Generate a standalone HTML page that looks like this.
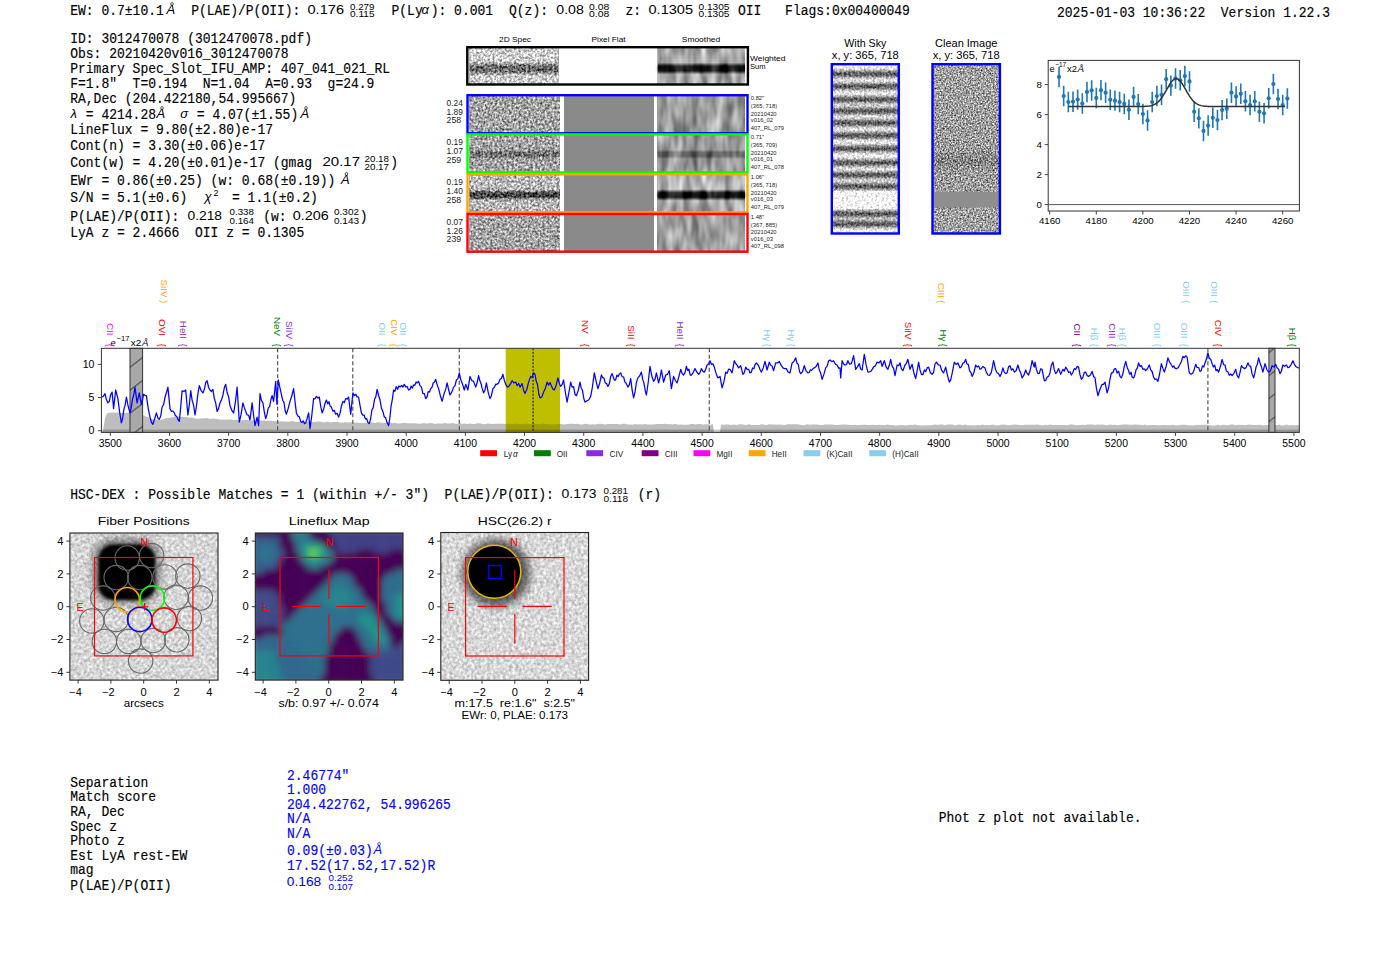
<!DOCTYPE html>
<html><head><meta charset="utf-8"><style>html,body{margin:0;padding:0;background:#fff;width:1400px;height:953px;overflow:hidden}svg{display:block} text{white-space:pre}</style></head>
<body><svg width="1400" height="953" viewBox="0 0 1400 953">
<defs><filter id="gr0" x="0" y="0" width="1" height="1" color-interpolation-filters="sRGB"><feTurbulence type="fractalNoise" baseFrequency="0.42" numOctaves="2" seed="11" result="t"/><feColorMatrix in="t" type="matrix" values="1 0 0 0 0  1 0 0 0 0  1 0 0 0 0  0 0 0 0 1" result="g"/><feComposite in="SourceGraphic" in2="g" operator="arithmetic" k1="0" k2="1" k3="1.15" k4="-0.575" result="m"/><feComposite in="m" in2="SourceGraphic" operator="in"/></filter><filter id="gr1" x="0" y="0" width="1" height="1" color-interpolation-filters="sRGB"><feTurbulence type="fractalNoise" baseFrequency="0.42" numOctaves="2" seed="12" result="t"/><feColorMatrix in="t" type="matrix" values="1 0 0 0 0  1 0 0 0 0  1 0 0 0 0  0 0 0 0 1" result="g"/><feComposite in="SourceGraphic" in2="g" operator="arithmetic" k1="0" k2="1" k3="1.15" k4="-0.575" result="m"/><feComposite in="m" in2="SourceGraphic" operator="in"/></filter><filter id="gr2" x="0" y="0" width="1" height="1" color-interpolation-filters="sRGB"><feTurbulence type="fractalNoise" baseFrequency="0.42" numOctaves="2" seed="13" result="t"/><feColorMatrix in="t" type="matrix" values="1 0 0 0 0  1 0 0 0 0  1 0 0 0 0  0 0 0 0 1" result="g"/><feComposite in="SourceGraphic" in2="g" operator="arithmetic" k1="0" k2="1" k3="1.15" k4="-0.575" result="m"/><feComposite in="m" in2="SourceGraphic" operator="in"/></filter><filter id="gr3" x="0" y="0" width="1" height="1" color-interpolation-filters="sRGB"><feTurbulence type="fractalNoise" baseFrequency="0.42" numOctaves="2" seed="14" result="t"/><feColorMatrix in="t" type="matrix" values="1 0 0 0 0  1 0 0 0 0  1 0 0 0 0  0 0 0 0 1" result="g"/><feComposite in="SourceGraphic" in2="g" operator="arithmetic" k1="0" k2="1" k3="1.15" k4="-0.575" result="m"/><feComposite in="m" in2="SourceGraphic" operator="in"/></filter><filter id="gr4" x="0" y="0" width="1" height="1" color-interpolation-filters="sRGB"><feTurbulence type="fractalNoise" baseFrequency="0.42" numOctaves="2" seed="15" result="t"/><feColorMatrix in="t" type="matrix" values="1 0 0 0 0  1 0 0 0 0  1 0 0 0 0  0 0 0 0 1" result="g"/><feComposite in="SourceGraphic" in2="g" operator="arithmetic" k1="0" k2="1" k3="1.15" k4="-0.575" result="m"/><feComposite in="m" in2="SourceGraphic" operator="in"/></filter><filter id="gr5" x="0" y="0" width="1" height="1" color-interpolation-filters="sRGB"><feTurbulence type="fractalNoise" baseFrequency="0.42" numOctaves="2" seed="16" result="t"/><feColorMatrix in="t" type="matrix" values="1 0 0 0 0  1 0 0 0 0  1 0 0 0 0  0 0 0 0 1" result="g"/><feComposite in="SourceGraphic" in2="g" operator="arithmetic" k1="0" k2="1" k3="1.15" k4="-0.575" result="m"/><feComposite in="m" in2="SourceGraphic" operator="in"/></filter><filter id="gr6" x="0" y="0" width="1" height="1" color-interpolation-filters="sRGB"><feTurbulence type="fractalNoise" baseFrequency="0.42" numOctaves="2" seed="17" result="t"/><feColorMatrix in="t" type="matrix" values="1 0 0 0 0  1 0 0 0 0  1 0 0 0 0  0 0 0 0 1" result="g"/><feComposite in="SourceGraphic" in2="g" operator="arithmetic" k1="0" k2="1" k3="1.15" k4="-0.575" result="m"/><feComposite in="m" in2="SourceGraphic" operator="in"/></filter><filter id="gr7" x="0" y="0" width="1" height="1" color-interpolation-filters="sRGB"><feTurbulence type="fractalNoise" baseFrequency="0.42" numOctaves="2" seed="18" result="t"/><feColorMatrix in="t" type="matrix" values="1 0 0 0 0  1 0 0 0 0  1 0 0 0 0  0 0 0 0 1" result="g"/><feComposite in="SourceGraphic" in2="g" operator="arithmetic" k1="0" k2="1" k3="1.15" k4="-0.575" result="m"/><feComposite in="m" in2="SourceGraphic" operator="in"/></filter><filter id="sm0" x="0" y="0" width="1" height="1" color-interpolation-filters="sRGB"><feTurbulence type="fractalNoise" baseFrequency="0.12 0.035" numOctaves="2" seed="31" result="t"/><feColorMatrix in="t" type="matrix" values="1 0 0 0 0  1 0 0 0 0  1 0 0 0 0  0 0 0 0 1" result="g"/><feComposite in="SourceGraphic" in2="g" operator="arithmetic" k1="0" k2="1" k3="0.75" k4="-0.375" result="m"/><feComposite in="m" in2="SourceGraphic" operator="in"/></filter><filter id="sm1" x="0" y="0" width="1" height="1" color-interpolation-filters="sRGB"><feTurbulence type="fractalNoise" baseFrequency="0.12 0.035" numOctaves="2" seed="32" result="t"/><feColorMatrix in="t" type="matrix" values="1 0 0 0 0  1 0 0 0 0  1 0 0 0 0  0 0 0 0 1" result="g"/><feComposite in="SourceGraphic" in2="g" operator="arithmetic" k1="0" k2="1" k3="0.75" k4="-0.375" result="m"/><feComposite in="m" in2="SourceGraphic" operator="in"/></filter><filter id="sm2" x="0" y="0" width="1" height="1" color-interpolation-filters="sRGB"><feTurbulence type="fractalNoise" baseFrequency="0.12 0.035" numOctaves="2" seed="33" result="t"/><feColorMatrix in="t" type="matrix" values="1 0 0 0 0  1 0 0 0 0  1 0 0 0 0  0 0 0 0 1" result="g"/><feComposite in="SourceGraphic" in2="g" operator="arithmetic" k1="0" k2="1" k3="0.75" k4="-0.375" result="m"/><feComposite in="m" in2="SourceGraphic" operator="in"/></filter><filter id="sm3" x="0" y="0" width="1" height="1" color-interpolation-filters="sRGB"><feTurbulence type="fractalNoise" baseFrequency="0.12 0.035" numOctaves="2" seed="34" result="t"/><feColorMatrix in="t" type="matrix" values="1 0 0 0 0  1 0 0 0 0  1 0 0 0 0  0 0 0 0 1" result="g"/><feComposite in="SourceGraphic" in2="g" operator="arithmetic" k1="0" k2="1" k3="0.75" k4="-0.375" result="m"/><feComposite in="m" in2="SourceGraphic" operator="in"/></filter><filter id="sm4" x="0" y="0" width="1" height="1" color-interpolation-filters="sRGB"><feTurbulence type="fractalNoise" baseFrequency="0.12 0.035" numOctaves="2" seed="35" result="t"/><feColorMatrix in="t" type="matrix" values="1 0 0 0 0  1 0 0 0 0  1 0 0 0 0  0 0 0 0 1" result="g"/><feComposite in="SourceGraphic" in2="g" operator="arithmetic" k1="0" k2="1" k3="0.75" k4="-0.375" result="m"/><feComposite in="m" in2="SourceGraphic" operator="in"/></filter><filter id="sm5" x="0" y="0" width="1" height="1" color-interpolation-filters="sRGB"><feTurbulence type="fractalNoise" baseFrequency="0.12 0.035" numOctaves="2" seed="36" result="t"/><feColorMatrix in="t" type="matrix" values="1 0 0 0 0  1 0 0 0 0  1 0 0 0 0  0 0 0 0 1" result="g"/><feComposite in="SourceGraphic" in2="g" operator="arithmetic" k1="0" k2="1" k3="0.75" k4="-0.375" result="m"/><feComposite in="m" in2="SourceGraphic" operator="in"/></filter><linearGradient id="g_ws2d" x1="0" y1="0" x2="0" y2="1"><stop offset="0.0000" stop-color="#d0d0d0"/><stop offset="0.3856" stop-color="#d0d0d0"/><stop offset="0.5022" stop-color="#686868"/><stop offset="0.6422" stop-color="#686868"/><stop offset="0.7589" stop-color="#d0d0d0"/><stop offset="1.0000" stop-color="#d0d0d0"/></linearGradient><linearGradient id="g_wssm" x1="0" y1="0" x2="0" y2="1"><stop offset="0.0000" stop-color="#a8a8a8"/><stop offset="0.4067" stop-color="#a8a8a8"/><stop offset="0.5067" stop-color="#1a1a1a"/><stop offset="0.6267" stop-color="#1a1a1a"/><stop offset="0.7267" stop-color="#a8a8a8"/><stop offset="1.0000" stop-color="#a8a8a8"/></linearGradient><linearGradient id="g_r02d" x1="0" y1="0" x2="0" y2="1"><stop offset="0.0000" stop-color="#a4a4a4"/><stop offset="1.0000" stop-color="#a4a4a4"/></linearGradient><linearGradient id="g_r0sm" x1="0" y1="0" x2="0" y2="1"><stop offset="0.0000" stop-color="#9c9c9c"/><stop offset="1.0000" stop-color="#9c9c9c"/></linearGradient><linearGradient id="g_r12d" x1="0" y1="0" x2="0" y2="1"><stop offset="0.0000" stop-color="#a4a4a4"/><stop offset="0.4113" stop-color="#a4a4a4"/><stop offset="0.4884" stop-color="#707070"/><stop offset="0.5810" stop-color="#707070"/><stop offset="0.6581" stop-color="#a4a4a4"/><stop offset="1.0000" stop-color="#a4a4a4"/></linearGradient><linearGradient id="g_r1sm" x1="0" y1="0" x2="0" y2="1"><stop offset="0.0000" stop-color="#9c9c9c"/><stop offset="0.4113" stop-color="#9c9c9c"/><stop offset="0.4884" stop-color="#6a6a6a"/><stop offset="0.5810" stop-color="#6a6a6a"/><stop offset="0.6581" stop-color="#9c9c9c"/><stop offset="1.0000" stop-color="#9c9c9c"/></linearGradient><linearGradient id="g_r22d" x1="0" y1="0" x2="0" y2="1"><stop offset="0.0000" stop-color="#b8b8b8"/><stop offset="0.4237" stop-color="#b8b8b8"/><stop offset="0.5059" stop-color="#404040"/><stop offset="0.6046" stop-color="#404040"/><stop offset="0.6869" stop-color="#b8b8b8"/><stop offset="1.0000" stop-color="#b8b8b8"/></linearGradient><linearGradient id="g_r2sm" x1="0" y1="0" x2="0" y2="1"><stop offset="0.0000" stop-color="#b0b0b0"/><stop offset="0.4072" stop-color="#b0b0b0"/><stop offset="0.4997" stop-color="#151515"/><stop offset="0.6108" stop-color="#151515"/><stop offset="0.7033" stop-color="#b0b0b0"/><stop offset="1.0000" stop-color="#b0b0b0"/></linearGradient><linearGradient id="g_r32d" x1="0" y1="0" x2="0" y2="1"><stop offset="0.0000" stop-color="#a4a4a4"/><stop offset="1.0000" stop-color="#a4a4a4"/></linearGradient><linearGradient id="g_r3sm" x1="0" y1="0" x2="0" y2="1"><stop offset="0.0000" stop-color="#9c9c9c"/><stop offset="1.0000" stop-color="#9c9c9c"/></linearGradient><filter id="sblur" x="-50%" y="-50%" width="200%" height="200%"><feGaussianBlur stdDeviation="1.6"/></filter><linearGradient id="g_sky" x1="0" y1="0" x2="0" y2="1"><stop offset="0.0000" stop-color="rgb(249,249,249)"/><stop offset="0.0030" stop-color="rgb(249,249,249)"/><stop offset="0.0059" stop-color="rgb(249,249,249)"/><stop offset="0.0089" stop-color="rgb(249,249,249)"/><stop offset="0.0118" stop-color="rgb(249,249,249)"/><stop offset="0.0148" stop-color="rgb(247,247,247)"/><stop offset="0.0178" stop-color="rgb(242,242,242)"/><stop offset="0.0207" stop-color="rgb(237,237,237)"/><stop offset="0.0237" stop-color="rgb(229,229,229)"/><stop offset="0.0266" stop-color="rgb(219,219,219)"/><stop offset="0.0296" stop-color="rgb(207,207,207)"/><stop offset="0.0325" stop-color="rgb(193,193,193)"/><stop offset="0.0355" stop-color="rgb(176,176,176)"/><stop offset="0.0385" stop-color="rgb(159,159,159)"/><stop offset="0.0414" stop-color="rgb(141,141,141)"/><stop offset="0.0444" stop-color="rgb(123,123,123)"/><stop offset="0.0473" stop-color="rgb(108,108,108)"/><stop offset="0.0503" stop-color="rgb(96,96,96)"/><stop offset="0.0533" stop-color="rgb(89,89,89)"/><stop offset="0.0562" stop-color="rgb(86,86,86)"/><stop offset="0.0592" stop-color="rgb(89,89,89)"/><stop offset="0.0621" stop-color="rgb(96,96,96)"/><stop offset="0.0651" stop-color="rgb(108,108,108)"/><stop offset="0.0680" stop-color="rgb(123,123,123)"/><stop offset="0.0710" stop-color="rgb(140,140,140)"/><stop offset="0.0740" stop-color="rgb(158,158,158)"/><stop offset="0.0769" stop-color="rgb(175,175,175)"/><stop offset="0.0799" stop-color="rgb(191,191,191)"/><stop offset="0.0828" stop-color="rgb(204,204,204)"/><stop offset="0.0858" stop-color="rgb(214,214,214)"/><stop offset="0.0888" stop-color="rgb(221,221,221)"/><stop offset="0.0917" stop-color="rgb(224,224,224)"/><stop offset="0.0947" stop-color="rgb(223,223,223)"/><stop offset="0.0976" stop-color="rgb(219,219,219)"/><stop offset="0.1006" stop-color="rgb(212,212,212)"/><stop offset="0.1036" stop-color="rgb(201,201,201)"/><stop offset="0.1065" stop-color="rgb(188,188,188)"/><stop offset="0.1095" stop-color="rgb(172,172,172)"/><stop offset="0.1124" stop-color="rgb(154,154,154)"/><stop offset="0.1154" stop-color="rgb(137,137,137)"/><stop offset="0.1183" stop-color="rgb(120,120,120)"/><stop offset="0.1213" stop-color="rgb(106,106,106)"/><stop offset="0.1243" stop-color="rgb(94,94,94)"/><stop offset="0.1272" stop-color="rgb(88,88,88)"/><stop offset="0.1302" stop-color="rgb(86,86,86)"/><stop offset="0.1331" stop-color="rgb(90,90,90)"/><stop offset="0.1361" stop-color="rgb(98,98,98)"/><stop offset="0.1391" stop-color="rgb(111,111,111)"/><stop offset="0.1420" stop-color="rgb(127,127,127)"/><stop offset="0.1450" stop-color="rgb(144,144,144)"/><stop offset="0.1479" stop-color="rgb(162,162,162)"/><stop offset="0.1509" stop-color="rgb(179,179,179)"/><stop offset="0.1538" stop-color="rgb(195,195,195)"/><stop offset="0.1568" stop-color="rgb(208,208,208)"/><stop offset="0.1598" stop-color="rgb(219,219,219)"/><stop offset="0.1627" stop-color="rgb(226,226,226)"/><stop offset="0.1657" stop-color="rgb(231,231,231)"/><stop offset="0.1686" stop-color="rgb(232,232,232)"/><stop offset="0.1716" stop-color="rgb(231,231,231)"/><stop offset="0.1746" stop-color="rgb(226,226,226)"/><stop offset="0.1775" stop-color="rgb(219,219,219)"/><stop offset="0.1805" stop-color="rgb(208,208,208)"/><stop offset="0.1834" stop-color="rgb(195,195,195)"/><stop offset="0.1864" stop-color="rgb(179,179,179)"/><stop offset="0.1893" stop-color="rgb(162,162,162)"/><stop offset="0.1923" stop-color="rgb(144,144,144)"/><stop offset="0.1953" stop-color="rgb(127,127,127)"/><stop offset="0.1982" stop-color="rgb(111,111,111)"/><stop offset="0.2012" stop-color="rgb(98,98,98)"/><stop offset="0.2041" stop-color="rgb(90,90,90)"/><stop offset="0.2071" stop-color="rgb(86,86,86)"/><stop offset="0.2101" stop-color="rgb(88,88,88)"/><stop offset="0.2130" stop-color="rgb(94,94,94)"/><stop offset="0.2160" stop-color="rgb(105,105,105)"/><stop offset="0.2189" stop-color="rgb(120,120,120)"/><stop offset="0.2219" stop-color="rgb(136,136,136)"/><stop offset="0.2249" stop-color="rgb(153,153,153)"/><stop offset="0.2278" stop-color="rgb(170,170,170)"/><stop offset="0.2308" stop-color="rgb(184,184,184)"/><stop offset="0.2337" stop-color="rgb(196,196,196)"/><stop offset="0.2367" stop-color="rgb(205,205,205)"/><stop offset="0.2396" stop-color="rgb(210,210,210)"/><stop offset="0.2426" stop-color="rgb(210,210,210)"/><stop offset="0.2456" stop-color="rgb(206,206,206)"/><stop offset="0.2485" stop-color="rgb(198,198,198)"/><stop offset="0.2515" stop-color="rgb(187,187,187)"/><stop offset="0.2544" stop-color="rgb(173,173,173)"/><stop offset="0.2574" stop-color="rgb(157,157,157)"/><stop offset="0.2604" stop-color="rgb(139,139,139)"/><stop offset="0.2633" stop-color="rgb(123,123,123)"/><stop offset="0.2663" stop-color="rgb(108,108,108)"/><stop offset="0.2692" stop-color="rgb(96,96,96)"/><stop offset="0.2722" stop-color="rgb(89,89,89)"/><stop offset="0.2751" stop-color="rgb(86,86,86)"/><stop offset="0.2781" stop-color="rgb(89,89,89)"/><stop offset="0.2811" stop-color="rgb(96,96,96)"/><stop offset="0.2840" stop-color="rgb(108,108,108)"/><stop offset="0.2870" stop-color="rgb(123,123,123)"/><stop offset="0.2899" stop-color="rgb(140,140,140)"/><stop offset="0.2929" stop-color="rgb(158,158,158)"/><stop offset="0.2959" stop-color="rgb(174,174,174)"/><stop offset="0.2988" stop-color="rgb(190,190,190)"/><stop offset="0.3018" stop-color="rgb(202,202,202)"/><stop offset="0.3047" stop-color="rgb(211,211,211)"/><stop offset="0.3077" stop-color="rgb(217,217,217)"/><stop offset="0.3107" stop-color="rgb(219,219,219)"/><stop offset="0.3136" stop-color="rgb(217,217,217)"/><stop offset="0.3166" stop-color="rgb(211,211,211)"/><stop offset="0.3195" stop-color="rgb(202,202,202)"/><stop offset="0.3225" stop-color="rgb(190,190,190)"/><stop offset="0.3254" stop-color="rgb(174,174,174)"/><stop offset="0.3284" stop-color="rgb(158,158,158)"/><stop offset="0.3314" stop-color="rgb(140,140,140)"/><stop offset="0.3343" stop-color="rgb(123,123,123)"/><stop offset="0.3373" stop-color="rgb(108,108,108)"/><stop offset="0.3402" stop-color="rgb(96,96,96)"/><stop offset="0.3432" stop-color="rgb(89,89,89)"/><stop offset="0.3462" stop-color="rgb(86,86,86)"/><stop offset="0.3491" stop-color="rgb(89,89,89)"/><stop offset="0.3521" stop-color="rgb(96,96,96)"/><stop offset="0.3550" stop-color="rgb(108,108,108)"/><stop offset="0.3580" stop-color="rgb(123,123,123)"/><stop offset="0.3609" stop-color="rgb(140,140,140)"/><stop offset="0.3639" stop-color="rgb(158,158,158)"/><stop offset="0.3669" stop-color="rgb(175,175,175)"/><stop offset="0.3698" stop-color="rgb(191,191,191)"/><stop offset="0.3728" stop-color="rgb(204,204,204)"/><stop offset="0.3757" stop-color="rgb(214,214,214)"/><stop offset="0.3787" stop-color="rgb(221,221,221)"/><stop offset="0.3817" stop-color="rgb(225,225,225)"/><stop offset="0.3846" stop-color="rgb(225,225,225)"/><stop offset="0.3876" stop-color="rgb(221,221,221)"/><stop offset="0.3905" stop-color="rgb(214,214,214)"/><stop offset="0.3935" stop-color="rgb(204,204,204)"/><stop offset="0.3964" stop-color="rgb(191,191,191)"/><stop offset="0.3994" stop-color="rgb(175,175,175)"/><stop offset="0.4024" stop-color="rgb(158,158,158)"/><stop offset="0.4053" stop-color="rgb(140,140,140)"/><stop offset="0.4083" stop-color="rgb(123,123,123)"/><stop offset="0.4112" stop-color="rgb(108,108,108)"/><stop offset="0.4142" stop-color="rgb(96,96,96)"/><stop offset="0.4172" stop-color="rgb(89,89,89)"/><stop offset="0.4201" stop-color="rgb(86,86,86)"/><stop offset="0.4231" stop-color="rgb(89,89,89)"/><stop offset="0.4260" stop-color="rgb(96,96,96)"/><stop offset="0.4290" stop-color="rgb(108,108,108)"/><stop offset="0.4320" stop-color="rgb(123,123,123)"/><stop offset="0.4349" stop-color="rgb(140,140,140)"/><stop offset="0.4379" stop-color="rgb(158,158,158)"/><stop offset="0.4408" stop-color="rgb(176,176,176)"/><stop offset="0.4438" stop-color="rgb(192,192,192)"/><stop offset="0.4467" stop-color="rgb(206,206,206)"/><stop offset="0.4497" stop-color="rgb(217,217,217)"/><stop offset="0.4527" stop-color="rgb(225,225,225)"/><stop offset="0.4556" stop-color="rgb(230,230,230)"/><stop offset="0.4586" stop-color="rgb(232,232,232)"/><stop offset="0.4615" stop-color="rgb(231,231,231)"/><stop offset="0.4645" stop-color="rgb(227,227,227)"/><stop offset="0.4675" stop-color="rgb(220,220,220)"/><stop offset="0.4704" stop-color="rgb(210,210,210)"/><stop offset="0.4734" stop-color="rgb(198,198,198)"/><stop offset="0.4763" stop-color="rgb(182,182,182)"/><stop offset="0.4793" stop-color="rgb(165,165,165)"/><stop offset="0.4822" stop-color="rgb(148,148,148)"/><stop offset="0.4852" stop-color="rgb(130,130,130)"/><stop offset="0.4882" stop-color="rgb(114,114,114)"/><stop offset="0.4911" stop-color="rgb(101,101,101)"/><stop offset="0.4941" stop-color="rgb(91,91,91)"/><stop offset="0.4970" stop-color="rgb(87,87,87)"/><stop offset="0.5000" stop-color="rgb(87,87,87)"/><stop offset="0.5030" stop-color="rgb(93,93,93)"/><stop offset="0.5059" stop-color="rgb(103,103,103)"/><stop offset="0.5089" stop-color="rgb(117,117,117)"/><stop offset="0.5118" stop-color="rgb(134,134,134)"/><stop offset="0.5148" stop-color="rgb(151,151,151)"/><stop offset="0.5178" stop-color="rgb(169,169,169)"/><stop offset="0.5207" stop-color="rgb(186,186,186)"/><stop offset="0.5237" stop-color="rgb(201,201,201)"/><stop offset="0.5266" stop-color="rgb(214,214,214)"/><stop offset="0.5296" stop-color="rgb(224,224,224)"/><stop offset="0.5325" stop-color="rgb(232,232,232)"/><stop offset="0.5355" stop-color="rgb(237,237,237)"/><stop offset="0.5385" stop-color="rgb(239,239,239)"/><stop offset="0.5414" stop-color="rgb(239,239,239)"/><stop offset="0.5444" stop-color="rgb(237,237,237)"/><stop offset="0.5473" stop-color="rgb(232,232,232)"/><stop offset="0.5503" stop-color="rgb(224,224,224)"/><stop offset="0.5533" stop-color="rgb(214,214,214)"/><stop offset="0.5562" stop-color="rgb(201,201,201)"/><stop offset="0.5592" stop-color="rgb(186,186,186)"/><stop offset="0.5621" stop-color="rgb(169,169,169)"/><stop offset="0.5651" stop-color="rgb(151,151,151)"/><stop offset="0.5680" stop-color="rgb(134,134,134)"/><stop offset="0.5710" stop-color="rgb(117,117,117)"/><stop offset="0.5740" stop-color="rgb(103,103,103)"/><stop offset="0.5769" stop-color="rgb(93,93,93)"/><stop offset="0.5799" stop-color="rgb(87,87,87)"/><stop offset="0.5828" stop-color="rgb(87,87,87)"/><stop offset="0.5858" stop-color="rgb(91,91,91)"/><stop offset="0.5888" stop-color="rgb(101,101,101)"/><stop offset="0.5917" stop-color="rgb(114,114,114)"/><stop offset="0.5947" stop-color="rgb(130,130,130)"/><stop offset="0.5976" stop-color="rgb(147,147,147)"/><stop offset="0.6006" stop-color="rgb(165,165,165)"/><stop offset="0.6036" stop-color="rgb(181,181,181)"/><stop offset="0.6065" stop-color="rgb(196,196,196)"/><stop offset="0.6095" stop-color="rgb(207,207,207)"/><stop offset="0.6124" stop-color="rgb(216,216,216)"/><stop offset="0.6154" stop-color="rgb(220,220,220)"/><stop offset="0.6183" stop-color="rgb(222,222,222)"/><stop offset="0.6213" stop-color="rgb(219,219,219)"/><stop offset="0.6243" stop-color="rgb(213,213,213)"/><stop offset="0.6272" stop-color="rgb(203,203,203)"/><stop offset="0.6302" stop-color="rgb(190,190,190)"/><stop offset="0.6331" stop-color="rgb(175,175,175)"/><stop offset="0.6361" stop-color="rgb(158,158,158)"/><stop offset="0.6391" stop-color="rgb(140,140,140)"/><stop offset="0.6420" stop-color="rgb(123,123,123)"/><stop offset="0.6450" stop-color="rgb(108,108,108)"/><stop offset="0.6479" stop-color="rgb(96,96,96)"/><stop offset="0.6509" stop-color="rgb(89,89,89)"/><stop offset="0.6538" stop-color="rgb(86,86,86)"/><stop offset="0.6568" stop-color="rgb(89,89,89)"/><stop offset="0.6598" stop-color="rgb(96,96,96)"/><stop offset="0.6627" stop-color="rgb(108,108,108)"/><stop offset="0.6657" stop-color="rgb(123,123,123)"/><stop offset="0.6686" stop-color="rgb(139,139,139)"/><stop offset="0.6716" stop-color="rgb(157,157,157)"/><stop offset="0.6746" stop-color="rgb(173,173,173)"/><stop offset="0.6775" stop-color="rgb(187,187,187)"/><stop offset="0.6805" stop-color="rgb(198,198,198)"/><stop offset="0.6834" stop-color="rgb(206,206,206)"/><stop offset="0.6864" stop-color="rgb(210,210,210)"/><stop offset="0.6893" stop-color="rgb(210,210,210)"/><stop offset="0.6923" stop-color="rgb(205,205,205)"/><stop offset="0.6953" stop-color="rgb(196,196,196)"/><stop offset="0.6982" stop-color="rgb(184,184,184)"/><stop offset="0.7012" stop-color="rgb(170,170,170)"/><stop offset="0.7041" stop-color="rgb(153,153,153)"/><stop offset="0.7071" stop-color="rgb(136,136,136)"/><stop offset="0.7101" stop-color="rgb(120,120,120)"/><stop offset="0.7130" stop-color="rgb(105,105,105)"/><stop offset="0.7160" stop-color="rgb(94,94,94)"/><stop offset="0.7189" stop-color="rgb(88,88,88)"/><stop offset="0.7219" stop-color="rgb(86,86,86)"/><stop offset="0.7249" stop-color="rgb(90,90,90)"/><stop offset="0.7278" stop-color="rgb(98,98,98)"/><stop offset="0.7308" stop-color="rgb(111,111,111)"/><stop offset="0.7337" stop-color="rgb(127,127,127)"/><stop offset="0.7367" stop-color="rgb(144,144,144)"/><stop offset="0.7396" stop-color="rgb(162,162,162)"/><stop offset="0.7426" stop-color="rgb(180,180,180)"/><stop offset="0.7456" stop-color="rgb(196,196,196)"/><stop offset="0.7485" stop-color="rgb(210,210,210)"/><stop offset="0.7515" stop-color="rgb(249,249,249)"/><stop offset="0.7544" stop-color="rgb(249,249,249)"/><stop offset="0.7574" stop-color="rgb(249,249,249)"/><stop offset="0.7604" stop-color="rgb(249,249,249)"/><stop offset="0.7633" stop-color="rgb(249,249,249)"/><stop offset="0.7663" stop-color="rgb(249,249,249)"/><stop offset="0.7692" stop-color="rgb(249,249,249)"/><stop offset="0.7722" stop-color="rgb(249,249,249)"/><stop offset="0.7751" stop-color="rgb(249,249,249)"/><stop offset="0.7781" stop-color="rgb(249,249,249)"/><stop offset="0.7811" stop-color="rgb(249,249,249)"/><stop offset="0.7840" stop-color="rgb(249,249,249)"/><stop offset="0.7870" stop-color="rgb(249,249,249)"/><stop offset="0.7899" stop-color="rgb(249,249,249)"/><stop offset="0.7929" stop-color="rgb(249,249,249)"/><stop offset="0.7959" stop-color="rgb(249,249,249)"/><stop offset="0.7988" stop-color="rgb(249,249,249)"/><stop offset="0.8018" stop-color="rgb(249,249,249)"/><stop offset="0.8047" stop-color="rgb(249,249,249)"/><stop offset="0.8077" stop-color="rgb(249,249,249)"/><stop offset="0.8107" stop-color="rgb(249,249,249)"/><stop offset="0.8136" stop-color="rgb(249,249,249)"/><stop offset="0.8166" stop-color="rgb(249,249,249)"/><stop offset="0.8195" stop-color="rgb(249,249,249)"/><stop offset="0.8225" stop-color="rgb(249,249,249)"/><stop offset="0.8254" stop-color="rgb(249,249,249)"/><stop offset="0.8284" stop-color="rgb(249,249,249)"/><stop offset="0.8314" stop-color="rgb(249,249,249)"/><stop offset="0.8343" stop-color="rgb(249,249,249)"/><stop offset="0.8373" stop-color="rgb(249,249,249)"/><stop offset="0.8402" stop-color="rgb(249,249,249)"/><stop offset="0.8432" stop-color="rgb(249,249,249)"/><stop offset="0.8462" stop-color="rgb(249,249,249)"/><stop offset="0.8491" stop-color="rgb(249,249,249)"/><stop offset="0.8521" stop-color="rgb(249,249,249)"/><stop offset="0.8550" stop-color="rgb(215,215,215)"/><stop offset="0.8580" stop-color="rgb(202,202,202)"/><stop offset="0.8609" stop-color="rgb(186,186,186)"/><stop offset="0.8639" stop-color="rgb(169,169,169)"/><stop offset="0.8669" stop-color="rgb(151,151,151)"/><stop offset="0.8698" stop-color="rgb(134,134,134)"/><stop offset="0.8728" stop-color="rgb(117,117,117)"/><stop offset="0.8757" stop-color="rgb(103,103,103)"/><stop offset="0.8787" stop-color="rgb(93,93,93)"/><stop offset="0.8817" stop-color="rgb(87,87,87)"/><stop offset="0.8846" stop-color="rgb(86,86,86)"/><stop offset="0.8876" stop-color="rgb(91,91,91)"/><stop offset="0.8905" stop-color="rgb(100,100,100)"/><stop offset="0.8935" stop-color="rgb(112,112,112)"/><stop offset="0.8964" stop-color="rgb(127,127,127)"/><stop offset="0.8994" stop-color="rgb(143,143,143)"/><stop offset="0.9024" stop-color="rgb(158,158,158)"/><stop offset="0.9053" stop-color="rgb(171,171,171)"/><stop offset="0.9083" stop-color="rgb(181,181,181)"/><stop offset="0.9112" stop-color="rgb(187,187,187)"/><stop offset="0.9142" stop-color="rgb(188,188,188)"/><stop offset="0.9172" stop-color="rgb(185,185,185)"/><stop offset="0.9201" stop-color="rgb(177,177,177)"/><stop offset="0.9231" stop-color="rgb(166,166,166)"/><stop offset="0.9260" stop-color="rgb(152,152,152)"/><stop offset="0.9290" stop-color="rgb(136,136,136)"/><stop offset="0.9320" stop-color="rgb(121,121,121)"/><stop offset="0.9349" stop-color="rgb(107,107,107)"/><stop offset="0.9379" stop-color="rgb(96,96,96)"/><stop offset="0.9408" stop-color="rgb(88,88,88)"/><stop offset="0.9438" stop-color="rgb(86,86,86)"/><stop offset="0.9467" stop-color="rgb(89,89,89)"/><stop offset="0.9497" stop-color="rgb(96,96,96)"/><stop offset="0.9527" stop-color="rgb(108,108,108)"/><stop offset="0.9556" stop-color="rgb(123,123,123)"/><stop offset="0.9586" stop-color="rgb(141,141,141)"/><stop offset="0.9615" stop-color="rgb(159,159,159)"/><stop offset="0.9645" stop-color="rgb(176,176,176)"/><stop offset="0.9675" stop-color="rgb(193,193,193)"/><stop offset="0.9704" stop-color="rgb(207,207,207)"/><stop offset="0.9734" stop-color="rgb(219,219,219)"/><stop offset="0.9763" stop-color="rgb(229,229,229)"/><stop offset="0.9793" stop-color="rgb(237,237,237)"/><stop offset="0.9822" stop-color="rgb(242,242,242)"/><stop offset="0.9852" stop-color="rgb(247,247,247)"/><stop offset="0.9882" stop-color="rgb(249,249,249)"/><stop offset="0.9911" stop-color="rgb(249,249,249)"/><stop offset="0.9941" stop-color="rgb(249,249,249)"/><stop offset="0.9970" stop-color="rgb(249,249,249)"/><stop offset="1.0000" stop-color="rgb(249,249,249)"/></linearGradient><filter id="grsky" x="0" y="0" width="1" height="1" color-interpolation-filters="sRGB"><feTurbulence type="fractalNoise" baseFrequency="0.45" numOctaves="2" seed="77" result="t"/><feColorMatrix in="t" type="matrix" values="1 0 0 0 0  1 0 0 0 0  1 0 0 0 0  0 0 0 0 1" result="g"/><feComposite in="SourceGraphic" in2="g" operator="arithmetic" k1="0" k2="1" k3="0.8" k4="-0.400" result="m"/><feComposite in="m" in2="SourceGraphic" operator="in"/></filter><filter id="grcl" x="0" y="0" width="1" height="1" color-interpolation-filters="sRGB"><feTurbulence type="fractalNoise" baseFrequency="0.6" numOctaves="2" seed="78" result="t"/><feColorMatrix in="t" type="matrix" values="1 0 0 0 0  1 0 0 0 0  1 0 0 0 0  0 0 0 0 1" result="g"/><feComposite in="SourceGraphic" in2="g" operator="arithmetic" k1="0" k2="1" k3="1.3" k4="-0.650" result="m"/><feComposite in="m" in2="SourceGraphic" operator="in"/></filter><linearGradient id="g_cl" x1="0" y1="0" x2="0" y2="1"><stop offset="0" stop-color="#a2a2a2"/><stop offset="0.5" stop-color="#9c9c9c"/><stop offset="0.57" stop-color="#828282"/><stop offset="0.64" stop-color="#9c9c9c"/><stop offset="1" stop-color="#a2a2a2"/></linearGradient><pattern id="hatch" patternUnits="userSpaceOnUse" width="40" height="23" patternTransform="translate(0,8.5)"><path d="M-2,23 L40,-9.5 M-2,46 L40,13.5 M-2,0 L40,-32.5" stroke="#222" stroke-width="1" fill="none"/></pattern><filter id="grimg" x="0" y="0" width="1" height="1" color-interpolation-filters="sRGB"><feTurbulence type="fractalNoise" baseFrequency="0.32" numOctaves="2" seed="91" result="t"/><feColorMatrix in="t" type="matrix" values="1 0 0 0 0  1 0 0 0 0  1 0 0 0 0  0 0 0 0 1" result="g"/><feComposite in="SourceGraphic" in2="g" operator="arithmetic" k1="0" k2="1" k3="0.5" k4="-0.250" result="m"/><feComposite in="m" in2="SourceGraphic" operator="in"/></filter><filter id="grimg2" x="0" y="0" width="1" height="1" color-interpolation-filters="sRGB"><feTurbulence type="fractalNoise" baseFrequency="0.32" numOctaves="2" seed="92" result="t"/><feColorMatrix in="t" type="matrix" values="1 0 0 0 0  1 0 0 0 0  1 0 0 0 0  0 0 0 0 1" result="g"/><feComposite in="SourceGraphic" in2="g" operator="arithmetic" k1="0" k2="1" k3="0.5" k4="-0.250" result="m"/><feComposite in="m" in2="SourceGraphic" operator="in"/></filter><filter id="blob" x="-50%" y="-50%" width="200%" height="200%"><feGaussianBlur stdDeviation="4.5"/></filter><filter id="blob2" x="-50%" y="-50%" width="200%" height="200%"><feGaussianBlur stdDeviation="3.5"/></filter><filter id="blob3" x="-50%" y="-50%" width="200%" height="200%"><feGaussianBlur stdDeviation="1.8"/></filter><filter id="blob4" x="-10%" y="-10%" width="120%" height="120%"><feGaussianBlur stdDeviation="3"/></filter></defs>
<rect width="1400" height="953" fill="#fff"/>
<text x="70.20" y="15.20" font-family="'Liberation Mono', monospace" font-size="13.8" fill="#000" stroke="#000" stroke-width="0.15" textLength="93.60" lengthAdjust="spacingAndGlyphs" >EW: 0.7±10.1</text>
<text x="166.50" y="14.30" font-family="'Liberation Sans', sans-serif" font-size="13" fill="#000" text-anchor="start" font-style="italic">Å</text>
<text x="191.20" y="15.20" font-family="'Liberation Mono', monospace" font-size="13.8" fill="#000" stroke="#000" stroke-width="0.15" textLength="109.20" lengthAdjust="spacingAndGlyphs" >P(LAE)/P(OII):</text>
<text x="307.50" y="14.30" font-family="'Liberation Sans', sans-serif" font-size="12.3" fill="#000" text-anchor="start" textLength="36.50" lengthAdjust="spacingAndGlyphs" >0.176</text>
<text x="350.00" y="9.60" font-family="'Liberation Sans', sans-serif" font-size="8.6" fill="#000" text-anchor="start" textLength="24.50" lengthAdjust="spacingAndGlyphs" >0.279</text>
<text x="350.00" y="17.10" font-family="'Liberation Sans', sans-serif" font-size="8.6" fill="#000" text-anchor="start" textLength="24.50" lengthAdjust="spacingAndGlyphs" >0.115</text>
<text x="391.50" y="15.20" font-family="'Liberation Mono', monospace" font-size="13.8" fill="#000" stroke="#000" stroke-width="0.15" textLength="31.20" lengthAdjust="spacingAndGlyphs" >P(Ly</text>
<text x="421.50" y="14.30" font-family="'Liberation Sans', sans-serif" font-size="13" fill="#000" text-anchor="start" font-style="italic">α</text>
<text x="430.70" y="15.20" font-family="'Liberation Mono', monospace" font-size="13.8" fill="#000" stroke="#000" stroke-width="0.15" textLength="62.40" lengthAdjust="spacingAndGlyphs" >): 0.001</text>
<text x="509.00" y="15.20" font-family="'Liberation Mono', monospace" font-size="13.8" fill="#000" stroke="#000" stroke-width="0.15" textLength="39.00" lengthAdjust="spacingAndGlyphs" >Q(z):</text>
<text x="556.30" y="14.30" font-family="'Liberation Sans', sans-serif" font-size="12.3" fill="#000" text-anchor="start" textLength="27.50" lengthAdjust="spacingAndGlyphs" >0.08</text>
<text x="589.00" y="9.60" font-family="'Liberation Sans', sans-serif" font-size="8.6" fill="#000" text-anchor="start" textLength="20.30" lengthAdjust="spacingAndGlyphs" >0.08</text>
<text x="589.00" y="17.10" font-family="'Liberation Sans', sans-serif" font-size="8.6" fill="#000" text-anchor="start" textLength="20.30" lengthAdjust="spacingAndGlyphs" >0.08</text>
<text x="625.40" y="15.20" font-family="'Liberation Mono', monospace" font-size="13.8" fill="#000" stroke="#000" stroke-width="0.15" textLength="15.60" lengthAdjust="spacingAndGlyphs" >z:</text>
<text x="648.50" y="14.30" font-family="'Liberation Sans', sans-serif" font-size="12.3" fill="#000" text-anchor="start" textLength="44.50" lengthAdjust="spacingAndGlyphs" >0.1305</text>
<text x="698.50" y="9.60" font-family="'Liberation Sans', sans-serif" font-size="8.6" fill="#000" text-anchor="start" textLength="31.00" lengthAdjust="spacingAndGlyphs" >0.1305</text>
<text x="698.50" y="17.10" font-family="'Liberation Sans', sans-serif" font-size="8.6" fill="#000" text-anchor="start" textLength="31.00" lengthAdjust="spacingAndGlyphs" >0.1305</text>
<text x="738.00" y="15.20" font-family="'Liberation Mono', monospace" font-size="13.8" fill="#000" stroke="#000" stroke-width="0.15" textLength="23.40" lengthAdjust="spacingAndGlyphs" >OII</text>
<text x="785.10" y="15.20" font-family="'Liberation Mono', monospace" font-size="13.8" fill="#000" stroke="#000" stroke-width="0.15" textLength="124.80" lengthAdjust="spacingAndGlyphs" >Flags:0x00400049</text>
<text x="1057.00" y="16.70" font-family="'Liberation Mono', monospace" font-size="13.8" fill="#000" stroke="#000" stroke-width="0.15" textLength="273.00" lengthAdjust="spacingAndGlyphs" >2025-01-03 10:36:22  Version 1.22.3</text>
<text x="70.20" y="43.30" font-family="'Liberation Mono', monospace" font-size="13.8" fill="#000" stroke="#000" stroke-width="0.15" textLength="241.80" lengthAdjust="spacingAndGlyphs" >ID: 3012470078 (3012470078.pdf)</text>
<text x="70.20" y="58.00" font-family="'Liberation Mono', monospace" font-size="13.8" fill="#000" stroke="#000" stroke-width="0.15" textLength="218.40" lengthAdjust="spacingAndGlyphs" >Obs: 20210420v016_3012470078</text>
<text x="70.20" y="73.00" font-family="'Liberation Mono', monospace" font-size="13.8" fill="#000" stroke="#000" stroke-width="0.15" textLength="319.80" lengthAdjust="spacingAndGlyphs" >Primary Spec_Slot_IFU_AMP: 407_041_021_RL</text>
<text x="70.20" y="87.60" font-family="'Liberation Mono', monospace" font-size="13.8" fill="#000" stroke="#000" stroke-width="0.15" textLength="304.20" lengthAdjust="spacingAndGlyphs" >F=1.8"  T=0.194  N=1.04  A=0.93  g=24.9</text>
<text x="70.20" y="102.60" font-family="'Liberation Mono', monospace" font-size="13.8" fill="#000" stroke="#000" stroke-width="0.15" textLength="226.20" lengthAdjust="spacingAndGlyphs" >RA,Dec (204.422180,54.995667)</text>
<text x="70.50" y="117.90" font-family="'Liberation Sans', sans-serif" font-size="13" fill="#000" text-anchor="start" font-style="italic">λ</text>
<text x="78.00" y="118.80" font-family="'Liberation Mono', monospace" font-size="13.8" fill="#000" stroke="#000" stroke-width="0.15" textLength="78.00" lengthAdjust="spacingAndGlyphs" > = 4214.28</text>
<text x="156.50" y="117.90" font-family="'Liberation Sans', sans-serif" font-size="13" fill="#000" text-anchor="start" font-style="italic">Å</text>
<text x="180.30" y="117.90" font-family="'Liberation Sans', sans-serif" font-size="13" fill="#000" text-anchor="start" font-style="italic">σ</text>
<text x="189.00" y="118.80" font-family="'Liberation Mono', monospace" font-size="13.8" fill="#000" stroke="#000" stroke-width="0.15" textLength="109.20" lengthAdjust="spacingAndGlyphs" > = 4.07(±1.55)</text>
<text x="300.50" y="117.90" font-family="'Liberation Sans', sans-serif" font-size="13" fill="#000" text-anchor="start" font-style="italic">Å</text>
<text x="70.20" y="134.20" font-family="'Liberation Mono', monospace" font-size="13.8" fill="#000" stroke="#000" stroke-width="0.15" textLength="202.80" lengthAdjust="spacingAndGlyphs" >LineFlux = 9.80(±2.80)e-17</text>
<text x="70.20" y="149.50" font-family="'Liberation Mono', monospace" font-size="13.8" fill="#000" stroke="#000" stroke-width="0.15" textLength="195.00" lengthAdjust="spacingAndGlyphs" >Cont(n) = 3.30(±0.06)e-17</text>
<text x="70.20" y="167.30" font-family="'Liberation Mono', monospace" font-size="13.8" fill="#000" stroke="#000" stroke-width="0.15" textLength="241.80" lengthAdjust="spacingAndGlyphs" >Cont(w) = 4.20(±0.01)e-17 (gmag</text>
<text x="322.50" y="166.40" font-family="'Liberation Sans', sans-serif" font-size="12.3" fill="#000" text-anchor="start" textLength="37.50" lengthAdjust="spacingAndGlyphs" >20.17</text>
<text x="364.50" y="161.50" font-family="'Liberation Sans', sans-serif" font-size="8.6" fill="#000" text-anchor="start" textLength="24.50" lengthAdjust="spacingAndGlyphs" >20.18</text>
<text x="364.50" y="169.50" font-family="'Liberation Sans', sans-serif" font-size="8.6" fill="#000" text-anchor="start" textLength="24.50" lengthAdjust="spacingAndGlyphs" >20.17</text>
<text x="390.20" y="167.30" font-family="'Liberation Mono', monospace" font-size="13.8" fill="#000" stroke="#000" stroke-width="0.15" textLength="7.80" lengthAdjust="spacingAndGlyphs" >)</text>
<text x="70.20" y="185.20" font-family="'Liberation Mono', monospace" font-size="13.8" fill="#000" stroke="#000" stroke-width="0.15" textLength="265.20" lengthAdjust="spacingAndGlyphs" >EWr = 0.86(±0.25) (w: 0.68(±0.19))</text>
<text x="341.00" y="184.30" font-family="'Liberation Sans', sans-serif" font-size="13" fill="#000" text-anchor="start" font-style="italic">Å</text>
<text x="70.20" y="202.30" font-family="'Liberation Mono', monospace" font-size="13.8" fill="#000" stroke="#000" stroke-width="0.15" textLength="117.00" lengthAdjust="spacingAndGlyphs" >S/N = 5.1(±0.6)</text>
<text x="204.50" y="201.40" font-family="'Liberation Sans', sans-serif" font-size="13" fill="#000" text-anchor="start" font-style="italic">χ</text>
<text x="213.50" y="196.00" font-family="'Liberation Sans', sans-serif" font-size="9" fill="#000" text-anchor="start" >2</text>
<text x="224.20" y="202.30" font-family="'Liberation Mono', monospace" font-size="13.8" fill="#000" stroke="#000" stroke-width="0.15" textLength="93.60" lengthAdjust="spacingAndGlyphs" > = 1.1(±0.2)</text>
<text x="70.20" y="220.90" font-family="'Liberation Mono', monospace" font-size="13.8" fill="#000" stroke="#000" stroke-width="0.15" textLength="109.20" lengthAdjust="spacingAndGlyphs" >P(LAE)/P(OII):</text>
<text x="187.50" y="220.00" font-family="'Liberation Sans', sans-serif" font-size="12.3" fill="#000" text-anchor="start" textLength="34.50" lengthAdjust="spacingAndGlyphs" >0.218</text>
<text x="229.50" y="215.00" font-family="'Liberation Sans', sans-serif" font-size="8.6" fill="#000" text-anchor="start" textLength="24.50" lengthAdjust="spacingAndGlyphs" >0.338</text>
<text x="229.50" y="223.50" font-family="'Liberation Sans', sans-serif" font-size="8.6" fill="#000" text-anchor="start" textLength="24.50" lengthAdjust="spacingAndGlyphs" >0.164</text>
<text x="263.20" y="220.90" font-family="'Liberation Mono', monospace" font-size="13.8" fill="#000" stroke="#000" stroke-width="0.15" textLength="23.40" lengthAdjust="spacingAndGlyphs" >(w:</text>
<text x="292.80" y="220.00" font-family="'Liberation Sans', sans-serif" font-size="12.3" fill="#000" text-anchor="start" textLength="36.00" lengthAdjust="spacingAndGlyphs" >0.206</text>
<text x="334.00" y="215.00" font-family="'Liberation Sans', sans-serif" font-size="8.6" fill="#000" text-anchor="start" textLength="25.00" lengthAdjust="spacingAndGlyphs" >0.302</text>
<text x="334.00" y="223.50" font-family="'Liberation Sans', sans-serif" font-size="8.6" fill="#000" text-anchor="start" textLength="25.00" lengthAdjust="spacingAndGlyphs" >0.143</text>
<text x="359.80" y="220.90" font-family="'Liberation Mono', monospace" font-size="13.8" fill="#000" stroke="#000" stroke-width="0.15" textLength="7.80" lengthAdjust="spacingAndGlyphs" >)</text>
<text x="70.20" y="237.30" font-family="'Liberation Mono', monospace" font-size="13.8" fill="#000" stroke="#000" stroke-width="0.15" textLength="234.00" lengthAdjust="spacingAndGlyphs" >LyA z = 2.4666  OII z = 0.1305</text>
<text x="515.00" y="42.20" font-family="'Liberation Sans', sans-serif" font-size="7.6" fill="#000" text-anchor="middle" textLength="32.00" lengthAdjust="spacingAndGlyphs" >2D Spec</text>
<text x="608.60" y="42.20" font-family="'Liberation Sans', sans-serif" font-size="7.6" fill="#000" text-anchor="middle" textLength="34.00" lengthAdjust="spacingAndGlyphs" >Pixel Flat</text>
<text x="701.00" y="42.20" font-family="'Liberation Sans', sans-serif" font-size="7.6" fill="#000" text-anchor="middle" textLength="38.50" lengthAdjust="spacingAndGlyphs" >Smoothed</text>
<rect x="469.5" y="47.5" width="89" height="37" fill="url(#g_ws2d)" filter="url(#gr0)"/>
<rect x="657.5" y="47.5" width="87.5" height="37" fill="url(#g_wssm)" filter="url(#sm0)"/>
<rect x="467.3" y="47.2" width="280.6" height="37.3" fill="none" stroke="#000" stroke-width="2.4"/>
<text x="750.00" y="60.80" font-family="'Liberation Sans', sans-serif" font-size="7.6" fill="#000" text-anchor="start" textLength="35.50" lengthAdjust="spacingAndGlyphs" >Weighted</text>
<text x="750.00" y="69.20" font-family="'Liberation Sans', sans-serif" font-size="7.6" fill="#000" text-anchor="start" textLength="15.50" lengthAdjust="spacingAndGlyphs" >Sum</text>
<rect x="469.5" y="94.30" width="90.5" height="38.9" fill="url(#g_r02d)" filter="url(#gr1)"/>
<rect x="564" y="94.30" width="90" height="38.9" fill="#8a8a8a"/>
<rect x="657.3" y="94.30" width="87.7" height="38.9" fill="url(#g_r0sm)" filter="url(#sm1)"/>
<rect x="469.5" y="133.50" width="90.5" height="38.9" fill="url(#g_r12d)" filter="url(#gr2)"/>
<rect x="564" y="133.50" width="90" height="38.9" fill="#8a8a8a"/>
<rect x="657.3" y="133.50" width="87.7" height="38.9" fill="url(#g_r1sm)" filter="url(#sm2)"/>
<rect x="469.5" y="173.40" width="90.5" height="38.9" fill="url(#g_r22d)" filter="url(#gr3)"/>
<rect x="564" y="173.40" width="90" height="38.9" fill="#8a8a8a"/>
<rect x="657.3" y="173.40" width="87.7" height="38.9" fill="url(#g_r2sm)" filter="url(#sm3)"/>
<rect x="469.5" y="213.10" width="90.5" height="38.9" fill="url(#g_r32d)" filter="url(#gr4)"/>
<rect x="564" y="213.10" width="90" height="38.9" fill="#8a8a8a"/>
<rect x="657.3" y="213.10" width="87.7" height="38.9" fill="url(#g_r3sm)" filter="url(#sm4)"/>
<g filter="url(#sblur)" fill="#000">
<ellipse cx="666.3" cy="68.4" rx="8.7" ry="3.6" fill-opacity="0.55"/>
<ellipse cx="699.7" cy="68.4" rx="8.7" ry="3.6" fill-opacity="0.75"/>
<ellipse cx="723.4" cy="68.4" rx="4.4" ry="3.6" fill-opacity="0.4"/>
<ellipse cx="738.5" cy="68.4" rx="5.5" ry="3.6" fill-opacity="0.5"/>
<ellipse cx="664.1" cy="195" rx="6.6" ry="3.6" fill-opacity="0.5"/>
<ellipse cx="681.0" cy="195" rx="4.0" ry="3.6" fill-opacity="0.35"/>
<ellipse cx="698.9" cy="195" rx="8.9" ry="3.6" fill-opacity="0.7"/>
<ellipse cx="724.4" cy="195" rx="4.6" ry="3.6" fill-opacity="0.45"/>
<ellipse cx="739.3" cy="195" rx="6.7" ry="3.6" fill-opacity="0.5"/>
</g>
<rect x="467.5" y="95.20" width="280" height="38.10" fill="none" stroke="#0000ff" stroke-width="2.4"/>
<text x="446.60" y="105.90" font-family="'Liberation Sans', sans-serif" font-size="8.4" fill="#222" text-anchor="start" textLength="16.40" lengthAdjust="spacingAndGlyphs" >0.24</text>
<text x="446.60" y="114.70" font-family="'Liberation Sans', sans-serif" font-size="8.4" fill="#222" text-anchor="start" textLength="16.40" lengthAdjust="spacingAndGlyphs" >1.89</text>
<text x="446.60" y="123.40" font-family="'Liberation Sans', sans-serif" font-size="8.4" fill="#222" text-anchor="start" textLength="14.60" lengthAdjust="spacingAndGlyphs" >258</text>
<text x="750.80" y="100.10" font-family="'Liberation Sans', sans-serif" font-size="5.8" fill="#222" text-anchor="start" >0.82"</text>
<text x="750.80" y="107.90" font-family="'Liberation Sans', sans-serif" font-size="5.8" fill="#222" text-anchor="start" >(365, 718)</text>
<text x="750.80" y="115.60" font-family="'Liberation Sans', sans-serif" font-size="5.8" fill="#222" text-anchor="start" >20210420</text>
<text x="750.80" y="122.00" font-family="'Liberation Sans', sans-serif" font-size="5.8" fill="#222" text-anchor="start" >v016_02</text>
<text x="750.80" y="129.50" font-family="'Liberation Sans', sans-serif" font-size="5.8" fill="#222" text-anchor="start" >407_RL_079</text>
<rect x="467.5" y="134.40" width="280" height="38.10" fill="none" stroke="#00ff00" stroke-width="2.4"/>
<text x="446.60" y="145.10" font-family="'Liberation Sans', sans-serif" font-size="8.4" fill="#222" text-anchor="start" textLength="16.40" lengthAdjust="spacingAndGlyphs" >0.19</text>
<text x="446.60" y="153.90" font-family="'Liberation Sans', sans-serif" font-size="8.4" fill="#222" text-anchor="start" textLength="16.40" lengthAdjust="spacingAndGlyphs" >1.07</text>
<text x="446.60" y="162.60" font-family="'Liberation Sans', sans-serif" font-size="8.4" fill="#222" text-anchor="start" textLength="14.60" lengthAdjust="spacingAndGlyphs" >259</text>
<text x="750.80" y="139.30" font-family="'Liberation Sans', sans-serif" font-size="5.8" fill="#222" text-anchor="start" >0.71"</text>
<text x="750.80" y="147.10" font-family="'Liberation Sans', sans-serif" font-size="5.8" fill="#222" text-anchor="start" >(365, 709)</text>
<text x="750.80" y="154.80" font-family="'Liberation Sans', sans-serif" font-size="5.8" fill="#222" text-anchor="start" >20210420</text>
<text x="750.80" y="161.20" font-family="'Liberation Sans', sans-serif" font-size="5.8" fill="#222" text-anchor="start" >v016_01</text>
<text x="750.80" y="168.70" font-family="'Liberation Sans', sans-serif" font-size="5.8" fill="#222" text-anchor="start" >407_RL_078</text>
<rect x="467.5" y="174.30" width="280" height="38.10" fill="none" stroke="#ffa500" stroke-width="2.4"/>
<text x="446.60" y="185.00" font-family="'Liberation Sans', sans-serif" font-size="8.4" fill="#222" text-anchor="start" textLength="16.40" lengthAdjust="spacingAndGlyphs" >0.19</text>
<text x="446.60" y="193.80" font-family="'Liberation Sans', sans-serif" font-size="8.4" fill="#222" text-anchor="start" textLength="16.40" lengthAdjust="spacingAndGlyphs" >1.40</text>
<text x="446.60" y="202.50" font-family="'Liberation Sans', sans-serif" font-size="8.4" fill="#222" text-anchor="start" textLength="14.60" lengthAdjust="spacingAndGlyphs" >258</text>
<text x="750.80" y="179.20" font-family="'Liberation Sans', sans-serif" font-size="5.8" fill="#222" text-anchor="start" >1.06"</text>
<text x="750.80" y="187.00" font-family="'Liberation Sans', sans-serif" font-size="5.8" fill="#222" text-anchor="start" >(365, 718)</text>
<text x="750.80" y="194.70" font-family="'Liberation Sans', sans-serif" font-size="5.8" fill="#222" text-anchor="start" >20210420</text>
<text x="750.80" y="201.10" font-family="'Liberation Sans', sans-serif" font-size="5.8" fill="#222" text-anchor="start" >v016_03</text>
<text x="750.80" y="208.60" font-family="'Liberation Sans', sans-serif" font-size="5.8" fill="#222" text-anchor="start" >407_RL_079</text>
<rect x="467.5" y="214.00" width="280" height="37.70" fill="none" stroke="#ff0000" stroke-width="2.4"/>
<text x="446.60" y="224.70" font-family="'Liberation Sans', sans-serif" font-size="8.4" fill="#222" text-anchor="start" textLength="16.40" lengthAdjust="spacingAndGlyphs" >0.07</text>
<text x="446.60" y="233.50" font-family="'Liberation Sans', sans-serif" font-size="8.4" fill="#222" text-anchor="start" textLength="16.40" lengthAdjust="spacingAndGlyphs" >1.26</text>
<text x="446.60" y="242.20" font-family="'Liberation Sans', sans-serif" font-size="8.4" fill="#222" text-anchor="start" textLength="14.60" lengthAdjust="spacingAndGlyphs" >239</text>
<text x="750.80" y="218.90" font-family="'Liberation Sans', sans-serif" font-size="5.8" fill="#222" text-anchor="start" >1.48"</text>
<text x="750.80" y="226.70" font-family="'Liberation Sans', sans-serif" font-size="5.8" fill="#222" text-anchor="start" >(367, 885)</text>
<text x="750.80" y="234.40" font-family="'Liberation Sans', sans-serif" font-size="5.8" fill="#222" text-anchor="start" >20210420</text>
<text x="750.80" y="240.80" font-family="'Liberation Sans', sans-serif" font-size="5.8" fill="#222" text-anchor="start" >v016_03</text>
<text x="750.80" y="248.30" font-family="'Liberation Sans', sans-serif" font-size="5.8" fill="#222" text-anchor="start" >407_RL_098</text>
<text x="865.30" y="47.40" font-family="'Liberation Sans', sans-serif" font-size="10.4" fill="#000" text-anchor="middle" textLength="42.00" lengthAdjust="spacingAndGlyphs" >With Sky</text>
<text x="865.30" y="58.50" font-family="'Liberation Sans', sans-serif" font-size="10.4" fill="#000" text-anchor="middle" textLength="67.00" lengthAdjust="spacingAndGlyphs" >x, y: 365, 718</text>
<text x="966.20" y="47.40" font-family="'Liberation Sans', sans-serif" font-size="10.4" fill="#000" text-anchor="middle" textLength="62.40" lengthAdjust="spacingAndGlyphs" >Clean Image</text>
<text x="966.20" y="58.50" font-family="'Liberation Sans', sans-serif" font-size="10.4" fill="#000" text-anchor="middle" textLength="67.00" lengthAdjust="spacingAndGlyphs" >x, y: 365, 718</text>
<rect x="832" y="64.5" width="66.5" height="169" fill="url(#g_sky)" filter="url(#grsky)"/>
<rect x="932.5" y="64.5" width="67.5" height="169" fill="url(#g_cl)" filter="url(#grcl)"/>
<rect x="933" y="191.7" width="66.5" height="15.6" fill="#8e8e8e"/>
<rect x="831.8" y="64.2" width="67" height="169.3" fill="none" stroke="#0000ff" stroke-width="2.4"/>
<rect x="932.5" y="64.2" width="67.4" height="169.3" fill="none" stroke="#0000ff" stroke-width="2.4"/>
<rect x="1048.2" y="60.4" width="251.20000000000005" height="150.6" fill="none" stroke="#333" stroke-width="1"/>
<line x1="1048.2" y1="204.60" x2="1299.4" y2="204.60" stroke="#555" stroke-width="1"/>
<line x1="1049.70" y1="211.0" x2="1049.70" y2="214.5" stroke="#333" stroke-width="0.9"/>
<text x="1049.70" y="223.90" font-family="'Liberation Sans', sans-serif" font-size="8.6" fill="#000" text-anchor="middle" textLength="21.50" lengthAdjust="spacingAndGlyphs" >4160</text>
<line x1="1096.30" y1="211.0" x2="1096.30" y2="214.5" stroke="#333" stroke-width="0.9"/>
<text x="1096.30" y="223.90" font-family="'Liberation Sans', sans-serif" font-size="8.6" fill="#000" text-anchor="middle" textLength="21.50" lengthAdjust="spacingAndGlyphs" >4180</text>
<line x1="1142.90" y1="211.0" x2="1142.90" y2="214.5" stroke="#333" stroke-width="0.9"/>
<text x="1142.90" y="223.90" font-family="'Liberation Sans', sans-serif" font-size="8.6" fill="#000" text-anchor="middle" textLength="21.50" lengthAdjust="spacingAndGlyphs" >4200</text>
<line x1="1189.50" y1="211.0" x2="1189.50" y2="214.5" stroke="#333" stroke-width="0.9"/>
<text x="1189.50" y="223.90" font-family="'Liberation Sans', sans-serif" font-size="8.6" fill="#000" text-anchor="middle" textLength="21.50" lengthAdjust="spacingAndGlyphs" >4220</text>
<line x1="1236.10" y1="211.0" x2="1236.10" y2="214.5" stroke="#333" stroke-width="0.9"/>
<text x="1236.10" y="223.90" font-family="'Liberation Sans', sans-serif" font-size="8.6" fill="#000" text-anchor="middle" textLength="21.50" lengthAdjust="spacingAndGlyphs" >4240</text>
<line x1="1282.70" y1="211.0" x2="1282.70" y2="214.5" stroke="#333" stroke-width="0.9"/>
<text x="1282.70" y="223.90" font-family="'Liberation Sans', sans-serif" font-size="8.6" fill="#000" text-anchor="middle" textLength="21.50" lengthAdjust="spacingAndGlyphs" >4260</text>
<line x1="1044.7" y1="204.60" x2="1048.2" y2="204.60" stroke="#333" stroke-width="0.9"/>
<text x="1041.80" y="207.70" font-family="'Liberation Sans', sans-serif" font-size="8.6" fill="#000" text-anchor="end" textLength="5.40" lengthAdjust="spacingAndGlyphs" >0</text>
<line x1="1044.7" y1="174.60" x2="1048.2" y2="174.60" stroke="#333" stroke-width="0.9"/>
<text x="1041.80" y="177.70" font-family="'Liberation Sans', sans-serif" font-size="8.6" fill="#000" text-anchor="end" textLength="5.40" lengthAdjust="spacingAndGlyphs" >2</text>
<line x1="1044.7" y1="144.60" x2="1048.2" y2="144.60" stroke="#333" stroke-width="0.9"/>
<text x="1041.80" y="147.70" font-family="'Liberation Sans', sans-serif" font-size="8.6" fill="#000" text-anchor="end" textLength="5.40" lengthAdjust="spacingAndGlyphs" >4</text>
<line x1="1044.7" y1="114.60" x2="1048.2" y2="114.60" stroke="#333" stroke-width="0.9"/>
<text x="1041.80" y="117.70" font-family="'Liberation Sans', sans-serif" font-size="8.6" fill="#000" text-anchor="end" textLength="5.40" lengthAdjust="spacingAndGlyphs" >6</text>
<line x1="1044.7" y1="84.60" x2="1048.2" y2="84.60" stroke="#333" stroke-width="0.9"/>
<text x="1041.80" y="87.70" font-family="'Liberation Sans', sans-serif" font-size="8.6" fill="#000" text-anchor="end" textLength="5.40" lengthAdjust="spacingAndGlyphs" >8</text>
<path d="M1059.02 66.75V87.15M1063.68 85.80V106.20M1068.34 91.80V112.20M1073.00 91.50V111.90M1077.66 89.40V109.80M1082.32 93.30V113.70M1086.98 81.75V102.15M1091.64 80.25V100.65M1096.30 87.75V108.15M1100.96 79.95V100.35M1105.62 82.50V102.90M1110.28 89.55V109.95M1114.94 90.45V110.85M1119.60 91.80V112.20M1124.26 93.75V114.15M1128.92 99.60V120.00M1133.58 86.70V107.10M1138.24 93.90V114.30M1142.90 103.80V124.20M1147.56 110.25V130.65M1152.22 91.80V112.20M1156.88 85.80V106.20M1161.54 84.60V105.00M1166.20 69.00V89.40M1170.86 75.45V95.85M1175.52 68.25V88.65M1180.18 70.05V90.45M1184.84 65.85V86.25M1189.50 71.25V91.65M1194.16 101.55V121.95M1198.82 108.15V128.55M1203.48 120.75V141.15M1208.14 115.35V135.75M1212.80 107.55V127.95M1217.46 109.80V130.20M1222.12 99.90V120.30M1226.78 98.55V118.95M1231.44 82.50V102.90M1236.10 86.25V106.65M1240.76 83.55V103.95M1245.42 91.05V111.45M1250.08 94.80V115.20M1254.74 91.05V111.45M1259.40 101.55V121.95M1264.06 103.05V123.45M1268.72 88.05V108.45M1273.38 73.80V94.20M1278.04 88.80V109.20M1282.70 94.80V115.20M1287.36 88.35V108.75" stroke="#1f77b4" stroke-width="1.6" fill="none"/>
<circle cx="1059.02" cy="76.95" r="2.1" fill="#1f77b4"/>
<circle cx="1063.68" cy="96.00" r="2.1" fill="#1f77b4"/>
<circle cx="1068.34" cy="102.00" r="2.1" fill="#1f77b4"/>
<circle cx="1073.00" cy="101.70" r="2.1" fill="#1f77b4"/>
<circle cx="1077.66" cy="99.60" r="2.1" fill="#1f77b4"/>
<circle cx="1082.32" cy="103.50" r="2.1" fill="#1f77b4"/>
<circle cx="1086.98" cy="91.95" r="2.1" fill="#1f77b4"/>
<circle cx="1091.64" cy="90.45" r="2.1" fill="#1f77b4"/>
<circle cx="1096.30" cy="97.95" r="2.1" fill="#1f77b4"/>
<circle cx="1100.96" cy="90.15" r="2.1" fill="#1f77b4"/>
<circle cx="1105.62" cy="92.70" r="2.1" fill="#1f77b4"/>
<circle cx="1110.28" cy="99.75" r="2.1" fill="#1f77b4"/>
<circle cx="1114.94" cy="100.65" r="2.1" fill="#1f77b4"/>
<circle cx="1119.60" cy="102.00" r="2.1" fill="#1f77b4"/>
<circle cx="1124.26" cy="103.95" r="2.1" fill="#1f77b4"/>
<circle cx="1128.92" cy="109.80" r="2.1" fill="#1f77b4"/>
<circle cx="1133.58" cy="96.90" r="2.1" fill="#1f77b4"/>
<circle cx="1138.24" cy="104.10" r="2.1" fill="#1f77b4"/>
<circle cx="1142.90" cy="114.00" r="2.1" fill="#1f77b4"/>
<circle cx="1147.56" cy="120.45" r="2.1" fill="#1f77b4"/>
<circle cx="1152.22" cy="102.00" r="2.1" fill="#1f77b4"/>
<circle cx="1156.88" cy="96.00" r="2.1" fill="#1f77b4"/>
<circle cx="1161.54" cy="94.80" r="2.1" fill="#1f77b4"/>
<circle cx="1166.20" cy="79.20" r="2.1" fill="#1f77b4"/>
<circle cx="1170.86" cy="85.65" r="2.1" fill="#1f77b4"/>
<circle cx="1175.52" cy="78.45" r="2.1" fill="#1f77b4"/>
<circle cx="1180.18" cy="80.25" r="2.1" fill="#1f77b4"/>
<circle cx="1184.84" cy="76.05" r="2.1" fill="#1f77b4"/>
<circle cx="1189.50" cy="81.45" r="2.1" fill="#1f77b4"/>
<circle cx="1194.16" cy="111.75" r="2.1" fill="#1f77b4"/>
<circle cx="1198.82" cy="118.35" r="2.1" fill="#1f77b4"/>
<circle cx="1203.48" cy="130.95" r="2.1" fill="#1f77b4"/>
<circle cx="1208.14" cy="125.55" r="2.1" fill="#1f77b4"/>
<circle cx="1212.80" cy="117.75" r="2.1" fill="#1f77b4"/>
<circle cx="1217.46" cy="120.00" r="2.1" fill="#1f77b4"/>
<circle cx="1222.12" cy="110.10" r="2.1" fill="#1f77b4"/>
<circle cx="1226.78" cy="108.75" r="2.1" fill="#1f77b4"/>
<circle cx="1231.44" cy="92.70" r="2.1" fill="#1f77b4"/>
<circle cx="1236.10" cy="96.45" r="2.1" fill="#1f77b4"/>
<circle cx="1240.76" cy="93.75" r="2.1" fill="#1f77b4"/>
<circle cx="1245.42" cy="101.25" r="2.1" fill="#1f77b4"/>
<circle cx="1250.08" cy="105.00" r="2.1" fill="#1f77b4"/>
<circle cx="1254.74" cy="101.25" r="2.1" fill="#1f77b4"/>
<circle cx="1259.40" cy="111.75" r="2.1" fill="#1f77b4"/>
<circle cx="1264.06" cy="113.25" r="2.1" fill="#1f77b4"/>
<circle cx="1268.72" cy="98.25" r="2.1" fill="#1f77b4"/>
<circle cx="1273.38" cy="84.00" r="2.1" fill="#1f77b4"/>
<circle cx="1278.04" cy="99.00" r="2.1" fill="#1f77b4"/>
<circle cx="1282.70" cy="105.00" r="2.1" fill="#1f77b4"/>
<circle cx="1287.36" cy="98.55" r="2.1" fill="#1f77b4"/>
<polyline points="1068.34,106.50 1069.51,106.50 1070.67,106.50 1071.84,106.50 1073.00,106.50 1074.16,106.50 1075.33,106.50 1076.50,106.50 1077.66,106.50 1078.83,106.50 1079.99,106.50 1081.15,106.50 1082.32,106.50 1083.49,106.50 1084.65,106.50 1085.82,106.50 1086.98,106.50 1088.14,106.50 1089.31,106.50 1090.48,106.50 1091.64,106.50 1092.81,106.50 1093.97,106.50 1095.13,106.50 1096.30,106.50 1097.47,106.50 1098.63,106.50 1099.80,106.50 1100.96,106.50 1102.12,106.50 1103.29,106.50 1104.46,106.50 1105.62,106.50 1106.79,106.50 1107.95,106.50 1109.12,106.50 1110.28,106.50 1111.45,106.50 1112.61,106.50 1113.78,106.50 1114.94,106.50 1116.11,106.50 1117.27,106.50 1118.43,106.50 1119.60,106.50 1120.77,106.50 1121.93,106.50 1123.10,106.50 1124.26,106.50 1125.42,106.50 1126.59,106.50 1127.76,106.50 1128.92,106.50 1130.09,106.50 1131.25,106.50 1132.41,106.50 1133.58,106.50 1134.75,106.50 1135.91,106.50 1137.08,106.49 1138.24,106.49 1139.40,106.48 1140.57,106.48 1141.74,106.46 1142.90,106.44 1144.07,106.41 1145.23,106.36 1146.39,106.30 1147.56,106.21 1148.73,106.08 1149.89,105.90 1151.06,105.66 1152.22,105.35 1153.38,104.94 1154.55,104.43 1155.72,103.78 1156.88,102.98 1158.05,102.01 1159.21,100.87 1160.38,99.53 1161.54,98.02 1162.71,96.32 1163.87,94.47 1165.04,92.50 1166.20,90.45 1167.37,88.37 1168.53,86.34 1169.70,84.41 1170.86,82.65 1172.03,81.14 1173.19,79.95 1174.36,79.11 1175.52,78.67 1176.68,78.64 1177.85,79.03 1179.02,79.83 1180.18,80.98 1181.35,82.46 1182.51,84.18 1183.67,86.10 1184.84,88.13 1186.01,90.20 1187.17,92.26 1188.34,94.24 1189.50,96.11 1190.66,97.82 1191.83,99.36 1193.00,100.72 1194.16,101.88 1195.33,102.87 1196.49,103.69 1197.65,104.36 1198.82,104.89 1199.99,105.31 1201.15,105.63 1202.32,105.88 1203.48,106.06 1204.64,106.19 1205.81,106.29 1206.98,106.36 1208.14,106.40 1209.31,106.44 1210.47,106.46 1211.63,106.47 1212.80,106.48 1213.97,106.49 1215.13,106.49 1216.30,106.50 1217.46,106.50 1218.62,106.50 1219.79,106.50 1220.95,106.50 1222.12,106.50 1223.29,106.50 1224.45,106.50 1225.62,106.50 1226.78,106.50 1227.95,106.50 1229.11,106.50 1230.28,106.50 1231.44,106.50 1232.61,106.50 1233.77,106.50 1234.93,106.50 1236.10,106.50 1237.27,106.50 1238.43,106.50 1239.60,106.50 1240.76,106.50 1241.92,106.50 1243.09,106.50 1244.26,106.50 1245.42,106.50 1246.59,106.50 1247.75,106.50 1248.91,106.50 1250.08,106.50 1251.25,106.50 1252.41,106.50 1253.58,106.50 1254.74,106.50 1255.90,106.50 1257.07,106.50 1258.24,106.50 1259.40,106.50 1260.57,106.50 1261.73,106.50 1262.89,106.50 1264.06,106.50 1265.23,106.50 1266.39,106.50 1267.56,106.50 1268.72,106.50 1269.88,106.50 1271.05,106.50 1272.22,106.50 1273.38,106.50 1274.55,106.50 1275.71,106.50 1276.88,106.50 1278.04,106.50 1279.20,106.50 1280.37,106.50 1281.54,106.50 1282.70,106.50 1283.87,106.50 1285.03,106.50" fill="none" stroke="#333" stroke-width="1.5"/>
<text x="1049.50" y="71.50" font-family="'Liberation Sans', sans-serif" font-size="9.2" fill="#000" text-anchor="start" >e</text>
<text x="1055.20" y="66.50" font-family="'Liberation Sans', sans-serif" font-size="7" fill="#000" text-anchor="start" textLength="11.00" lengthAdjust="spacingAndGlyphs" >−17</text>
<text x="1067.00" y="71.50" font-family="'Liberation Sans', sans-serif" font-size="9.6" fill="#000" text-anchor="start" textLength="10.00" lengthAdjust="spacingAndGlyphs" >x2</text>
<text x="1077.60" y="71.50" font-family="'Liberation Sans', sans-serif" font-size="9.8" fill="#000" text-anchor="start" font-style="italic">Å</text>
<polygon points="101.4,432.4 103.0,431.0 105.0,418.0 107.0,413.5 109.5,412.8 112.0,412.6 114.6,412.7 117.2,412.6 119.8,412.9 122.4,413.0 125.0,413.0 127.5,412.6 130.0,412.7 132.5,413.6 135.0,413.1 137.5,413.2 140.0,413.5 142.5,415.2 145.0,416.0 148.5,417.5 152.0,419.0 154.7,419.7 157.3,419.6 160.0,420.0 162.7,419.5 165.3,418.3 168.0,418.0 171.5,417.4 175.0,416.5 177.8,417.0 180.5,416.8 183.2,417.1 186.0,417.0 189.0,417.7 192.0,417.6 195.0,418.5 197.5,418.7 200.0,418.5 202.5,418.2 205.0,418.3 207.5,418.0 210.0,418.9 212.5,418.6 215.0,418.8 217.8,419.2 220.6,419.5 223.4,419.4 226.2,419.8 229.0,419.5 231.6,419.5 234.2,420.1 236.9,419.8 239.5,420.4 242.1,420.5 244.8,419.8 247.4,420.0 250.0,420.5 252.5,420.3 255.0,421.1 257.5,420.6 260.0,420.8 262.5,420.6 265.0,420.8 267.5,420.7 270.0,420.8 272.5,421.0 275.0,421.1 277.5,421.5 280.0,421.3 282.5,421.6 285.0,421.6 287.5,421.7 290.0,421.5 292.5,421.0 295.0,421.8 297.5,421.9 300.0,421.5 302.5,422.0 305.0,421.7 307.5,421.9 310.0,421.4 312.5,422.1 315.0,421.9 317.5,421.6 320.0,421.5 322.5,422.3 325.0,422.5 327.5,421.6 330.0,422.4 332.5,422.1 335.0,421.9 337.5,422.0 340.0,422.6 342.5,422.7 345.0,421.9 347.5,422.6 350.0,422.5 352.5,422.1 355.0,422.8 357.5,422.4 360.0,423.0 362.5,423.1 365.0,422.7 367.5,423.2 370.0,422.5 372.5,422.3 375.0,422.9 377.5,422.3 380.0,422.5 382.5,422.8 385.0,423.0 387.5,422.6 390.0,422.5 392.5,423.3 395.0,422.8 397.5,423.5 400.0,423.5 402.5,423.0 405.0,423.1 407.5,423.2 410.0,423.3 412.5,423.3 415.0,423.3 417.5,423.4 420.0,423.7 422.5,423.3 425.0,423.3 427.5,423.6 430.0,423.1 432.5,423.2 435.0,423.9 437.5,423.5 440.0,423.5 442.5,423.6 445.0,423.0 447.5,423.5 450.0,423.6 452.5,423.1 455.0,423.7 457.5,423.7 460.0,423.2 462.5,423.8 465.0,423.6 467.5,423.9 470.0,423.5 472.5,423.9 475.0,424.0 477.5,423.3 480.0,423.3 482.5,423.9 485.0,424.2 487.5,423.5 490.0,423.8 492.5,423.9 495.0,423.7 497.5,423.7 500.0,423.7 502.5,423.8 505.0,424.0 507.5,423.7 510.0,423.8 512.5,424.2 515.0,423.5 517.5,424.1 520.0,424.0 522.5,424.2 525.0,423.8 527.5,423.7 530.0,424.3 532.5,423.8 535.0,423.7 537.5,424.0 540.0,424.2 542.5,423.6 545.0,423.9 547.5,423.9 550.0,424.4 552.5,424.0 555.0,424.4 557.5,423.7 560.0,423.9 562.5,424.2 565.0,424.5 567.5,424.0 570.0,423.8 572.5,423.7 575.0,424.1 577.5,423.8 580.0,424.4 582.5,424.4 585.0,423.8 587.5,423.9 590.0,424.4 592.5,424.3 595.0,424.4 597.5,424.0 600.0,423.8 602.5,423.9 605.0,424.4 607.5,423.9 610.0,424.0 612.5,424.1 615.0,424.1 617.5,424.1 620.0,424.6 622.5,423.8 625.0,423.7 627.5,424.6 630.0,424.6 632.5,424.7 635.0,424.1 637.5,424.6 640.0,424.2 642.5,424.6 645.0,423.9 647.6,424.5 650.1,424.6 652.6,424.4 655.1,424.2 657.6,424.0 660.1,424.1 662.7,424.0 665.2,423.8 667.7,424.3 670.2,424.0 672.7,424.6 675.2,423.8 677.8,424.7 680.3,424.4 682.8,424.7 685.3,424.7 687.8,424.7 690.3,424.3 692.9,423.8 695.4,424.5 697.9,424.0 700.4,424.1 702.9,424.4 705.4,424.3 708.0,424.2 710.5,424.7 713.0,424.3 714.0,432.4 720.0,432.4 721.0,424.6 723.5,424.7 726.1,424.4 728.6,424.4 731.2,425.0 733.7,424.6 736.3,424.9 738.8,424.5 741.4,424.3 743.9,424.7 746.5,424.9 749.0,424.3 751.6,424.9 754.1,425.1 756.7,425.0 759.2,425.0 761.8,424.2 764.3,424.8 766.9,425.0 769.4,424.2 772.0,424.4 774.5,424.4 777.1,424.7 779.6,424.6 782.2,424.7 784.7,425.0 787.3,424.2 789.8,424.2 792.4,424.3 794.9,424.3 797.5,424.3 800.0,424.7 802.5,425.2 805.0,425.1 807.5,424.3 810.0,424.7 812.5,424.6 815.0,424.6 817.5,424.6 820.0,424.9 822.5,424.9 825.0,424.6 827.5,424.5 830.0,424.6 832.5,424.4 835.0,424.9 837.5,425.0 840.0,424.7 842.5,424.4 845.0,424.5 847.5,424.7 850.0,425.0 852.5,425.1 855.0,424.7 857.5,425.2 860.0,425.0 862.5,424.8 865.0,424.8 867.5,424.9 870.0,425.1 872.5,424.8 875.0,425.1 877.5,424.9 880.0,424.7 882.5,425.0 885.0,425.2 887.5,424.5 890.0,424.9 892.5,424.9 895.0,425.4 897.5,425.4 900.0,425.0 902.5,424.9 905.0,425.4 907.5,425.3 910.0,424.8 912.5,425.0 915.0,424.6 917.5,425.3 920.0,425.2 922.5,425.4 925.0,425.3 927.5,425.2 930.0,425.2 932.5,425.1 935.0,424.6 937.5,425.1 940.0,424.5 942.5,424.6 945.0,425.3 947.5,424.5 950.0,424.6 952.5,424.6 955.0,425.4 957.5,424.7 960.0,424.5 962.5,425.3 965.0,424.6 967.5,425.3 970.0,425.2 972.5,425.3 975.0,425.5 977.5,425.1 980.0,425.3 982.5,424.5 985.0,425.3 987.5,425.0 990.0,425.2 992.5,424.6 995.0,425.2 997.5,425.4 1000.0,425.0 1002.5,424.6 1005.0,424.8 1007.5,425.0 1010.0,425.3 1012.5,424.7 1015.0,424.6 1017.5,424.7 1020.0,425.1 1022.5,425.2 1025.0,424.8 1027.5,424.8 1030.0,424.8 1032.5,424.8 1035.0,424.8 1037.5,424.5 1040.0,424.9 1042.5,425.4 1045.0,424.8 1047.5,425.2 1050.0,424.6 1052.5,425.1 1055.0,425.1 1057.5,425.1 1060.0,424.9 1062.5,424.9 1065.0,425.0 1067.5,425.3 1070.0,424.5 1072.5,424.5 1075.0,425.1 1077.5,425.3 1080.0,424.9 1082.5,424.8 1085.0,425.0 1087.5,424.5 1090.0,424.6 1092.5,424.5 1095.0,424.9 1097.5,424.6 1100.0,424.8 1102.5,424.5 1105.0,425.0 1107.5,425.3 1110.0,424.6 1112.5,425.0 1115.0,424.7 1117.5,425.2 1120.0,424.9 1122.5,424.6 1125.0,424.6 1127.5,424.4 1130.0,424.8 1132.5,424.7 1135.0,424.5 1137.5,424.7 1140.0,424.7 1142.5,425.2 1145.0,424.5 1147.5,425.4 1150.0,424.9 1152.5,425.0 1155.0,424.9 1157.5,425.2 1160.0,425.2 1162.5,425.0 1165.0,424.9 1167.5,425.2 1170.0,425.3 1172.5,424.8 1175.0,425.2 1177.5,425.4 1180.0,424.9 1182.5,424.7 1185.0,424.7 1187.5,425.2 1190.0,425.2 1192.5,425.4 1195.0,425.3 1197.5,424.7 1200.0,425.0 1202.5,424.7 1205.1,424.8 1207.6,424.7 1210.2,425.2 1212.7,425.4 1215.3,425.4 1217.8,424.8 1220.4,425.4 1222.9,424.8 1225.5,424.9 1228.0,425.2 1230.6,424.6 1233.1,424.6 1235.6,425.3 1238.2,424.8 1240.7,424.9 1243.3,425.1 1245.8,425.2 1248.4,424.5 1250.9,424.8 1253.5,424.9 1256.0,425.0 1258.6,424.7 1261.1,425.1 1263.7,425.5 1266.2,424.9 1268.7,425.0 1271.3,424.6 1273.8,424.8 1276.4,425.2 1278.9,424.6 1281.5,425.4 1284.0,425.4 1286.6,424.6 1289.1,425.4 1291.7,424.9 1294.2,425.3 1296.8,425.3 1299.3,425.0 1299.3,432.4" fill="#bebebe"/>
<rect x="505.7" y="348.3" width="54.3" height="84.1" fill="#bfbf00"/>
<clipPath id="ybclip"><rect x="505.7" y="348.3" width="54.3" height="84.1"/></clipPath>
<polygon clip-path="url(#ybclip)" points="101.4,432.4 103.0,431.0 105.0,418.0 107.0,413.5 109.5,412.8 112.0,412.6 114.6,412.7 117.2,412.6 119.8,412.9 122.4,413.0 125.0,413.0 127.5,412.6 130.0,412.7 132.5,413.6 135.0,413.1 137.5,413.2 140.0,413.5 142.5,415.2 145.0,416.0 148.5,417.5 152.0,419.0 154.7,419.7 157.3,419.6 160.0,420.0 162.7,419.5 165.3,418.3 168.0,418.0 171.5,417.4 175.0,416.5 177.8,417.0 180.5,416.8 183.2,417.1 186.0,417.0 189.0,417.7 192.0,417.6 195.0,418.5 197.5,418.7 200.0,418.5 202.5,418.2 205.0,418.3 207.5,418.0 210.0,418.9 212.5,418.6 215.0,418.8 217.8,419.2 220.6,419.5 223.4,419.4 226.2,419.8 229.0,419.5 231.6,419.5 234.2,420.1 236.9,419.8 239.5,420.4 242.1,420.5 244.8,419.8 247.4,420.0 250.0,420.5 252.5,420.3 255.0,421.1 257.5,420.6 260.0,420.8 262.5,420.6 265.0,420.8 267.5,420.7 270.0,420.8 272.5,421.0 275.0,421.1 277.5,421.5 280.0,421.3 282.5,421.6 285.0,421.6 287.5,421.7 290.0,421.5 292.5,421.0 295.0,421.8 297.5,421.9 300.0,421.5 302.5,422.0 305.0,421.7 307.5,421.9 310.0,421.4 312.5,422.1 315.0,421.9 317.5,421.6 320.0,421.5 322.5,422.3 325.0,422.5 327.5,421.6 330.0,422.4 332.5,422.1 335.0,421.9 337.5,422.0 340.0,422.6 342.5,422.7 345.0,421.9 347.5,422.6 350.0,422.5 352.5,422.1 355.0,422.8 357.5,422.4 360.0,423.0 362.5,423.1 365.0,422.7 367.5,423.2 370.0,422.5 372.5,422.3 375.0,422.9 377.5,422.3 380.0,422.5 382.5,422.8 385.0,423.0 387.5,422.6 390.0,422.5 392.5,423.3 395.0,422.8 397.5,423.5 400.0,423.5 402.5,423.0 405.0,423.1 407.5,423.2 410.0,423.3 412.5,423.3 415.0,423.3 417.5,423.4 420.0,423.7 422.5,423.3 425.0,423.3 427.5,423.6 430.0,423.1 432.5,423.2 435.0,423.9 437.5,423.5 440.0,423.5 442.5,423.6 445.0,423.0 447.5,423.5 450.0,423.6 452.5,423.1 455.0,423.7 457.5,423.7 460.0,423.2 462.5,423.8 465.0,423.6 467.5,423.9 470.0,423.5 472.5,423.9 475.0,424.0 477.5,423.3 480.0,423.3 482.5,423.9 485.0,424.2 487.5,423.5 490.0,423.8 492.5,423.9 495.0,423.7 497.5,423.7 500.0,423.7 502.5,423.8 505.0,424.0 507.5,423.7 510.0,423.8 512.5,424.2 515.0,423.5 517.5,424.1 520.0,424.0 522.5,424.2 525.0,423.8 527.5,423.7 530.0,424.3 532.5,423.8 535.0,423.7 537.5,424.0 540.0,424.2 542.5,423.6 545.0,423.9 547.5,423.9 550.0,424.4 552.5,424.0 555.0,424.4 557.5,423.7 560.0,423.9 562.5,424.2 565.0,424.5 567.5,424.0 570.0,423.8 572.5,423.7 575.0,424.1 577.5,423.8 580.0,424.4 582.5,424.4 585.0,423.8 587.5,423.9 590.0,424.4 592.5,424.3 595.0,424.4 597.5,424.0 600.0,423.8 602.5,423.9 605.0,424.4 607.5,423.9 610.0,424.0 612.5,424.1 615.0,424.1 617.5,424.1 620.0,424.6 622.5,423.8 625.0,423.7 627.5,424.6 630.0,424.6 632.5,424.7 635.0,424.1 637.5,424.6 640.0,424.2 642.5,424.6 645.0,423.9 647.6,424.5 650.1,424.6 652.6,424.4 655.1,424.2 657.6,424.0 660.1,424.1 662.7,424.0 665.2,423.8 667.7,424.3 670.2,424.0 672.7,424.6 675.2,423.8 677.8,424.7 680.3,424.4 682.8,424.7 685.3,424.7 687.8,424.7 690.3,424.3 692.9,423.8 695.4,424.5 697.9,424.0 700.4,424.1 702.9,424.4 705.4,424.3 708.0,424.2 710.5,424.7 713.0,424.3 714.0,432.4 720.0,432.4 721.0,424.6 723.5,424.7 726.1,424.4 728.6,424.4 731.2,425.0 733.7,424.6 736.3,424.9 738.8,424.5 741.4,424.3 743.9,424.7 746.5,424.9 749.0,424.3 751.6,424.9 754.1,425.1 756.7,425.0 759.2,425.0 761.8,424.2 764.3,424.8 766.9,425.0 769.4,424.2 772.0,424.4 774.5,424.4 777.1,424.7 779.6,424.6 782.2,424.7 784.7,425.0 787.3,424.2 789.8,424.2 792.4,424.3 794.9,424.3 797.5,424.3 800.0,424.7 802.5,425.2 805.0,425.1 807.5,424.3 810.0,424.7 812.5,424.6 815.0,424.6 817.5,424.6 820.0,424.9 822.5,424.9 825.0,424.6 827.5,424.5 830.0,424.6 832.5,424.4 835.0,424.9 837.5,425.0 840.0,424.7 842.5,424.4 845.0,424.5 847.5,424.7 850.0,425.0 852.5,425.1 855.0,424.7 857.5,425.2 860.0,425.0 862.5,424.8 865.0,424.8 867.5,424.9 870.0,425.1 872.5,424.8 875.0,425.1 877.5,424.9 880.0,424.7 882.5,425.0 885.0,425.2 887.5,424.5 890.0,424.9 892.5,424.9 895.0,425.4 897.5,425.4 900.0,425.0 902.5,424.9 905.0,425.4 907.5,425.3 910.0,424.8 912.5,425.0 915.0,424.6 917.5,425.3 920.0,425.2 922.5,425.4 925.0,425.3 927.5,425.2 930.0,425.2 932.5,425.1 935.0,424.6 937.5,425.1 940.0,424.5 942.5,424.6 945.0,425.3 947.5,424.5 950.0,424.6 952.5,424.6 955.0,425.4 957.5,424.7 960.0,424.5 962.5,425.3 965.0,424.6 967.5,425.3 970.0,425.2 972.5,425.3 975.0,425.5 977.5,425.1 980.0,425.3 982.5,424.5 985.0,425.3 987.5,425.0 990.0,425.2 992.5,424.6 995.0,425.2 997.5,425.4 1000.0,425.0 1002.5,424.6 1005.0,424.8 1007.5,425.0 1010.0,425.3 1012.5,424.7 1015.0,424.6 1017.5,424.7 1020.0,425.1 1022.5,425.2 1025.0,424.8 1027.5,424.8 1030.0,424.8 1032.5,424.8 1035.0,424.8 1037.5,424.5 1040.0,424.9 1042.5,425.4 1045.0,424.8 1047.5,425.2 1050.0,424.6 1052.5,425.1 1055.0,425.1 1057.5,425.1 1060.0,424.9 1062.5,424.9 1065.0,425.0 1067.5,425.3 1070.0,424.5 1072.5,424.5 1075.0,425.1 1077.5,425.3 1080.0,424.9 1082.5,424.8 1085.0,425.0 1087.5,424.5 1090.0,424.6 1092.5,424.5 1095.0,424.9 1097.5,424.6 1100.0,424.8 1102.5,424.5 1105.0,425.0 1107.5,425.3 1110.0,424.6 1112.5,425.0 1115.0,424.7 1117.5,425.2 1120.0,424.9 1122.5,424.6 1125.0,424.6 1127.5,424.4 1130.0,424.8 1132.5,424.7 1135.0,424.5 1137.5,424.7 1140.0,424.7 1142.5,425.2 1145.0,424.5 1147.5,425.4 1150.0,424.9 1152.5,425.0 1155.0,424.9 1157.5,425.2 1160.0,425.2 1162.5,425.0 1165.0,424.9 1167.5,425.2 1170.0,425.3 1172.5,424.8 1175.0,425.2 1177.5,425.4 1180.0,424.9 1182.5,424.7 1185.0,424.7 1187.5,425.2 1190.0,425.2 1192.5,425.4 1195.0,425.3 1197.5,424.7 1200.0,425.0 1202.5,424.7 1205.1,424.8 1207.6,424.7 1210.2,425.2 1212.7,425.4 1215.3,425.4 1217.8,424.8 1220.4,425.4 1222.9,424.8 1225.5,424.9 1228.0,425.2 1230.6,424.6 1233.1,424.6 1235.6,425.3 1238.2,424.8 1240.7,424.9 1243.3,425.1 1245.8,425.2 1248.4,424.5 1250.9,424.8 1253.5,424.9 1256.0,425.0 1258.6,424.7 1261.1,425.1 1263.7,425.5 1266.2,424.9 1268.7,425.0 1271.3,424.6 1273.8,424.8 1276.4,425.2 1278.9,424.6 1281.5,425.4 1284.0,425.4 1286.6,424.6 1289.1,425.4 1291.7,424.9 1294.2,425.3 1296.8,425.3 1299.3,425.0 1299.3,432.4" fill="#000" fill-opacity="0.17"/>
<rect x="101.4" y="429.6" width="1197.9" height="2.8" fill="#000" fill-opacity="0.22"/>
<rect x="130.0" y="348.3" width="12.6" height="84.1" fill="#a8a8a8" stroke="#333" stroke-width="1"/>
<rect x="130.0" y="348.3" width="12.6" height="84.1" fill="url(#hatch)"/>
<rect x="1268.9" y="348.3" width="6.1" height="84.1" fill="#a8a8a8" stroke="#333" stroke-width="1"/>
<rect x="1268.9" y="348.3" width="6.1" height="84.1" fill="url(#hatch)"/>
<line x1="277.6" y1="348.3" x2="277.6" y2="432.4" stroke="#555" stroke-width="1.2" stroke-dasharray="4,2.5"/>
<line x1="352.8" y1="348.3" x2="352.8" y2="432.4" stroke="#555" stroke-width="1.2" stroke-dasharray="4,2.5"/>
<line x1="459.3" y1="348.3" x2="459.3" y2="432.4" stroke="#555" stroke-width="1.2" stroke-dasharray="4,2.5"/>
<line x1="709.3" y1="348.3" x2="709.3" y2="432.4" stroke="#555" stroke-width="1.2" stroke-dasharray="4,2.5"/>
<line x1="1207.9" y1="348.3" x2="1207.9" y2="432.4" stroke="#555" stroke-width="1.2" stroke-dasharray="4,2.5"/>
<line x1="533.1" y1="348.3" x2="533.1" y2="432.4" stroke="#222" stroke-width="1.2" stroke-dasharray="2,1.5"/>
<polyline points="101.4,397.1 103.2,396.5 105.0,393.6 106.4,399.6 107.9,402.9 109.3,401.3 110.7,394.5 112.1,392.1 113.6,408.6 115.7,390.0 117.9,398.6 119.6,412.0 121.4,422.9 122.7,417.8 123.9,409.3 125.2,404.8 126.4,397.1 128.2,406.5 130.0,412.9 131.2,408.2 132.5,399.5 133.8,394.4 135.0,387.1 137.1,402.9 139.3,392.9 141.4,404.3 143.6,394.3 145.0,395.5 146.4,395.7 148.2,408.3 150.0,417.1 151.4,422.3 152.9,424.3 154.6,419.0 156.4,412.9 157.9,418.2 159.3,419.3 160.7,416.1 162.1,407.0 163.6,404.7 165.0,397.3 166.4,392.8 167.9,387.1 170.0,408.6 171.4,411.3 172.9,411.0 174.3,412.9 175.5,415.7 176.8,416.4 178.0,419.6 179.3,421.4 180.7,407.3 182.1,390.7 183.9,391.5 185.7,390.0 187.9,415.0 189.3,404.8 190.7,390.7 192.1,400.1 193.6,405.4 195.0,415.0 196.4,406.5 197.9,393.9 199.3,385.7 201.1,390.5 202.9,392.9 204.3,389.6 205.7,382.6 207.1,380.7 208.6,387.5 210.0,390.0 211.4,391.5 212.9,389.3 214.3,398.3 215.7,403.1 217.1,411.4 218.6,408.4 220.0,403.0 221.4,400.0 222.9,395.2 224.3,387.8 225.7,384.3 227.1,392.5 228.6,396.7 230.0,405.7 231.8,410.3 233.6,412.9 235.4,402.1 237.1,387.1 239.3,422.1 241.1,414.4 242.9,402.9 244.3,407.4 245.7,411.4 247.1,415.0 248.6,415.1 250.0,420.0 252.1,402.9 253.6,415.5 255.0,425.7 257.1,417.1 258.6,425.7 260.0,393.6 261.4,400.4 262.9,402.9 264.3,411.8 265.7,418.6 267.0,414.4 268.3,407.9 269.6,406.6 270.9,399.5 272.1,395.7 273.6,401.4 275.7,381.4 276.9,404.3 278.3,380.0 279.9,387.6 281.4,394.3 282.7,400.2 283.9,402.2 285.2,411.0 286.4,414.3 288.2,408.4 290.0,401.4 291.8,395.8 293.6,388.6 295.0,401.2 296.4,412.9 297.9,416.1 299.3,416.8 300.7,421.4 302.0,422.4 303.2,420.8 304.5,423.7 305.7,422.9 307.1,418.5 308.6,412.9 310.0,428.6 311.8,415.3 313.6,398.6 315.0,398.8 316.4,396.3 317.9,398.0 319.3,397.1 320.7,406.1 322.1,412.9 323.6,409.3 325.0,403.5 326.4,400.0 327.7,403.9 328.9,401.7 330.2,406.2 331.4,407.1 332.9,411.1 334.3,410.4 335.7,414.2 337.1,413.2 338.6,417.1 340.0,413.4 341.4,406.2 342.9,401.4 344.3,402.5 345.7,398.6 347.1,399.0 348.6,397.1 350.7,414.3 352.9,392.9 354.3,395.7 355.7,394.1 357.1,396.9 358.6,397.1 360.0,405.4 361.4,412.9 362.7,415.1 364.0,415.0 365.4,419.0 366.7,418.6 368.0,422.8 369.3,423.6 370.6,419.0 371.9,410.0 373.2,407.6 374.5,399.3 375.8,396.9 377.1,389.3 378.6,395.5 380.0,399.8 381.4,407.9 382.9,411.4 384.3,416.9 385.7,417.8 387.1,422.8 388.6,425.7 389.8,418.5 391.1,405.8 392.3,399.6 393.6,390.0 394.9,391.4 396.2,386.6 397.6,389.3 398.9,386.0 400.3,386.9 401.6,385.3 402.9,387.1 404.3,384.3 405.7,386.9 407.1,386.5 408.6,390.0 409.8,389.7 411.1,386.0 412.3,388.2 413.6,384.9 414.8,385.3 416.1,381.9 417.3,382.9 418.6,381.4 420.0,385.6 421.4,386.9 422.9,393.6 424.3,393.7 425.7,398.6 427.0,397.0 428.2,391.7 429.5,392.0 430.7,388.6 432.0,387.3 433.2,383.0 434.5,382.1 435.7,379.3 437.1,384.6 438.6,388.6 440.4,396.0 442.1,401.4 444.3,392.9 445.7,389.2 447.1,382.9 448.6,389.5 450.0,395.0 451.8,392.1 453.6,387.1 455.0,385.6 456.4,380.0 457.9,378.6 459.3,372.9 460.7,379.4 462.1,382.9 464.3,390.0 465.7,384.3 467.9,390.0 470.0,376.4 471.8,380.5 473.6,381.4 475.7,387.1 477.1,382.8 478.6,375.7 479.8,380.6 481.1,383.9 482.3,388.9 483.6,392.9 485.0,389.9 486.4,382.9 488.2,392.3 490.0,398.6 491.4,395.7 492.9,388.6 494.3,387.5 495.7,384.2 497.1,384.3 498.6,383.0 500.0,379.3 501.4,378.5 502.9,374.3 504.3,380.2 505.7,384.3 507.5,387.2 509.3,385.7 510.7,383.7 512.1,380.7 513.9,382.8 515.7,382.1 517.1,385.5 518.6,383.5 520.0,387.1 522.1,383.6 523.6,390.3 525.0,393.6 526.8,389.5 528.6,382.1 530.7,376.4 532.1,377.5 533.6,373.0 535.0,374.3 536.2,381.1 537.5,384.5 538.8,394.0 540.0,397.9 541.8,397.0 543.6,392.1 545.4,388.2 547.1,382.1 548.6,385.1 550.0,382.6 551.4,385.7 552.9,389.2 554.3,390.0 556.1,385.4 557.9,377.9 559.3,383.2 560.7,386.4 562.1,384.6 563.6,380.0 565.4,392.5 567.1,402.1 568.9,392.6 570.7,382.1 572.1,387.1 573.6,386.7 575.0,394.3 576.4,395.7 578.2,390.6 580.0,382.1 581.2,388.2 582.5,390.4 583.8,398.5 585.0,402.1 587.1,400.7 588.9,399.7 590.7,396.4 592.5,386.5 594.3,372.9 596.1,381.2 597.9,388.6 599.6,383.5 601.4,375.0 602.7,377.6 604.0,378.1 605.3,383.1 606.6,383.4 607.9,386.4 609.3,383.8 610.7,376.6 612.1,373.6 614.3,380.0 615.6,380.0 616.9,375.1 618.1,376.5 619.4,374.0 620.7,372.9 622.1,376.6 623.6,377.0 625.0,382.1 626.4,383.7 627.9,387.1 629.3,384.9 630.7,378.6 632.1,389.8 633.6,397.9 635.0,392.3 636.4,382.5 637.9,377.9 639.6,375.9 641.4,372.1 642.7,379.4 643.9,382.9 645.2,390.4 646.4,395.0 648.2,382.5 650.0,366.4 651.8,376.0 653.6,381.4 655.0,379.1 656.4,372.9 658.6,382.9 660.0,377.5 661.4,370.0 663.6,382.1 665.7,375.0 667.5,374.3 669.3,370.7 671.4,388.6 673.6,376.4 675.4,380.5 677.1,382.9 678.9,376.6 680.7,369.3 682.1,373.4 683.6,375.0 685.0,372.6 686.4,366.4 687.7,370.5 688.9,369.1 690.2,375.0 691.4,375.0 693.2,372.6 695.0,368.6 696.8,372.0 698.6,374.3 700.0,372.6 701.4,368.6 702.9,371.2 704.3,372.1 705.7,369.3 707.1,365.0 708.6,363.9 710.0,360.7 711.4,364.3 712.9,363.8 714.3,367.1 716.1,373.4 717.9,377.9 720.0,376.4 722.1,387.9 723.9,381.9 725.7,372.1 727.1,373.4 728.6,369.1 730.0,369.3 732.1,372.9 734.3,360.7 735.7,363.5 737.1,365.1 738.6,367.9 740.7,365.7 742.9,374.3 744.3,372.7 745.7,367.1 747.1,369.4 748.6,369.3 750.0,372.9 751.3,372.2 752.6,368.0 753.9,368.7 755.1,364.5 756.4,362.9 758.6,365.7 760.0,369.5 761.4,372.1 763.2,367.9 765.0,361.4 767.1,370.0 769.3,362.1 770.7,365.3 772.1,366.0 773.6,370.7 775.7,362.9 777.5,362.9 779.3,361.4 781.1,365.2 782.9,367.9 784.6,368.6 786.4,368.6 788.2,372.2 790.0,372.9 792.1,362.9 793.9,361.5 795.7,357.9 797.0,363.3 798.2,364.2 799.5,371.5 800.7,373.6 802.5,371.8 804.3,365.7 806.1,370.9 807.9,372.9 809.1,372.5 810.4,369.7 811.7,370.5 813.0,368.5 814.3,367.9 816.1,366.6 817.9,362.9 819.3,370.0 820.7,373.2 822.1,379.3 823.9,374.4 825.7,367.9 827.1,366.2 828.6,361.0 830.0,360.0 831.8,361.6 833.6,360.7 835.4,364.3 837.1,365.0 838.6,368.2 840.0,367.9 840.7,377.9 842.1,360.7 843.6,363.9 845.0,365.0 846.4,364.7 847.9,360.7 849.6,364.2 851.4,363.6 853.6,355.7 855.7,369.3 857.5,366.9 859.3,363.6 860.7,368.9 862.1,370.0 864.3,354.3 866.1,364.9 867.9,372.1 869.6,372.0 871.4,370.7 873.6,367.1 875.4,365.8 877.1,362.1 878.9,362.9 880.7,360.7 882.1,366.4 884.3,360.7 886.1,367.0 887.9,369.3 889.3,365.3 890.7,359.3 892.1,366.1 893.6,368.3 895.0,375.7 897.1,365.0 898.6,365.7 900.0,362.9 901.4,368.9 902.9,370.7 905.0,365.0 906.4,363.3 907.9,359.3 910.0,369.3 912.1,364.3 913.9,373.0 915.7,378.6 917.1,371.0 918.6,362.1 920.0,369.9 921.4,374.3 922.9,374.7 924.3,369.9 925.7,371.7 927.1,367.9 928.6,367.1 930.4,372.7 932.1,374.3 933.6,372.4 935.0,364.0 936.4,362.1 938.2,364.9 940.0,365.0 941.8,370.7 943.6,372.9 945.7,367.1 947.5,375.6 949.3,382.1 950.7,379.9 952.1,373.6 954.3,362.1 956.1,364.4 957.9,362.9 960.0,367.9 961.4,366.7 962.9,363.1 964.3,362.6 965.7,359.3 967.0,364.1 968.3,364.4 969.6,370.8 970.9,372.6 972.1,376.4 973.9,372.6 975.7,365.0 977.1,366.9 978.6,366.0 980.0,369.3 981.4,368.5 982.9,366.4 985.0,367.9 986.4,372.4 987.9,375.0 989.6,375.4 991.4,372.1 993.6,360.7 995.7,370.0 997.1,372.7 998.6,373.7 1000.0,376.4 1001.4,373.4 1002.9,367.9 1004.3,372.4 1005.7,373.6 1007.1,372.8 1008.6,366.7 1010.0,365.7 1011.4,370.0 1012.9,368.8 1014.3,372.1 1016.1,370.7 1017.9,365.0 1019.3,369.7 1020.7,372.9 1022.1,377.9 1023.9,375.2 1025.7,370.0 1027.1,373.4 1028.6,375.0 1030.4,369.5 1032.1,360.7 1034.3,367.1 1035.0,362.1 1036.4,369.4 1037.9,373.6 1039.3,373.4 1040.7,368.8 1042.1,369.3 1044.3,380.7 1045.7,380.6 1047.1,377.0 1048.6,376.4 1050.0,372.7 1051.4,365.0 1052.9,362.1 1054.3,369.9 1055.7,373.6 1057.1,371.8 1058.6,368.6 1060.7,374.3 1062.9,369.3 1064.3,371.2 1065.7,367.1 1067.1,369.3 1068.6,372.5 1070.0,371.7 1071.4,375.0 1072.9,372.5 1074.3,368.6 1075.7,369.4 1077.1,366.4 1078.6,367.1 1080.0,374.7 1081.4,379.3 1082.9,377.3 1084.3,372.4 1085.7,372.1 1087.1,375.6 1088.6,376.4 1090.4,375.0 1092.1,371.4 1093.6,376.5 1095.0,377.9 1096.4,388.2 1097.9,395.7 1100.0,389.3 1102.1,384.3 1103.6,384.4 1105.0,382.1 1107.1,392.9 1108.6,387.8 1110.0,379.1 1111.4,372.9 1112.9,372.8 1114.3,368.9 1115.7,368.6 1117.1,373.0 1118.6,371.2 1120.0,376.3 1121.4,377.9 1122.9,373.6 1124.3,366.4 1125.7,361.4 1127.1,367.2 1128.6,370.7 1129.8,374.3 1131.1,372.3 1132.3,377.3 1133.6,377.9 1134.8,375.0 1136.1,369.7 1137.3,368.1 1138.6,362.9 1140.0,366.5 1141.4,365.5 1142.9,369.4 1144.3,368.8 1145.7,370.7 1147.5,368.5 1149.3,365.0 1150.7,369.8 1152.1,371.5 1153.6,377.1 1155.0,379.5 1156.4,379.0 1157.9,381.4 1159.6,374.0 1161.4,363.6 1162.9,368.4 1164.3,372.1 1166.1,366.7 1167.9,357.9 1169.6,362.0 1171.4,365.0 1172.7,367.2 1173.9,366.0 1175.2,368.4 1176.4,368.6 1178.2,367.7 1180.0,364.3 1181.4,361.5 1182.9,356.4 1184.3,357.7 1185.7,355.8 1187.1,357.1 1189.3,372.9 1191.1,374.2 1192.9,372.9 1194.3,369.2 1195.7,364.3 1197.1,367.4 1198.6,367.5 1200.0,371.4 1201.2,370.8 1202.5,365.8 1203.8,366.9 1205.0,362.9 1206.4,359.3 1207.9,352.9 1209.3,358.4 1210.7,359.3 1212.1,363.6 1213.4,367.0 1214.7,365.2 1216.0,370.7 1217.3,369.5 1218.6,372.1 1220.4,366.6 1222.1,359.3 1223.6,364.6 1225.0,365.0 1226.4,371.1 1227.9,372.1 1229.3,375.3 1230.7,374.0 1232.1,375.7 1233.9,373.3 1235.7,369.3 1237.1,375.3 1238.6,377.9 1240.0,372.6 1241.4,365.7 1242.9,367.6 1244.3,368.6 1246.1,367.6 1247.9,362.9 1249.3,365.7 1250.7,366.4 1252.1,373.9 1253.6,377.9 1254.8,373.4 1256.1,366.8 1257.3,364.5 1258.6,357.9 1260.0,363.0 1261.4,366.7 1262.9,372.1 1265.0,363.6 1266.8,369.5 1268.6,372.1 1270.4,371.0 1272.1,365.7 1273.9,367.1 1275.7,364.3 1277.1,367.9 1278.6,369.2 1280.0,373.6 1281.4,371.0 1282.9,365.0 1284.6,366.3 1286.4,365.0 1287.9,367.7 1289.3,367.1 1291.1,364.6 1292.9,360.7 1294.3,364.0 1295.7,366.4 1297.5,367.6 1299.3,367.9" fill="none" stroke="#0000ff" stroke-width="1.25" stroke-linejoin="round"/>
<rect x="101.4" y="348.3" width="1197.9" height="84.1" fill="none" stroke="#333" stroke-width="1"/>
<line x1="110.30" y1="432.4" x2="110.30" y2="435.9" stroke="#333" stroke-width="0.9"/>
<text x="110.30" y="447.00" font-family="'Liberation Sans', sans-serif" font-size="10.2" fill="#000" text-anchor="middle" textLength="23.20" lengthAdjust="spacingAndGlyphs" >3500</text>
<line x1="169.48" y1="432.4" x2="169.48" y2="435.9" stroke="#333" stroke-width="0.9"/>
<text x="169.48" y="447.00" font-family="'Liberation Sans', sans-serif" font-size="10.2" fill="#000" text-anchor="middle" textLength="23.20" lengthAdjust="spacingAndGlyphs" >3600</text>
<line x1="228.66" y1="432.4" x2="228.66" y2="435.9" stroke="#333" stroke-width="0.9"/>
<text x="228.66" y="447.00" font-family="'Liberation Sans', sans-serif" font-size="10.2" fill="#000" text-anchor="middle" textLength="23.20" lengthAdjust="spacingAndGlyphs" >3700</text>
<line x1="287.84" y1="432.4" x2="287.84" y2="435.9" stroke="#333" stroke-width="0.9"/>
<text x="287.84" y="447.00" font-family="'Liberation Sans', sans-serif" font-size="10.2" fill="#000" text-anchor="middle" textLength="23.20" lengthAdjust="spacingAndGlyphs" >3800</text>
<line x1="347.02" y1="432.4" x2="347.02" y2="435.9" stroke="#333" stroke-width="0.9"/>
<text x="347.02" y="447.00" font-family="'Liberation Sans', sans-serif" font-size="10.2" fill="#000" text-anchor="middle" textLength="23.20" lengthAdjust="spacingAndGlyphs" >3900</text>
<line x1="406.20" y1="432.4" x2="406.20" y2="435.9" stroke="#333" stroke-width="0.9"/>
<text x="406.20" y="447.00" font-family="'Liberation Sans', sans-serif" font-size="10.2" fill="#000" text-anchor="middle" textLength="23.20" lengthAdjust="spacingAndGlyphs" >4000</text>
<line x1="465.38" y1="432.4" x2="465.38" y2="435.9" stroke="#333" stroke-width="0.9"/>
<text x="465.38" y="447.00" font-family="'Liberation Sans', sans-serif" font-size="10.2" fill="#000" text-anchor="middle" textLength="23.20" lengthAdjust="spacingAndGlyphs" >4100</text>
<line x1="524.56" y1="432.4" x2="524.56" y2="435.9" stroke="#333" stroke-width="0.9"/>
<text x="524.56" y="447.00" font-family="'Liberation Sans', sans-serif" font-size="10.2" fill="#000" text-anchor="middle" textLength="23.20" lengthAdjust="spacingAndGlyphs" >4200</text>
<line x1="583.74" y1="432.4" x2="583.74" y2="435.9" stroke="#333" stroke-width="0.9"/>
<text x="583.74" y="447.00" font-family="'Liberation Sans', sans-serif" font-size="10.2" fill="#000" text-anchor="middle" textLength="23.20" lengthAdjust="spacingAndGlyphs" >4300</text>
<line x1="642.92" y1="432.4" x2="642.92" y2="435.9" stroke="#333" stroke-width="0.9"/>
<text x="642.92" y="447.00" font-family="'Liberation Sans', sans-serif" font-size="10.2" fill="#000" text-anchor="middle" textLength="23.20" lengthAdjust="spacingAndGlyphs" >4400</text>
<line x1="702.10" y1="432.4" x2="702.10" y2="435.9" stroke="#333" stroke-width="0.9"/>
<text x="702.10" y="447.00" font-family="'Liberation Sans', sans-serif" font-size="10.2" fill="#000" text-anchor="middle" textLength="23.20" lengthAdjust="spacingAndGlyphs" >4500</text>
<line x1="761.28" y1="432.4" x2="761.28" y2="435.9" stroke="#333" stroke-width="0.9"/>
<text x="761.28" y="447.00" font-family="'Liberation Sans', sans-serif" font-size="10.2" fill="#000" text-anchor="middle" textLength="23.20" lengthAdjust="spacingAndGlyphs" >4600</text>
<line x1="820.46" y1="432.4" x2="820.46" y2="435.9" stroke="#333" stroke-width="0.9"/>
<text x="820.46" y="447.00" font-family="'Liberation Sans', sans-serif" font-size="10.2" fill="#000" text-anchor="middle" textLength="23.20" lengthAdjust="spacingAndGlyphs" >4700</text>
<line x1="879.64" y1="432.4" x2="879.64" y2="435.9" stroke="#333" stroke-width="0.9"/>
<text x="879.64" y="447.00" font-family="'Liberation Sans', sans-serif" font-size="10.2" fill="#000" text-anchor="middle" textLength="23.20" lengthAdjust="spacingAndGlyphs" >4800</text>
<line x1="938.82" y1="432.4" x2="938.82" y2="435.9" stroke="#333" stroke-width="0.9"/>
<text x="938.82" y="447.00" font-family="'Liberation Sans', sans-serif" font-size="10.2" fill="#000" text-anchor="middle" textLength="23.20" lengthAdjust="spacingAndGlyphs" >4900</text>
<line x1="998.00" y1="432.4" x2="998.00" y2="435.9" stroke="#333" stroke-width="0.9"/>
<text x="998.00" y="447.00" font-family="'Liberation Sans', sans-serif" font-size="10.2" fill="#000" text-anchor="middle" textLength="23.20" lengthAdjust="spacingAndGlyphs" >5000</text>
<line x1="1057.18" y1="432.4" x2="1057.18" y2="435.9" stroke="#333" stroke-width="0.9"/>
<text x="1057.18" y="447.00" font-family="'Liberation Sans', sans-serif" font-size="10.2" fill="#000" text-anchor="middle" textLength="23.20" lengthAdjust="spacingAndGlyphs" >5100</text>
<line x1="1116.36" y1="432.4" x2="1116.36" y2="435.9" stroke="#333" stroke-width="0.9"/>
<text x="1116.36" y="447.00" font-family="'Liberation Sans', sans-serif" font-size="10.2" fill="#000" text-anchor="middle" textLength="23.20" lengthAdjust="spacingAndGlyphs" >5200</text>
<line x1="1175.54" y1="432.4" x2="1175.54" y2="435.9" stroke="#333" stroke-width="0.9"/>
<text x="1175.54" y="447.00" font-family="'Liberation Sans', sans-serif" font-size="10.2" fill="#000" text-anchor="middle" textLength="23.20" lengthAdjust="spacingAndGlyphs" >5300</text>
<line x1="1234.72" y1="432.4" x2="1234.72" y2="435.9" stroke="#333" stroke-width="0.9"/>
<text x="1234.72" y="447.00" font-family="'Liberation Sans', sans-serif" font-size="10.2" fill="#000" text-anchor="middle" textLength="23.20" lengthAdjust="spacingAndGlyphs" >5400</text>
<line x1="1293.90" y1="432.4" x2="1293.90" y2="435.9" stroke="#333" stroke-width="0.9"/>
<text x="1293.90" y="447.00" font-family="'Liberation Sans', sans-serif" font-size="10.2" fill="#000" text-anchor="middle" textLength="23.20" lengthAdjust="spacingAndGlyphs" >5500</text>
<line x1="97.9" y1="430.70" x2="101.4" y2="430.70" stroke="#333" stroke-width="0.9"/>
<text x="94.50" y="434.20" font-family="'Liberation Sans', sans-serif" font-size="10.2" fill="#000" text-anchor="end" textLength="5.90" lengthAdjust="spacingAndGlyphs" >0</text>
<line x1="97.9" y1="397.55" x2="101.4" y2="397.55" stroke="#333" stroke-width="0.9"/>
<text x="94.50" y="401.05" font-family="'Liberation Sans', sans-serif" font-size="10.2" fill="#000" text-anchor="end" textLength="5.90" lengthAdjust="spacingAndGlyphs" >5</text>
<line x1="97.9" y1="364.40" x2="101.4" y2="364.40" stroke="#333" stroke-width="0.9"/>
<text x="94.50" y="367.90" font-family="'Liberation Sans', sans-serif" font-size="10.2" fill="#000" text-anchor="end" textLength="11.80" lengthAdjust="spacingAndGlyphs" >10</text>
<text x="110.50" y="346.00" font-family="'Liberation Sans', sans-serif" font-size="9.2" fill="#000" text-anchor="start" font-style="italic">e</text>
<text x="116.50" y="341.00" font-family="'Liberation Sans', sans-serif" font-size="7.2" fill="#000" text-anchor="start" textLength="13.00" lengthAdjust="spacingAndGlyphs" >−17</text>
<text x="130.70" y="346.00" font-family="'Liberation Sans', sans-serif" font-size="9.6" fill="#000" text-anchor="start" textLength="10.50" lengthAdjust="spacingAndGlyphs" >x2</text>
<text x="142.00" y="346.00" font-family="'Liberation Sans', sans-serif" font-size="9.6" fill="#000" text-anchor="start" font-style="italic">Å</text>
<text transform="translate(107.1,335.5) rotate(90)" font-family="'Liberation Sans', sans-serif" font-size="9.8" fill="#ff00ff" text-anchor="end">CII</text>
<text transform="translate(107.1,343.7) rotate(90)" font-family="'Liberation Sans', sans-serif" font-size="8.5" fill="#ff00ff" text-anchor="start">{</text>
<text transform="translate(159.3,336.0) rotate(90)" font-family="'Liberation Sans', sans-serif" font-size="9.8" fill="#ff0000" text-anchor="end">OVI</text>
<text transform="translate(159.3,343.7) rotate(90)" font-family="'Liberation Sans', sans-serif" font-size="8.5" fill="#ff0000" text-anchor="start">{</text>
<text transform="translate(160.7,297.5) rotate(90)" font-family="'Liberation Sans', sans-serif" font-size="9.8" fill="#ffa500" text-anchor="end">SiIV</text>
<text transform="translate(160.7,300.2) rotate(90)" font-family="'Liberation Sans', sans-serif" font-size="8.5" fill="#ffa500" text-anchor="start">)</text>
<text transform="translate(179.5,338.8) rotate(90)" font-family="'Liberation Sans', sans-serif" font-size="9.8" fill="#9932cc" text-anchor="end">HeII</text>
<text transform="translate(179.5,343.7) rotate(90)" font-family="'Liberation Sans', sans-serif" font-size="8.5" fill="#9932cc" text-anchor="start">{</text>
<text transform="translate(274.0,336.0) rotate(90)" font-family="'Liberation Sans', sans-serif" font-size="9.8" fill="#008000" text-anchor="end">NeV</text>
<text transform="translate(274.0,343.7) rotate(90)" font-family="'Liberation Sans', sans-serif" font-size="8.5" fill="#008000" text-anchor="start">{</text>
<text transform="translate(286.4,339.0) rotate(90)" font-family="'Liberation Sans', sans-serif" font-size="9.8" fill="#8a2be2" text-anchor="end">SiIV</text>
<text transform="translate(286.4,343.7) rotate(90)" font-family="'Liberation Sans', sans-serif" font-size="8.5" fill="#8a2be2" text-anchor="start">{</text>
<text transform="translate(379.3,335.6) rotate(90)" font-family="'Liberation Sans', sans-serif" font-size="9.8" fill="#87ceeb" text-anchor="end">OII</text>
<text transform="translate(379.3,343.7) rotate(90)" font-family="'Liberation Sans', sans-serif" font-size="8.5" fill="#87ceeb" text-anchor="start">{</text>
<text transform="translate(391.4,335.6) rotate(90)" font-family="'Liberation Sans', sans-serif" font-size="9.8" fill="#ffa500" text-anchor="end">CIV</text>
<text transform="translate(391.4,343.7) rotate(90)" font-family="'Liberation Sans', sans-serif" font-size="8.5" fill="#ffa500" text-anchor="start">{</text>
<text transform="translate(399.9,335.6) rotate(90)" font-family="'Liberation Sans', sans-serif" font-size="9.8" fill="#87ceeb" text-anchor="end">OII</text>
<text transform="translate(399.9,343.7) rotate(90)" font-family="'Liberation Sans', sans-serif" font-size="8.5" fill="#87ceeb" text-anchor="start">{</text>
<text transform="translate(581.7,333.5) rotate(90)" font-family="'Liberation Sans', sans-serif" font-size="9.8" fill="#ff0000" text-anchor="end">NV</text>
<text transform="translate(581.7,343.7) rotate(90)" font-family="'Liberation Sans', sans-serif" font-size="8.5" fill="#ff0000" text-anchor="start">{</text>
<text transform="translate(627.9,339.4) rotate(90)" font-family="'Liberation Sans', sans-serif" font-size="9.8" fill="#ff0000" text-anchor="end">SiII</text>
<text transform="translate(627.9,343.7) rotate(90)" font-family="'Liberation Sans', sans-serif" font-size="8.5" fill="#ff0000" text-anchor="start">{</text>
<text transform="translate(676.7,339.4) rotate(90)" font-family="'Liberation Sans', sans-serif" font-size="9.8" fill="#8a2be2" text-anchor="end">HeII</text>
<text transform="translate(676.7,343.7) rotate(90)" font-family="'Liberation Sans', sans-serif" font-size="8.5" fill="#8a2be2" text-anchor="start">{</text>
<text transform="translate(763.7,341.5) rotate(90)" font-family="'Liberation Sans', sans-serif" font-size="9.8" fill="#87ceeb" text-anchor="end">Hγ</text>
<text transform="translate(763.7,343.7) rotate(90)" font-family="'Liberation Sans', sans-serif" font-size="8.5" fill="#87ceeb" text-anchor="start">{</text>
<text transform="translate(787.7,341.5) rotate(90)" font-family="'Liberation Sans', sans-serif" font-size="9.8" fill="#87ceeb" text-anchor="end">Hγ</text>
<text transform="translate(787.7,343.7) rotate(90)" font-family="'Liberation Sans', sans-serif" font-size="8.5" fill="#87ceeb" text-anchor="start">{</text>
<text transform="translate(904.7,339.6) rotate(90)" font-family="'Liberation Sans', sans-serif" font-size="9.8" fill="#ff0000" text-anchor="end">SiIV</text>
<text transform="translate(904.7,343.7) rotate(90)" font-family="'Liberation Sans', sans-serif" font-size="8.5" fill="#ff0000" text-anchor="start">{</text>
<text transform="translate(938.2,297.9) rotate(90)" font-family="'Liberation Sans', sans-serif" font-size="9.8" fill="#ffa500" text-anchor="end">CIII</text>
<text transform="translate(938.2,300.2) rotate(90)" font-family="'Liberation Sans', sans-serif" font-size="8.5" fill="#ffa500" text-anchor="start">(</text>
<text transform="translate(940.0,341.5) rotate(90)" font-family="'Liberation Sans', sans-serif" font-size="9.8" fill="#008000" text-anchor="end">Hγ</text>
<text transform="translate(940.0,343.7) rotate(90)" font-family="'Liberation Sans', sans-serif" font-size="8.5" fill="#008000" text-anchor="start">{</text>
<text transform="translate(1073.7,336.0) rotate(90)" font-family="'Liberation Sans', sans-serif" font-size="9.8" fill="#800080" text-anchor="end">CII</text>
<text transform="translate(1073.7,343.7) rotate(90)" font-family="'Liberation Sans', sans-serif" font-size="8.5" fill="#800080" text-anchor="start">{</text>
<text transform="translate(1091.3,340.5) rotate(90)" font-family="'Liberation Sans', sans-serif" font-size="9.8" fill="#87ceeb" text-anchor="end">Hβ</text>
<text transform="translate(1091.3,343.7) rotate(90)" font-family="'Liberation Sans', sans-serif" font-size="8.5" fill="#87ceeb" text-anchor="start">{</text>
<text transform="translate(1108.9,338.5) rotate(90)" font-family="'Liberation Sans', sans-serif" font-size="9.8" fill="#8a2be2" text-anchor="end">CIII</text>
<text transform="translate(1108.9,343.7) rotate(90)" font-family="'Liberation Sans', sans-serif" font-size="8.5" fill="#8a2be2" text-anchor="start">{</text>
<text transform="translate(1119.1,340.5) rotate(90)" font-family="'Liberation Sans', sans-serif" font-size="9.8" fill="#87ceeb" text-anchor="end">Hβ</text>
<text transform="translate(1119.1,343.7) rotate(90)" font-family="'Liberation Sans', sans-serif" font-size="8.5" fill="#87ceeb" text-anchor="start">{</text>
<text transform="translate(1153.5,338.5) rotate(90)" font-family="'Liberation Sans', sans-serif" font-size="9.8" fill="#87ceeb" text-anchor="end">OIII</text>
<text transform="translate(1153.5,343.7) rotate(90)" font-family="'Liberation Sans', sans-serif" font-size="8.5" fill="#87ceeb" text-anchor="start">{</text>
<text transform="translate(1181.3,338.5) rotate(90)" font-family="'Liberation Sans', sans-serif" font-size="9.8" fill="#87ceeb" text-anchor="end">OIII</text>
<text transform="translate(1181.3,343.7) rotate(90)" font-family="'Liberation Sans', sans-serif" font-size="8.5" fill="#87ceeb" text-anchor="start">{</text>
<text transform="translate(1183.2,297.0) rotate(90)" font-family="'Liberation Sans', sans-serif" font-size="9.8" fill="#87ceeb" text-anchor="end">OIII</text>
<text transform="translate(1183.2,300.2) rotate(90)" font-family="'Liberation Sans', sans-serif" font-size="8.5" fill="#87ceeb" text-anchor="start">(</text>
<text transform="translate(1211.0,297.0) rotate(90)" font-family="'Liberation Sans', sans-serif" font-size="9.8" fill="#87ceeb" text-anchor="end">OIII</text>
<text transform="translate(1211.0,300.2) rotate(90)" font-family="'Liberation Sans', sans-serif" font-size="8.5" fill="#87ceeb" text-anchor="start">(</text>
<text transform="translate(1214.7,336.0) rotate(90)" font-family="'Liberation Sans', sans-serif" font-size="9.8" fill="#ff0000" text-anchor="end">CIV</text>
<text transform="translate(1214.7,343.7) rotate(90)" font-family="'Liberation Sans', sans-serif" font-size="8.5" fill="#ff0000" text-anchor="start">{</text>
<text transform="translate(1289.0,340.5) rotate(90)" font-family="'Liberation Sans', sans-serif" font-size="9.8" fill="#008000" text-anchor="end">Hβ</text>
<text transform="translate(1289.0,343.7) rotate(90)" font-family="'Liberation Sans', sans-serif" font-size="8.5" fill="#008000" text-anchor="start">{</text>
<rect x="480.2" y="450.2" width="16.8" height="6" fill="#ff0000"/>
<text x="503.70" y="456.50" font-family="'Liberation Sans', sans-serif" font-size="8.2" fill="#222" text-anchor="start" >Ly</text>
<text x="513.00" y="456.50" font-family="'Liberation Sans', sans-serif" font-size="8.2" fill="#222" text-anchor="start" font-style="italic">α</text>
<rect x="534.0" y="450.2" width="16.8" height="6" fill="#008000"/>
<text x="556.70" y="456.50" font-family="'Liberation Sans', sans-serif" font-size="8.2" fill="#222" text-anchor="start" >OII</text>
<rect x="586.3" y="450.2" width="16.8" height="6" fill="#8a2be2"/>
<text x="609.60" y="456.50" font-family="'Liberation Sans', sans-serif" font-size="8.2" fill="#222" text-anchor="start" >CIV</text>
<rect x="641.7" y="450.2" width="16.8" height="6" fill="#800080"/>
<text x="664.70" y="456.50" font-family="'Liberation Sans', sans-serif" font-size="8.2" fill="#222" text-anchor="start" >CIII</text>
<rect x="693.5" y="450.2" width="16.8" height="6" fill="#ff00ff"/>
<text x="716.50" y="456.50" font-family="'Liberation Sans', sans-serif" font-size="8.2" fill="#222" text-anchor="start" >MgII</text>
<rect x="748.7" y="450.2" width="16.8" height="6" fill="#ffa500"/>
<text x="771.70" y="456.50" font-family="'Liberation Sans', sans-serif" font-size="8.2" fill="#222" text-anchor="start" >HeII</text>
<rect x="803.5" y="450.2" width="16.8" height="6" fill="#87ceeb"/>
<text x="826.50" y="456.50" font-family="'Liberation Sans', sans-serif" font-size="8.2" fill="#222" text-anchor="start" >(K)CaII</text>
<rect x="869.3" y="450.2" width="16.8" height="6" fill="#87ceeb"/>
<text x="892.30" y="456.50" font-family="'Liberation Sans', sans-serif" font-size="8.2" fill="#222" text-anchor="start" >(H)CaII</text>
<text x="143.70" y="525.30" font-family="'Liberation Sans', sans-serif" font-size="10.2" fill="#000" text-anchor="middle" textLength="92.00" lengthAdjust="spacingAndGlyphs" >Fiber Positions</text>
<text x="329.20" y="525.30" font-family="'Liberation Sans', sans-serif" font-size="10.2" fill="#000" text-anchor="middle" textLength="81.00" lengthAdjust="spacingAndGlyphs" >Lineflux Map</text>
<text x="514.70" y="525.30" font-family="'Liberation Sans', sans-serif" font-size="10.2" fill="#000" text-anchor="middle" textLength="74.00" lengthAdjust="spacingAndGlyphs" >HSC(26.2) r</text>
<text x="70.20" y="499.20" font-family="'Liberation Mono', monospace" font-size="13.8" fill="#000" stroke="#000" stroke-width="0.15" textLength="483.60" lengthAdjust="spacingAndGlyphs" >HSC-DEX : Possible Matches = 1 (within +/- 3")  P(LAE)/P(OII):</text>
<text x="561.50" y="498.30" font-family="'Liberation Sans', sans-serif" font-size="12.3" fill="#000" text-anchor="start" textLength="35.00" lengthAdjust="spacingAndGlyphs" >0.173</text>
<text x="603.50" y="493.50" font-family="'Liberation Sans', sans-serif" font-size="8.6" fill="#000" text-anchor="start" textLength="24.50" lengthAdjust="spacingAndGlyphs" >0.281</text>
<text x="603.50" y="501.50" font-family="'Liberation Sans', sans-serif" font-size="8.6" fill="#000" text-anchor="start" textLength="24.50" lengthAdjust="spacingAndGlyphs" >0.118</text>
<text x="637.70" y="499.20" font-family="'Liberation Mono', monospace" font-size="13.8" fill="#000" stroke="#000" stroke-width="0.15" textLength="23.40" lengthAdjust="spacingAndGlyphs" >(r)</text>
<clipPath id="c1"><rect x="69.9" y="533" width="148.1" height="147.1"/></clipPath>
<g clip-path="url(#c1)">
<rect x="69.9" y="533" width="148.1" height="147.1" fill="#d6d6d6" filter="url(#grimg)"/>
<rect x="93" y="539" width="67" height="64" rx="20" fill="#000" fill-opacity="0.45" filter="url(#blob)"/>
<rect x="98.5" y="544.5" width="56.5" height="55.5" rx="15" fill="#000" filter="url(#blob3)"/>
<circle cx="127.2" cy="558" r="12.2" fill="none" stroke="#6a6a6a" stroke-width="1.1"/>
<circle cx="151.6" cy="555.6" r="12.2" fill="none" stroke="#6a6a6a" stroke-width="1.1"/>
<circle cx="116.2" cy="577.6" r="12.2" fill="none" stroke="#6a6a6a" stroke-width="1.1"/>
<circle cx="139.8" cy="577.6" r="12.2" fill="none" stroke="#6a6a6a" stroke-width="1.1"/>
<circle cx="165" cy="576.9" r="12.2" fill="none" stroke="#6a6a6a" stroke-width="1.1"/>
<circle cx="187.8" cy="576.1" r="12.2" fill="none" stroke="#6a6a6a" stroke-width="1.1"/>
<circle cx="102.8" cy="598.1" r="12.2" fill="none" stroke="#6a6a6a" stroke-width="1.1"/>
<circle cx="176" cy="597.3" r="12.2" fill="none" stroke="#6a6a6a" stroke-width="1.1"/>
<circle cx="200.4" cy="598.1" r="12.2" fill="none" stroke="#6a6a6a" stroke-width="1.1"/>
<circle cx="91.8" cy="620.9" r="12.2" fill="none" stroke="#6a6a6a" stroke-width="1.1"/>
<circle cx="116.2" cy="619.4" r="12.2" fill="none" stroke="#6a6a6a" stroke-width="1.1"/>
<circle cx="189.4" cy="618.6" r="12.2" fill="none" stroke="#6a6a6a" stroke-width="1.1"/>
<circle cx="104.4" cy="641.4" r="12.2" fill="none" stroke="#6a6a6a" stroke-width="1.1"/>
<circle cx="128.8" cy="641.4" r="12.2" fill="none" stroke="#6a6a6a" stroke-width="1.1"/>
<circle cx="153.2" cy="640.6" r="12.2" fill="none" stroke="#6a6a6a" stroke-width="1.1"/>
<circle cx="176.8" cy="639.8" r="12.2" fill="none" stroke="#6a6a6a" stroke-width="1.1"/>
<circle cx="140.6" cy="661.1" r="12.2" fill="none" stroke="#6a6a6a" stroke-width="1.1"/>
<circle cx="127.2" cy="599.7" r="12.2" fill="none" stroke="#ffa500" stroke-width="1.6"/>
<circle cx="152.4" cy="598.1" r="12.2" fill="none" stroke="#00ff00" stroke-width="1.6"/>
<circle cx="139.8" cy="619.4" r="12.2" fill="none" stroke="#0000ff" stroke-width="1.6"/>
<circle cx="164.2" cy="620.1" r="12.2" fill="none" stroke="#ff0000" stroke-width="1.6"/>
<rect x="94.5" y="557.5" width="98.4" height="98.4" fill="none" stroke="#ff0000" stroke-width="1.2"/>
<text x="144.20" y="546.00" font-family="'Liberation Sans', sans-serif" font-size="10.5" fill="#ff0000" text-anchor="middle" >N</text>
<text x="80.00" y="610.50" font-family="'Liberation Sans', sans-serif" font-size="10.5" fill="#ff0000" text-anchor="middle" >E</text>
<path d="M140.9 606.8H148.3M144.6 603.1V610.5" stroke="#ff0000" stroke-width="1.3"/>
</g>
<rect x="69.9" y="533.0" width="148.1" height="147.1" fill="none" stroke="#222" stroke-width="1.1"/>
<line x1="78.10" y1="680.1" x2="78.10" y2="683.6" stroke="#222" stroke-width="0.9"/>
<line x1="66.4" y1="672.30" x2="69.9" y2="672.30" stroke="#222" stroke-width="0.9"/>
<text x="75.60" y="696.00" font-family="'Liberation Sans', sans-serif" font-size="10" fill="#000" text-anchor="middle" textLength="12.50" lengthAdjust="spacingAndGlyphs" >−4</text>
<text x="63.40" y="675.90" font-family="'Liberation Sans', sans-serif" font-size="10" fill="#000" text-anchor="end" textLength="12.50" lengthAdjust="spacingAndGlyphs" >−4</text>
<line x1="110.90" y1="680.1" x2="110.90" y2="683.6" stroke="#222" stroke-width="0.9"/>
<line x1="66.4" y1="639.50" x2="69.9" y2="639.50" stroke="#222" stroke-width="0.9"/>
<text x="108.40" y="696.00" font-family="'Liberation Sans', sans-serif" font-size="10" fill="#000" text-anchor="middle" textLength="12.50" lengthAdjust="spacingAndGlyphs" >−2</text>
<text x="63.40" y="643.10" font-family="'Liberation Sans', sans-serif" font-size="10" fill="#000" text-anchor="end" textLength="12.50" lengthAdjust="spacingAndGlyphs" >−2</text>
<line x1="143.70" y1="680.1" x2="143.70" y2="683.6" stroke="#222" stroke-width="0.9"/>
<line x1="66.4" y1="606.70" x2="69.9" y2="606.70" stroke="#222" stroke-width="0.9"/>
<text x="143.70" y="696.00" font-family="'Liberation Sans', sans-serif" font-size="10" fill="#000" text-anchor="middle" textLength="6.20" lengthAdjust="spacingAndGlyphs" >0</text>
<text x="63.40" y="610.30" font-family="'Liberation Sans', sans-serif" font-size="10" fill="#000" text-anchor="end" textLength="6.20" lengthAdjust="spacingAndGlyphs" >0</text>
<line x1="176.50" y1="680.1" x2="176.50" y2="683.6" stroke="#222" stroke-width="0.9"/>
<line x1="66.4" y1="573.90" x2="69.9" y2="573.90" stroke="#222" stroke-width="0.9"/>
<text x="176.50" y="696.00" font-family="'Liberation Sans', sans-serif" font-size="10" fill="#000" text-anchor="middle" textLength="6.20" lengthAdjust="spacingAndGlyphs" >2</text>
<text x="63.40" y="577.50" font-family="'Liberation Sans', sans-serif" font-size="10" fill="#000" text-anchor="end" textLength="6.20" lengthAdjust="spacingAndGlyphs" >2</text>
<line x1="209.30" y1="680.1" x2="209.30" y2="683.6" stroke="#222" stroke-width="0.9"/>
<line x1="66.4" y1="541.10" x2="69.9" y2="541.10" stroke="#222" stroke-width="0.9"/>
<text x="209.30" y="696.00" font-family="'Liberation Sans', sans-serif" font-size="10" fill="#000" text-anchor="middle" textLength="6.20" lengthAdjust="spacingAndGlyphs" >4</text>
<text x="63.40" y="544.70" font-family="'Liberation Sans', sans-serif" font-size="10" fill="#000" text-anchor="end" textLength="6.20" lengthAdjust="spacingAndGlyphs" >4</text>
<text x="143.70" y="706.60" font-family="'Liberation Sans', sans-serif" font-size="10" fill="#000" text-anchor="middle" textLength="40.00" lengthAdjust="spacingAndGlyphs" >arcsecs</text>
<clipPath id="c2"><rect x="255.3" y="533.0" width="147.7" height="147.1"/></clipPath>
<g clip-path="url(#c2)">
<g filter="url(#blob4)">
<rect x="250.9" y="528.6" width="4.7" height="4.7" fill="#440154"/>
<rect x="255.0" y="528.6" width="4.7" height="4.7" fill="#440154"/>
<rect x="259.1" y="528.6" width="4.7" height="4.7" fill="#440154"/>
<rect x="263.2" y="528.6" width="4.7" height="4.7" fill="#440154"/>
<rect x="267.3" y="528.6" width="4.7" height="4.7" fill="#440154"/>
<rect x="271.4" y="528.6" width="4.7" height="4.7" fill="#440154"/>
<rect x="275.5" y="528.6" width="4.7" height="4.7" fill="#440154"/>
<rect x="279.6" y="528.6" width="4.7" height="4.7" fill="#440154"/>
<rect x="283.7" y="528.6" width="4.7" height="4.7" fill="#440154"/>
<rect x="287.8" y="528.6" width="4.7" height="4.7" fill="#440154"/>
<rect x="291.9" y="528.6" width="4.7" height="4.7" fill="#2a788e"/>
<rect x="296.0" y="528.6" width="4.7" height="4.7" fill="#2a788e"/>
<rect x="300.1" y="528.6" width="4.7" height="4.7" fill="#2a788e"/>
<rect x="304.2" y="528.6" width="4.7" height="4.7" fill="#2a788e"/>
<rect x="308.3" y="528.6" width="4.7" height="4.7" fill="#440154"/>
<rect x="312.4" y="528.6" width="4.7" height="4.7" fill="#440154"/>
<rect x="316.5" y="528.6" width="4.7" height="4.7" fill="#440154"/>
<rect x="320.6" y="528.6" width="4.7" height="4.7" fill="#440154"/>
<rect x="324.7" y="528.6" width="4.7" height="4.7" fill="#440154"/>
<rect x="328.8" y="528.6" width="4.7" height="4.7" fill="#414185"/>
<rect x="333.0" y="528.6" width="4.7" height="4.7" fill="#414185"/>
<rect x="337.1" y="528.6" width="4.7" height="4.7" fill="#414185"/>
<rect x="341.2" y="528.6" width="4.7" height="4.7" fill="#414185"/>
<rect x="345.3" y="528.6" width="4.7" height="4.7" fill="#414185"/>
<rect x="349.4" y="528.6" width="4.7" height="4.7" fill="#414185"/>
<rect x="353.5" y="528.6" width="4.7" height="4.7" fill="#414185"/>
<rect x="357.6" y="528.6" width="4.7" height="4.7" fill="#414185"/>
<rect x="361.7" y="528.6" width="4.7" height="4.7" fill="#414185"/>
<rect x="365.8" y="528.6" width="4.7" height="4.7" fill="#414185"/>
<rect x="369.9" y="528.6" width="4.7" height="4.7" fill="#414185"/>
<rect x="374.0" y="528.6" width="4.7" height="4.7" fill="#414185"/>
<rect x="378.1" y="528.6" width="4.7" height="4.7" fill="#414185"/>
<rect x="382.2" y="528.6" width="4.7" height="4.7" fill="#414185"/>
<rect x="386.3" y="528.6" width="4.7" height="4.7" fill="#414185"/>
<rect x="390.4" y="528.6" width="4.7" height="4.7" fill="#414185"/>
<rect x="394.5" y="528.6" width="4.7" height="4.7" fill="#414185"/>
<rect x="398.6" y="528.6" width="4.7" height="4.7" fill="#414185"/>
<rect x="402.7" y="528.6" width="4.7" height="4.7" fill="#414185"/>
<rect x="250.9" y="532.7" width="4.7" height="4.7" fill="#440154"/>
<rect x="255.0" y="532.7" width="4.7" height="4.7" fill="#440154"/>
<rect x="259.1" y="532.7" width="4.7" height="4.7" fill="#440154"/>
<rect x="263.2" y="532.7" width="4.7" height="4.7" fill="#440154"/>
<rect x="267.3" y="532.7" width="4.7" height="4.7" fill="#440154"/>
<rect x="271.4" y="532.7" width="4.7" height="4.7" fill="#440154"/>
<rect x="275.5" y="532.7" width="4.7" height="4.7" fill="#440154"/>
<rect x="279.6" y="532.7" width="4.7" height="4.7" fill="#440154"/>
<rect x="283.7" y="532.7" width="4.7" height="4.7" fill="#440154"/>
<rect x="287.8" y="532.7" width="4.7" height="4.7" fill="#440154"/>
<rect x="291.9" y="532.7" width="4.7" height="4.7" fill="#2a788e"/>
<rect x="296.0" y="532.7" width="4.7" height="4.7" fill="#2a788e"/>
<rect x="300.1" y="532.7" width="4.7" height="4.7" fill="#2a788e"/>
<rect x="304.2" y="532.7" width="4.7" height="4.7" fill="#2a788e"/>
<rect x="308.3" y="532.7" width="4.7" height="4.7" fill="#440154"/>
<rect x="312.4" y="532.7" width="4.7" height="4.7" fill="#440154"/>
<rect x="316.5" y="532.7" width="4.7" height="4.7" fill="#440154"/>
<rect x="320.6" y="532.7" width="4.7" height="4.7" fill="#440154"/>
<rect x="324.7" y="532.7" width="4.7" height="4.7" fill="#440154"/>
<rect x="328.8" y="532.7" width="4.7" height="4.7" fill="#414185"/>
<rect x="333.0" y="532.7" width="4.7" height="4.7" fill="#414185"/>
<rect x="337.1" y="532.7" width="4.7" height="4.7" fill="#414185"/>
<rect x="341.2" y="532.7" width="4.7" height="4.7" fill="#414185"/>
<rect x="345.3" y="532.7" width="4.7" height="4.7" fill="#414185"/>
<rect x="349.4" y="532.7" width="4.7" height="4.7" fill="#414185"/>
<rect x="353.5" y="532.7" width="4.7" height="4.7" fill="#414185"/>
<rect x="357.6" y="532.7" width="4.7" height="4.7" fill="#414185"/>
<rect x="361.7" y="532.7" width="4.7" height="4.7" fill="#414185"/>
<rect x="365.8" y="532.7" width="4.7" height="4.7" fill="#414185"/>
<rect x="369.9" y="532.7" width="4.7" height="4.7" fill="#414185"/>
<rect x="374.0" y="532.7" width="4.7" height="4.7" fill="#414185"/>
<rect x="378.1" y="532.7" width="4.7" height="4.7" fill="#414185"/>
<rect x="382.2" y="532.7" width="4.7" height="4.7" fill="#414185"/>
<rect x="386.3" y="532.7" width="4.7" height="4.7" fill="#414185"/>
<rect x="390.4" y="532.7" width="4.7" height="4.7" fill="#414185"/>
<rect x="394.5" y="532.7" width="4.7" height="4.7" fill="#414185"/>
<rect x="398.6" y="532.7" width="4.7" height="4.7" fill="#414185"/>
<rect x="402.7" y="532.7" width="4.7" height="4.7" fill="#414185"/>
<rect x="250.9" y="536.8" width="4.7" height="4.7" fill="#355f8d"/>
<rect x="255.0" y="536.8" width="4.7" height="4.7" fill="#355f8d"/>
<rect x="259.1" y="536.8" width="4.7" height="4.7" fill="#355f8d"/>
<rect x="263.2" y="536.8" width="4.7" height="4.7" fill="#355f8d"/>
<rect x="267.3" y="536.8" width="4.7" height="4.7" fill="#355f8d"/>
<rect x="271.4" y="536.8" width="4.7" height="4.7" fill="#355f8d"/>
<rect x="275.5" y="536.8" width="4.7" height="4.7" fill="#355f8d"/>
<rect x="279.6" y="536.8" width="4.7" height="4.7" fill="#440154"/>
<rect x="283.7" y="536.8" width="4.7" height="4.7" fill="#440154"/>
<rect x="287.8" y="536.8" width="4.7" height="4.7" fill="#440154"/>
<rect x="291.9" y="536.8" width="4.7" height="4.7" fill="#2a788e"/>
<rect x="296.0" y="536.8" width="4.7" height="4.7" fill="#2a788e"/>
<rect x="300.1" y="536.8" width="4.7" height="4.7" fill="#2a788e"/>
<rect x="304.2" y="536.8" width="4.7" height="4.7" fill="#2a788e"/>
<rect x="308.3" y="536.8" width="4.7" height="4.7" fill="#2a788e"/>
<rect x="312.4" y="536.8" width="4.7" height="4.7" fill="#440154"/>
<rect x="316.5" y="536.8" width="4.7" height="4.7" fill="#440154"/>
<rect x="320.6" y="536.8" width="4.7" height="4.7" fill="#440154"/>
<rect x="324.7" y="536.8" width="4.7" height="4.7" fill="#440154"/>
<rect x="328.8" y="536.8" width="4.7" height="4.7" fill="#440154"/>
<rect x="333.0" y="536.8" width="4.7" height="4.7" fill="#414185"/>
<rect x="337.1" y="536.8" width="4.7" height="4.7" fill="#414185"/>
<rect x="341.2" y="536.8" width="4.7" height="4.7" fill="#414185"/>
<rect x="345.3" y="536.8" width="4.7" height="4.7" fill="#414185"/>
<rect x="349.4" y="536.8" width="4.7" height="4.7" fill="#414185"/>
<rect x="353.5" y="536.8" width="4.7" height="4.7" fill="#414185"/>
<rect x="357.6" y="536.8" width="4.7" height="4.7" fill="#414185"/>
<rect x="361.7" y="536.8" width="4.7" height="4.7" fill="#414185"/>
<rect x="365.8" y="536.8" width="4.7" height="4.7" fill="#414185"/>
<rect x="369.9" y="536.8" width="4.7" height="4.7" fill="#414185"/>
<rect x="374.0" y="536.8" width="4.7" height="4.7" fill="#414185"/>
<rect x="378.1" y="536.8" width="4.7" height="4.7" fill="#414185"/>
<rect x="382.2" y="536.8" width="4.7" height="4.7" fill="#414185"/>
<rect x="386.3" y="536.8" width="4.7" height="4.7" fill="#414185"/>
<rect x="390.4" y="536.8" width="4.7" height="4.7" fill="#414185"/>
<rect x="394.5" y="536.8" width="4.7" height="4.7" fill="#414185"/>
<rect x="398.6" y="536.8" width="4.7" height="4.7" fill="#414185"/>
<rect x="402.7" y="536.8" width="4.7" height="4.7" fill="#414185"/>
<rect x="250.9" y="540.9" width="4.7" height="4.7" fill="#355f8d"/>
<rect x="255.0" y="540.9" width="4.7" height="4.7" fill="#355f8d"/>
<rect x="259.1" y="540.9" width="4.7" height="4.7" fill="#355f8d"/>
<rect x="263.2" y="540.9" width="4.7" height="4.7" fill="#355f8d"/>
<rect x="267.3" y="540.9" width="4.7" height="4.7" fill="#355f8d"/>
<rect x="271.4" y="540.9" width="4.7" height="4.7" fill="#355f8d"/>
<rect x="275.5" y="540.9" width="4.7" height="4.7" fill="#355f8d"/>
<rect x="279.6" y="540.9" width="4.7" height="4.7" fill="#440154"/>
<rect x="283.7" y="540.9" width="4.7" height="4.7" fill="#440154"/>
<rect x="287.8" y="540.9" width="4.7" height="4.7" fill="#440154"/>
<rect x="291.9" y="540.9" width="4.7" height="4.7" fill="#440154"/>
<rect x="296.0" y="540.9" width="4.7" height="4.7" fill="#2a788e"/>
<rect x="300.1" y="540.9" width="4.7" height="4.7" fill="#2a788e"/>
<rect x="304.2" y="540.9" width="4.7" height="4.7" fill="#2a788e"/>
<rect x="308.3" y="540.9" width="4.7" height="4.7" fill="#2a788e"/>
<rect x="312.4" y="540.9" width="4.7" height="4.7" fill="#2a788e"/>
<rect x="316.5" y="540.9" width="4.7" height="4.7" fill="#2a788e"/>
<rect x="320.6" y="540.9" width="4.7" height="4.7" fill="#440154"/>
<rect x="324.7" y="540.9" width="4.7" height="4.7" fill="#440154"/>
<rect x="328.8" y="540.9" width="4.7" height="4.7" fill="#440154"/>
<rect x="333.0" y="540.9" width="4.7" height="4.7" fill="#414185"/>
<rect x="337.1" y="540.9" width="4.7" height="4.7" fill="#414185"/>
<rect x="341.2" y="540.9" width="4.7" height="4.7" fill="#414185"/>
<rect x="345.3" y="540.9" width="4.7" height="4.7" fill="#414185"/>
<rect x="349.4" y="540.9" width="4.7" height="4.7" fill="#414185"/>
<rect x="353.5" y="540.9" width="4.7" height="4.7" fill="#414185"/>
<rect x="357.6" y="540.9" width="4.7" height="4.7" fill="#414185"/>
<rect x="361.7" y="540.9" width="4.7" height="4.7" fill="#414185"/>
<rect x="365.8" y="540.9" width="4.7" height="4.7" fill="#414185"/>
<rect x="369.9" y="540.9" width="4.7" height="4.7" fill="#414185"/>
<rect x="374.0" y="540.9" width="4.7" height="4.7" fill="#414185"/>
<rect x="378.1" y="540.9" width="4.7" height="4.7" fill="#414185"/>
<rect x="382.2" y="540.9" width="4.7" height="4.7" fill="#414185"/>
<rect x="386.3" y="540.9" width="4.7" height="4.7" fill="#414185"/>
<rect x="390.4" y="540.9" width="4.7" height="4.7" fill="#414185"/>
<rect x="394.5" y="540.9" width="4.7" height="4.7" fill="#414185"/>
<rect x="398.6" y="540.9" width="4.7" height="4.7" fill="#414185"/>
<rect x="402.7" y="540.9" width="4.7" height="4.7" fill="#414185"/>
<rect x="250.9" y="545.0" width="4.7" height="4.7" fill="#355f8d"/>
<rect x="255.0" y="545.0" width="4.7" height="4.7" fill="#355f8d"/>
<rect x="259.1" y="545.0" width="4.7" height="4.7" fill="#2b738d"/>
<rect x="263.2" y="545.0" width="4.7" height="4.7" fill="#2b738d"/>
<rect x="267.3" y="545.0" width="4.7" height="4.7" fill="#2b738d"/>
<rect x="271.4" y="545.0" width="4.7" height="4.7" fill="#355f8d"/>
<rect x="275.5" y="545.0" width="4.7" height="4.7" fill="#355f8d"/>
<rect x="279.6" y="545.0" width="4.7" height="4.7" fill="#440154"/>
<rect x="283.7" y="545.0" width="4.7" height="4.7" fill="#440154"/>
<rect x="287.8" y="545.0" width="4.7" height="4.7" fill="#440154"/>
<rect x="291.9" y="545.0" width="4.7" height="4.7" fill="#440154"/>
<rect x="296.0" y="545.0" width="4.7" height="4.7" fill="#2a788e"/>
<rect x="300.1" y="545.0" width="4.7" height="4.7" fill="#2a788e"/>
<rect x="304.2" y="545.0" width="4.7" height="4.7" fill="#29ad7f"/>
<rect x="308.3" y="545.0" width="4.7" height="4.7" fill="#29ad7f"/>
<rect x="312.4" y="545.0" width="4.7" height="4.7" fill="#29ad7f"/>
<rect x="316.5" y="545.0" width="4.7" height="4.7" fill="#29ad7f"/>
<rect x="320.6" y="545.0" width="4.7" height="4.7" fill="#29ad7f"/>
<rect x="324.7" y="545.0" width="4.7" height="4.7" fill="#440154"/>
<rect x="328.8" y="545.0" width="4.7" height="4.7" fill="#440154"/>
<rect x="333.0" y="545.0" width="4.7" height="4.7" fill="#440154"/>
<rect x="337.1" y="545.0" width="4.7" height="4.7" fill="#414185"/>
<rect x="341.2" y="545.0" width="4.7" height="4.7" fill="#414185"/>
<rect x="345.3" y="545.0" width="4.7" height="4.7" fill="#414185"/>
<rect x="349.4" y="545.0" width="4.7" height="4.7" fill="#414185"/>
<rect x="353.5" y="545.0" width="4.7" height="4.7" fill="#414185"/>
<rect x="357.6" y="545.0" width="4.7" height="4.7" fill="#414185"/>
<rect x="361.7" y="545.0" width="4.7" height="4.7" fill="#414185"/>
<rect x="365.8" y="545.0" width="4.7" height="4.7" fill="#414185"/>
<rect x="369.9" y="545.0" width="4.7" height="4.7" fill="#414185"/>
<rect x="374.0" y="545.0" width="4.7" height="4.7" fill="#414185"/>
<rect x="378.1" y="545.0" width="4.7" height="4.7" fill="#414185"/>
<rect x="382.2" y="545.0" width="4.7" height="4.7" fill="#414185"/>
<rect x="386.3" y="545.0" width="4.7" height="4.7" fill="#414185"/>
<rect x="390.4" y="545.0" width="4.7" height="4.7" fill="#414185"/>
<rect x="394.5" y="545.0" width="4.7" height="4.7" fill="#414185"/>
<rect x="398.6" y="545.0" width="4.7" height="4.7" fill="#414185"/>
<rect x="402.7" y="545.0" width="4.7" height="4.7" fill="#414185"/>
<rect x="250.9" y="549.0" width="4.7" height="4.7" fill="#355f8d"/>
<rect x="255.0" y="549.0" width="4.7" height="4.7" fill="#355f8d"/>
<rect x="259.1" y="549.0" width="4.7" height="4.7" fill="#2b738d"/>
<rect x="263.2" y="549.0" width="4.7" height="4.7" fill="#2b738d"/>
<rect x="267.3" y="549.0" width="4.7" height="4.7" fill="#2b738d"/>
<rect x="271.4" y="549.0" width="4.7" height="4.7" fill="#2b738d"/>
<rect x="275.5" y="549.0" width="4.7" height="4.7" fill="#355f8d"/>
<rect x="279.6" y="549.0" width="4.7" height="4.7" fill="#355f8d"/>
<rect x="283.7" y="549.0" width="4.7" height="4.7" fill="#440154"/>
<rect x="287.8" y="549.0" width="4.7" height="4.7" fill="#440154"/>
<rect x="291.9" y="549.0" width="4.7" height="4.7" fill="#440154"/>
<rect x="296.0" y="549.0" width="4.7" height="4.7" fill="#2a788e"/>
<rect x="300.1" y="549.0" width="4.7" height="4.7" fill="#2a788e"/>
<rect x="304.2" y="549.0" width="4.7" height="4.7" fill="#29ad7f"/>
<rect x="308.3" y="549.0" width="4.7" height="4.7" fill="#29ad7f"/>
<rect x="312.4" y="549.0" width="4.7" height="4.7" fill="#29ad7f"/>
<rect x="316.5" y="549.0" width="4.7" height="4.7" fill="#29ad7f"/>
<rect x="320.6" y="549.0" width="4.7" height="4.7" fill="#29ad7f"/>
<rect x="324.7" y="549.0" width="4.7" height="4.7" fill="#2a788e"/>
<rect x="328.8" y="549.0" width="4.7" height="4.7" fill="#2a788e"/>
<rect x="333.0" y="549.0" width="4.7" height="4.7" fill="#440154"/>
<rect x="337.1" y="549.0" width="4.7" height="4.7" fill="#414185"/>
<rect x="341.2" y="549.0" width="4.7" height="4.7" fill="#414185"/>
<rect x="345.3" y="549.0" width="4.7" height="4.7" fill="#414185"/>
<rect x="349.4" y="549.0" width="4.7" height="4.7" fill="#414185"/>
<rect x="353.5" y="549.0" width="4.7" height="4.7" fill="#414185"/>
<rect x="357.6" y="549.0" width="4.7" height="4.7" fill="#440154"/>
<rect x="361.7" y="549.0" width="4.7" height="4.7" fill="#440154"/>
<rect x="365.8" y="549.0" width="4.7" height="4.7" fill="#440154"/>
<rect x="369.9" y="549.0" width="4.7" height="4.7" fill="#440154"/>
<rect x="374.0" y="549.0" width="4.7" height="4.7" fill="#414185"/>
<rect x="378.1" y="549.0" width="4.7" height="4.7" fill="#414185"/>
<rect x="382.2" y="549.0" width="4.7" height="4.7" fill="#414185"/>
<rect x="386.3" y="549.0" width="4.7" height="4.7" fill="#414185"/>
<rect x="390.4" y="549.0" width="4.7" height="4.7" fill="#440154"/>
<rect x="394.5" y="549.0" width="4.7" height="4.7" fill="#440154"/>
<rect x="398.6" y="549.0" width="4.7" height="4.7" fill="#440154"/>
<rect x="402.7" y="549.0" width="4.7" height="4.7" fill="#440154"/>
<rect x="250.9" y="553.1" width="4.7" height="4.7" fill="#355f8d"/>
<rect x="255.0" y="553.1" width="4.7" height="4.7" fill="#355f8d"/>
<rect x="259.1" y="553.1" width="4.7" height="4.7" fill="#2b738d"/>
<rect x="263.2" y="553.1" width="4.7" height="4.7" fill="#2b738d"/>
<rect x="267.3" y="553.1" width="4.7" height="4.7" fill="#2b738d"/>
<rect x="271.4" y="553.1" width="4.7" height="4.7" fill="#2b738d"/>
<rect x="275.5" y="553.1" width="4.7" height="4.7" fill="#355f8d"/>
<rect x="279.6" y="553.1" width="4.7" height="4.7" fill="#355f8d"/>
<rect x="283.7" y="553.1" width="4.7" height="4.7" fill="#440154"/>
<rect x="287.8" y="553.1" width="4.7" height="4.7" fill="#440154"/>
<rect x="291.9" y="553.1" width="4.7" height="4.7" fill="#440154"/>
<rect x="296.0" y="553.1" width="4.7" height="4.7" fill="#440154"/>
<rect x="300.1" y="553.1" width="4.7" height="4.7" fill="#2a788e"/>
<rect x="304.2" y="553.1" width="4.7" height="4.7" fill="#29ad7f"/>
<rect x="308.3" y="553.1" width="4.7" height="4.7" fill="#29ad7f"/>
<rect x="312.4" y="553.1" width="4.7" height="4.7" fill="#29ad7f"/>
<rect x="316.5" y="553.1" width="4.7" height="4.7" fill="#29ad7f"/>
<rect x="320.6" y="553.1" width="4.7" height="4.7" fill="#29ad7f"/>
<rect x="324.7" y="553.1" width="4.7" height="4.7" fill="#2a788e"/>
<rect x="328.8" y="553.1" width="4.7" height="4.7" fill="#2a788e"/>
<rect x="333.0" y="553.1" width="4.7" height="4.7" fill="#440154"/>
<rect x="337.1" y="553.1" width="4.7" height="4.7" fill="#440154"/>
<rect x="341.2" y="553.1" width="4.7" height="4.7" fill="#440154"/>
<rect x="345.3" y="553.1" width="4.7" height="4.7" fill="#440154"/>
<rect x="349.4" y="553.1" width="4.7" height="4.7" fill="#440154"/>
<rect x="353.5" y="553.1" width="4.7" height="4.7" fill="#440154"/>
<rect x="357.6" y="553.1" width="4.7" height="4.7" fill="#440154"/>
<rect x="361.7" y="553.1" width="4.7" height="4.7" fill="#440154"/>
<rect x="365.8" y="553.1" width="4.7" height="4.7" fill="#440154"/>
<rect x="369.9" y="553.1" width="4.7" height="4.7" fill="#440154"/>
<rect x="374.0" y="553.1" width="4.7" height="4.7" fill="#440154"/>
<rect x="378.1" y="553.1" width="4.7" height="4.7" fill="#440154"/>
<rect x="382.2" y="553.1" width="4.7" height="4.7" fill="#440154"/>
<rect x="386.3" y="553.1" width="4.7" height="4.7" fill="#440154"/>
<rect x="390.4" y="553.1" width="4.7" height="4.7" fill="#440154"/>
<rect x="394.5" y="553.1" width="4.7" height="4.7" fill="#440154"/>
<rect x="398.6" y="553.1" width="4.7" height="4.7" fill="#440154"/>
<rect x="402.7" y="553.1" width="4.7" height="4.7" fill="#440154"/>
<rect x="250.9" y="557.2" width="4.7" height="4.7" fill="#355f8d"/>
<rect x="255.0" y="557.2" width="4.7" height="4.7" fill="#355f8d"/>
<rect x="259.1" y="557.2" width="4.7" height="4.7" fill="#2b738d"/>
<rect x="263.2" y="557.2" width="4.7" height="4.7" fill="#2b738d"/>
<rect x="267.3" y="557.2" width="4.7" height="4.7" fill="#2b738d"/>
<rect x="271.4" y="557.2" width="4.7" height="4.7" fill="#355f8d"/>
<rect x="275.5" y="557.2" width="4.7" height="4.7" fill="#355f8d"/>
<rect x="279.6" y="557.2" width="4.7" height="4.7" fill="#440154"/>
<rect x="283.7" y="557.2" width="4.7" height="4.7" fill="#440154"/>
<rect x="287.8" y="557.2" width="4.7" height="4.7" fill="#440154"/>
<rect x="291.9" y="557.2" width="4.7" height="4.7" fill="#440154"/>
<rect x="296.0" y="557.2" width="4.7" height="4.7" fill="#440154"/>
<rect x="300.1" y="557.2" width="4.7" height="4.7" fill="#2a788e"/>
<rect x="304.2" y="557.2" width="4.7" height="4.7" fill="#2a788e"/>
<rect x="308.3" y="557.2" width="4.7" height="4.7" fill="#29ad7f"/>
<rect x="312.4" y="557.2" width="4.7" height="4.7" fill="#29ad7f"/>
<rect x="316.5" y="557.2" width="4.7" height="4.7" fill="#29ad7f"/>
<rect x="320.6" y="557.2" width="4.7" height="4.7" fill="#2a788e"/>
<rect x="324.7" y="557.2" width="4.7" height="4.7" fill="#2a788e"/>
<rect x="328.8" y="557.2" width="4.7" height="4.7" fill="#2a788e"/>
<rect x="333.0" y="557.2" width="4.7" height="4.7" fill="#440154"/>
<rect x="337.1" y="557.2" width="4.7" height="4.7" fill="#440154"/>
<rect x="341.2" y="557.2" width="4.7" height="4.7" fill="#440154"/>
<rect x="345.3" y="557.2" width="4.7" height="4.7" fill="#440154"/>
<rect x="349.4" y="557.2" width="4.7" height="4.7" fill="#440154"/>
<rect x="353.5" y="557.2" width="4.7" height="4.7" fill="#440154"/>
<rect x="357.6" y="557.2" width="4.7" height="4.7" fill="#440154"/>
<rect x="361.7" y="557.2" width="4.7" height="4.7" fill="#440154"/>
<rect x="365.8" y="557.2" width="4.7" height="4.7" fill="#440154"/>
<rect x="369.9" y="557.2" width="4.7" height="4.7" fill="#440154"/>
<rect x="374.0" y="557.2" width="4.7" height="4.7" fill="#440154"/>
<rect x="378.1" y="557.2" width="4.7" height="4.7" fill="#440154"/>
<rect x="382.2" y="557.2" width="4.7" height="4.7" fill="#440154"/>
<rect x="386.3" y="557.2" width="4.7" height="4.7" fill="#440154"/>
<rect x="390.4" y="557.2" width="4.7" height="4.7" fill="#440154"/>
<rect x="394.5" y="557.2" width="4.7" height="4.7" fill="#440154"/>
<rect x="398.6" y="557.2" width="4.7" height="4.7" fill="#440154"/>
<rect x="402.7" y="557.2" width="4.7" height="4.7" fill="#440154"/>
<rect x="250.9" y="561.3" width="4.7" height="4.7" fill="#355f8d"/>
<rect x="255.0" y="561.3" width="4.7" height="4.7" fill="#355f8d"/>
<rect x="259.1" y="561.3" width="4.7" height="4.7" fill="#355f8d"/>
<rect x="263.2" y="561.3" width="4.7" height="4.7" fill="#355f8d"/>
<rect x="267.3" y="561.3" width="4.7" height="4.7" fill="#355f8d"/>
<rect x="271.4" y="561.3" width="4.7" height="4.7" fill="#355f8d"/>
<rect x="275.5" y="561.3" width="4.7" height="4.7" fill="#355f8d"/>
<rect x="279.6" y="561.3" width="4.7" height="4.7" fill="#440154"/>
<rect x="283.7" y="561.3" width="4.7" height="4.7" fill="#440154"/>
<rect x="287.8" y="561.3" width="4.7" height="4.7" fill="#440154"/>
<rect x="291.9" y="561.3" width="4.7" height="4.7" fill="#440154"/>
<rect x="296.0" y="561.3" width="4.7" height="4.7" fill="#440154"/>
<rect x="300.1" y="561.3" width="4.7" height="4.7" fill="#440154"/>
<rect x="304.2" y="561.3" width="4.7" height="4.7" fill="#2a788e"/>
<rect x="308.3" y="561.3" width="4.7" height="4.7" fill="#2a788e"/>
<rect x="312.4" y="561.3" width="4.7" height="4.7" fill="#2a788e"/>
<rect x="316.5" y="561.3" width="4.7" height="4.7" fill="#2a788e"/>
<rect x="320.6" y="561.3" width="4.7" height="4.7" fill="#2a788e"/>
<rect x="324.7" y="561.3" width="4.7" height="4.7" fill="#2a788e"/>
<rect x="328.8" y="561.3" width="4.7" height="4.7" fill="#440154"/>
<rect x="333.0" y="561.3" width="4.7" height="4.7" fill="#440154"/>
<rect x="337.1" y="561.3" width="4.7" height="4.7" fill="#440154"/>
<rect x="341.2" y="561.3" width="4.7" height="4.7" fill="#440154"/>
<rect x="345.3" y="561.3" width="4.7" height="4.7" fill="#440154"/>
<rect x="349.4" y="561.3" width="4.7" height="4.7" fill="#440154"/>
<rect x="353.5" y="561.3" width="4.7" height="4.7" fill="#440154"/>
<rect x="357.6" y="561.3" width="4.7" height="4.7" fill="#440154"/>
<rect x="361.7" y="561.3" width="4.7" height="4.7" fill="#440154"/>
<rect x="365.8" y="561.3" width="4.7" height="4.7" fill="#440154"/>
<rect x="369.9" y="561.3" width="4.7" height="4.7" fill="#440154"/>
<rect x="374.0" y="561.3" width="4.7" height="4.7" fill="#440154"/>
<rect x="378.1" y="561.3" width="4.7" height="4.7" fill="#440154"/>
<rect x="382.2" y="561.3" width="4.7" height="4.7" fill="#440154"/>
<rect x="386.3" y="561.3" width="4.7" height="4.7" fill="#440154"/>
<rect x="390.4" y="561.3" width="4.7" height="4.7" fill="#440154"/>
<rect x="394.5" y="561.3" width="4.7" height="4.7" fill="#440154"/>
<rect x="398.6" y="561.3" width="4.7" height="4.7" fill="#440154"/>
<rect x="402.7" y="561.3" width="4.7" height="4.7" fill="#440154"/>
<rect x="250.9" y="565.4" width="4.7" height="4.7" fill="#355f8d"/>
<rect x="255.0" y="565.4" width="4.7" height="4.7" fill="#355f8d"/>
<rect x="259.1" y="565.4" width="4.7" height="4.7" fill="#355f8d"/>
<rect x="263.2" y="565.4" width="4.7" height="4.7" fill="#355f8d"/>
<rect x="267.3" y="565.4" width="4.7" height="4.7" fill="#355f8d"/>
<rect x="271.4" y="565.4" width="4.7" height="4.7" fill="#355f8d"/>
<rect x="275.5" y="565.4" width="4.7" height="4.7" fill="#440154"/>
<rect x="279.6" y="565.4" width="4.7" height="4.7" fill="#440154"/>
<rect x="283.7" y="565.4" width="4.7" height="4.7" fill="#440154"/>
<rect x="287.8" y="565.4" width="4.7" height="4.7" fill="#440154"/>
<rect x="291.9" y="565.4" width="4.7" height="4.7" fill="#440154"/>
<rect x="296.0" y="565.4" width="4.7" height="4.7" fill="#440154"/>
<rect x="300.1" y="565.4" width="4.7" height="4.7" fill="#440154"/>
<rect x="304.2" y="565.4" width="4.7" height="4.7" fill="#440154"/>
<rect x="308.3" y="565.4" width="4.7" height="4.7" fill="#2a788e"/>
<rect x="312.4" y="565.4" width="4.7" height="4.7" fill="#2a788e"/>
<rect x="316.5" y="565.4" width="4.7" height="4.7" fill="#2a788e"/>
<rect x="320.6" y="565.4" width="4.7" height="4.7" fill="#440154"/>
<rect x="324.7" y="565.4" width="4.7" height="4.7" fill="#440154"/>
<rect x="328.8" y="565.4" width="4.7" height="4.7" fill="#440154"/>
<rect x="333.0" y="565.4" width="4.7" height="4.7" fill="#440154"/>
<rect x="337.1" y="565.4" width="4.7" height="4.7" fill="#440154"/>
<rect x="341.2" y="565.4" width="4.7" height="4.7" fill="#440154"/>
<rect x="345.3" y="565.4" width="4.7" height="4.7" fill="#440154"/>
<rect x="349.4" y="565.4" width="4.7" height="4.7" fill="#440154"/>
<rect x="353.5" y="565.4" width="4.7" height="4.7" fill="#440154"/>
<rect x="357.6" y="565.4" width="4.7" height="4.7" fill="#440154"/>
<rect x="361.7" y="565.4" width="4.7" height="4.7" fill="#440154"/>
<rect x="365.8" y="565.4" width="4.7" height="4.7" fill="#440154"/>
<rect x="369.9" y="565.4" width="4.7" height="4.7" fill="#440154"/>
<rect x="374.0" y="565.4" width="4.7" height="4.7" fill="#440154"/>
<rect x="378.1" y="565.4" width="4.7" height="4.7" fill="#440154"/>
<rect x="382.2" y="565.4" width="4.7" height="4.7" fill="#440154"/>
<rect x="386.3" y="565.4" width="4.7" height="4.7" fill="#440154"/>
<rect x="390.4" y="565.4" width="4.7" height="4.7" fill="#440154"/>
<rect x="394.5" y="565.4" width="4.7" height="4.7" fill="#440154"/>
<rect x="398.6" y="565.4" width="4.7" height="4.7" fill="#440154"/>
<rect x="402.7" y="565.4" width="4.7" height="4.7" fill="#440154"/>
<rect x="250.9" y="569.5" width="4.7" height="4.7" fill="#355f8d"/>
<rect x="255.0" y="569.5" width="4.7" height="4.7" fill="#355f8d"/>
<rect x="259.1" y="569.5" width="4.7" height="4.7" fill="#355f8d"/>
<rect x="263.2" y="569.5" width="4.7" height="4.7" fill="#440154"/>
<rect x="267.3" y="569.5" width="4.7" height="4.7" fill="#440154"/>
<rect x="271.4" y="569.5" width="4.7" height="4.7" fill="#440154"/>
<rect x="275.5" y="569.5" width="4.7" height="4.7" fill="#440154"/>
<rect x="279.6" y="569.5" width="4.7" height="4.7" fill="#440154"/>
<rect x="283.7" y="569.5" width="4.7" height="4.7" fill="#440154"/>
<rect x="287.8" y="569.5" width="4.7" height="4.7" fill="#440154"/>
<rect x="291.9" y="569.5" width="4.7" height="4.7" fill="#440154"/>
<rect x="296.0" y="569.5" width="4.7" height="4.7" fill="#440154"/>
<rect x="300.1" y="569.5" width="4.7" height="4.7" fill="#440154"/>
<rect x="304.2" y="569.5" width="4.7" height="4.7" fill="#440154"/>
<rect x="308.3" y="569.5" width="4.7" height="4.7" fill="#440154"/>
<rect x="312.4" y="569.5" width="4.7" height="4.7" fill="#440154"/>
<rect x="316.5" y="569.5" width="4.7" height="4.7" fill="#440154"/>
<rect x="320.6" y="569.5" width="4.7" height="4.7" fill="#440154"/>
<rect x="324.7" y="569.5" width="4.7" height="4.7" fill="#440154"/>
<rect x="328.8" y="569.5" width="4.7" height="4.7" fill="#440154"/>
<rect x="333.0" y="569.5" width="4.7" height="4.7" fill="#440154"/>
<rect x="337.1" y="569.5" width="4.7" height="4.7" fill="#440154"/>
<rect x="341.2" y="569.5" width="4.7" height="4.7" fill="#440154"/>
<rect x="345.3" y="569.5" width="4.7" height="4.7" fill="#440154"/>
<rect x="349.4" y="569.5" width="4.7" height="4.7" fill="#440154"/>
<rect x="353.5" y="569.5" width="4.7" height="4.7" fill="#440154"/>
<rect x="357.6" y="569.5" width="4.7" height="4.7" fill="#440154"/>
<rect x="361.7" y="569.5" width="4.7" height="4.7" fill="#440154"/>
<rect x="365.8" y="569.5" width="4.7" height="4.7" fill="#440154"/>
<rect x="369.9" y="569.5" width="4.7" height="4.7" fill="#440154"/>
<rect x="374.0" y="569.5" width="4.7" height="4.7" fill="#440154"/>
<rect x="378.1" y="569.5" width="4.7" height="4.7" fill="#440154"/>
<rect x="382.2" y="569.5" width="4.7" height="4.7" fill="#440154"/>
<rect x="386.3" y="569.5" width="4.7" height="4.7" fill="#440154"/>
<rect x="390.4" y="569.5" width="4.7" height="4.7" fill="#440154"/>
<rect x="394.5" y="569.5" width="4.7" height="4.7" fill="#2e6d8d"/>
<rect x="398.6" y="569.5" width="4.7" height="4.7" fill="#2e6d8d"/>
<rect x="402.7" y="569.5" width="4.7" height="4.7" fill="#2e6d8d"/>
<rect x="250.9" y="573.6" width="4.7" height="4.7" fill="#440154"/>
<rect x="255.0" y="573.6" width="4.7" height="4.7" fill="#440154"/>
<rect x="259.1" y="573.6" width="4.7" height="4.7" fill="#440154"/>
<rect x="263.2" y="573.6" width="4.7" height="4.7" fill="#440154"/>
<rect x="267.3" y="573.6" width="4.7" height="4.7" fill="#440154"/>
<rect x="271.4" y="573.6" width="4.7" height="4.7" fill="#440154"/>
<rect x="275.5" y="573.6" width="4.7" height="4.7" fill="#440154"/>
<rect x="279.6" y="573.6" width="4.7" height="4.7" fill="#440154"/>
<rect x="283.7" y="573.6" width="4.7" height="4.7" fill="#440154"/>
<rect x="287.8" y="573.6" width="4.7" height="4.7" fill="#440154"/>
<rect x="291.9" y="573.6" width="4.7" height="4.7" fill="#440154"/>
<rect x="296.0" y="573.6" width="4.7" height="4.7" fill="#440154"/>
<rect x="300.1" y="573.6" width="4.7" height="4.7" fill="#440154"/>
<rect x="304.2" y="573.6" width="4.7" height="4.7" fill="#440154"/>
<rect x="308.3" y="573.6" width="4.7" height="4.7" fill="#440154"/>
<rect x="312.4" y="573.6" width="4.7" height="4.7" fill="#440154"/>
<rect x="316.5" y="573.6" width="4.7" height="4.7" fill="#440154"/>
<rect x="320.6" y="573.6" width="4.7" height="4.7" fill="#440154"/>
<rect x="324.7" y="573.6" width="4.7" height="4.7" fill="#440154"/>
<rect x="328.8" y="573.6" width="4.7" height="4.7" fill="#440154"/>
<rect x="333.0" y="573.6" width="4.7" height="4.7" fill="#2d6f8d"/>
<rect x="337.1" y="573.6" width="4.7" height="4.7" fill="#2d6f8d"/>
<rect x="341.2" y="573.6" width="4.7" height="4.7" fill="#2d6f8d"/>
<rect x="345.3" y="573.6" width="4.7" height="4.7" fill="#2d6f8d"/>
<rect x="349.4" y="573.6" width="4.7" height="4.7" fill="#440154"/>
<rect x="353.5" y="573.6" width="4.7" height="4.7" fill="#440154"/>
<rect x="357.6" y="573.6" width="4.7" height="4.7" fill="#440154"/>
<rect x="361.7" y="573.6" width="4.7" height="4.7" fill="#440154"/>
<rect x="365.8" y="573.6" width="4.7" height="4.7" fill="#440154"/>
<rect x="369.9" y="573.6" width="4.7" height="4.7" fill="#440154"/>
<rect x="374.0" y="573.6" width="4.7" height="4.7" fill="#440154"/>
<rect x="378.1" y="573.6" width="4.7" height="4.7" fill="#440154"/>
<rect x="382.2" y="573.6" width="4.7" height="4.7" fill="#440154"/>
<rect x="386.3" y="573.6" width="4.7" height="4.7" fill="#2e6d8d"/>
<rect x="390.4" y="573.6" width="4.7" height="4.7" fill="#2e6d8d"/>
<rect x="394.5" y="573.6" width="4.7" height="4.7" fill="#2e6d8d"/>
<rect x="398.6" y="573.6" width="4.7" height="4.7" fill="#2e6d8d"/>
<rect x="402.7" y="573.6" width="4.7" height="4.7" fill="#2e6d8d"/>
<rect x="250.9" y="577.6" width="4.7" height="4.7" fill="#440154"/>
<rect x="255.0" y="577.6" width="4.7" height="4.7" fill="#440154"/>
<rect x="259.1" y="577.6" width="4.7" height="4.7" fill="#440154"/>
<rect x="263.2" y="577.6" width="4.7" height="4.7" fill="#440154"/>
<rect x="267.3" y="577.6" width="4.7" height="4.7" fill="#440154"/>
<rect x="271.4" y="577.6" width="4.7" height="4.7" fill="#440154"/>
<rect x="275.5" y="577.6" width="4.7" height="4.7" fill="#440154"/>
<rect x="279.6" y="577.6" width="4.7" height="4.7" fill="#440154"/>
<rect x="283.7" y="577.6" width="4.7" height="4.7" fill="#440154"/>
<rect x="287.8" y="577.6" width="4.7" height="4.7" fill="#440154"/>
<rect x="291.9" y="577.6" width="4.7" height="4.7" fill="#440154"/>
<rect x="296.0" y="577.6" width="4.7" height="4.7" fill="#440154"/>
<rect x="300.1" y="577.6" width="4.7" height="4.7" fill="#440154"/>
<rect x="304.2" y="577.6" width="4.7" height="4.7" fill="#440154"/>
<rect x="308.3" y="577.6" width="4.7" height="4.7" fill="#440154"/>
<rect x="312.4" y="577.6" width="4.7" height="4.7" fill="#440154"/>
<rect x="316.5" y="577.6" width="4.7" height="4.7" fill="#440154"/>
<rect x="320.6" y="577.6" width="4.7" height="4.7" fill="#440154"/>
<rect x="324.7" y="577.6" width="4.7" height="4.7" fill="#440154"/>
<rect x="328.8" y="577.6" width="4.7" height="4.7" fill="#2d6f8d"/>
<rect x="333.0" y="577.6" width="4.7" height="4.7" fill="#2d6f8d"/>
<rect x="337.1" y="577.6" width="4.7" height="4.7" fill="#2d6f8d"/>
<rect x="341.2" y="577.6" width="4.7" height="4.7" fill="#2d6f8d"/>
<rect x="345.3" y="577.6" width="4.7" height="4.7" fill="#2d6f8d"/>
<rect x="349.4" y="577.6" width="4.7" height="4.7" fill="#2d6f8d"/>
<rect x="353.5" y="577.6" width="4.7" height="4.7" fill="#440154"/>
<rect x="357.6" y="577.6" width="4.7" height="4.7" fill="#440154"/>
<rect x="361.7" y="577.6" width="4.7" height="4.7" fill="#440154"/>
<rect x="365.8" y="577.6" width="4.7" height="4.7" fill="#440154"/>
<rect x="369.9" y="577.6" width="4.7" height="4.7" fill="#440154"/>
<rect x="374.0" y="577.6" width="4.7" height="4.7" fill="#440154"/>
<rect x="378.1" y="577.6" width="4.7" height="4.7" fill="#440154"/>
<rect x="382.2" y="577.6" width="4.7" height="4.7" fill="#2e6d8d"/>
<rect x="386.3" y="577.6" width="4.7" height="4.7" fill="#2e6d8d"/>
<rect x="390.4" y="577.6" width="4.7" height="4.7" fill="#2e6d8d"/>
<rect x="394.5" y="577.6" width="4.7" height="4.7" fill="#2e6d8d"/>
<rect x="398.6" y="577.6" width="4.7" height="4.7" fill="#2e6d8d"/>
<rect x="402.7" y="577.6" width="4.7" height="4.7" fill="#2e6d8d"/>
<rect x="250.9" y="581.7" width="4.7" height="4.7" fill="#440154"/>
<rect x="255.0" y="581.7" width="4.7" height="4.7" fill="#440154"/>
<rect x="259.1" y="581.7" width="4.7" height="4.7" fill="#440154"/>
<rect x="263.2" y="581.7" width="4.7" height="4.7" fill="#440154"/>
<rect x="267.3" y="581.7" width="4.7" height="4.7" fill="#440154"/>
<rect x="271.4" y="581.7" width="4.7" height="4.7" fill="#440154"/>
<rect x="275.5" y="581.7" width="4.7" height="4.7" fill="#440154"/>
<rect x="279.6" y="581.7" width="4.7" height="4.7" fill="#440154"/>
<rect x="283.7" y="581.7" width="4.7" height="4.7" fill="#440154"/>
<rect x="287.8" y="581.7" width="4.7" height="4.7" fill="#440154"/>
<rect x="291.9" y="581.7" width="4.7" height="4.7" fill="#440154"/>
<rect x="296.0" y="581.7" width="4.7" height="4.7" fill="#440154"/>
<rect x="300.1" y="581.7" width="4.7" height="4.7" fill="#440154"/>
<rect x="304.2" y="581.7" width="4.7" height="4.7" fill="#440154"/>
<rect x="308.3" y="581.7" width="4.7" height="4.7" fill="#440154"/>
<rect x="312.4" y="581.7" width="4.7" height="4.7" fill="#440154"/>
<rect x="316.5" y="581.7" width="4.7" height="4.7" fill="#440154"/>
<rect x="320.6" y="581.7" width="4.7" height="4.7" fill="#440154"/>
<rect x="324.7" y="581.7" width="4.7" height="4.7" fill="#2d6f8d"/>
<rect x="328.8" y="581.7" width="4.7" height="4.7" fill="#2d6f8d"/>
<rect x="333.0" y="581.7" width="4.7" height="4.7" fill="#2d6f8d"/>
<rect x="337.1" y="581.7" width="4.7" height="4.7" fill="#2d6f8d"/>
<rect x="341.2" y="581.7" width="4.7" height="4.7" fill="#2d6f8d"/>
<rect x="345.3" y="581.7" width="4.7" height="4.7" fill="#2d6f8d"/>
<rect x="349.4" y="581.7" width="4.7" height="4.7" fill="#2d6f8d"/>
<rect x="353.5" y="581.7" width="4.7" height="4.7" fill="#440154"/>
<rect x="357.6" y="581.7" width="4.7" height="4.7" fill="#440154"/>
<rect x="361.7" y="581.7" width="4.7" height="4.7" fill="#440154"/>
<rect x="365.8" y="581.7" width="4.7" height="4.7" fill="#440154"/>
<rect x="369.9" y="581.7" width="4.7" height="4.7" fill="#440154"/>
<rect x="374.0" y="581.7" width="4.7" height="4.7" fill="#440154"/>
<rect x="378.1" y="581.7" width="4.7" height="4.7" fill="#440154"/>
<rect x="382.2" y="581.7" width="4.7" height="4.7" fill="#2e6d8d"/>
<rect x="386.3" y="581.7" width="4.7" height="4.7" fill="#2e6d8d"/>
<rect x="390.4" y="581.7" width="4.7" height="4.7" fill="#2e6d8d"/>
<rect x="394.5" y="581.7" width="4.7" height="4.7" fill="#2e6d8d"/>
<rect x="398.6" y="581.7" width="4.7" height="4.7" fill="#2e6d8d"/>
<rect x="402.7" y="581.7" width="4.7" height="4.7" fill="#2e6d8d"/>
<rect x="250.9" y="585.8" width="4.7" height="4.7" fill="#440154"/>
<rect x="255.0" y="585.8" width="4.7" height="4.7" fill="#440154"/>
<rect x="259.1" y="585.8" width="4.7" height="4.7" fill="#440154"/>
<rect x="263.2" y="585.8" width="4.7" height="4.7" fill="#440154"/>
<rect x="267.3" y="585.8" width="4.7" height="4.7" fill="#440154"/>
<rect x="271.4" y="585.8" width="4.7" height="4.7" fill="#440154"/>
<rect x="275.5" y="585.8" width="4.7" height="4.7" fill="#440154"/>
<rect x="279.6" y="585.8" width="4.7" height="4.7" fill="#440154"/>
<rect x="283.7" y="585.8" width="4.7" height="4.7" fill="#440154"/>
<rect x="287.8" y="585.8" width="4.7" height="4.7" fill="#440154"/>
<rect x="291.9" y="585.8" width="4.7" height="4.7" fill="#440154"/>
<rect x="296.0" y="585.8" width="4.7" height="4.7" fill="#440154"/>
<rect x="300.1" y="585.8" width="4.7" height="4.7" fill="#440154"/>
<rect x="304.2" y="585.8" width="4.7" height="4.7" fill="#440154"/>
<rect x="308.3" y="585.8" width="4.7" height="4.7" fill="#440154"/>
<rect x="312.4" y="585.8" width="4.7" height="4.7" fill="#440154"/>
<rect x="316.5" y="585.8" width="4.7" height="4.7" fill="#440154"/>
<rect x="320.6" y="585.8" width="4.7" height="4.7" fill="#2d6f8d"/>
<rect x="324.7" y="585.8" width="4.7" height="4.7" fill="#2d6f8d"/>
<rect x="328.8" y="585.8" width="4.7" height="4.7" fill="#2d6f8d"/>
<rect x="333.0" y="585.8" width="4.7" height="4.7" fill="#25838d"/>
<rect x="337.1" y="585.8" width="4.7" height="4.7" fill="#25838d"/>
<rect x="341.2" y="585.8" width="4.7" height="4.7" fill="#25838d"/>
<rect x="345.3" y="585.8" width="4.7" height="4.7" fill="#2d6f8d"/>
<rect x="349.4" y="585.8" width="4.7" height="4.7" fill="#2d6f8d"/>
<rect x="353.5" y="585.8" width="4.7" height="4.7" fill="#2d6f8d"/>
<rect x="357.6" y="585.8" width="4.7" height="4.7" fill="#440154"/>
<rect x="361.7" y="585.8" width="4.7" height="4.7" fill="#440154"/>
<rect x="365.8" y="585.8" width="4.7" height="4.7" fill="#440154"/>
<rect x="369.9" y="585.8" width="4.7" height="4.7" fill="#440154"/>
<rect x="374.0" y="585.8" width="4.7" height="4.7" fill="#440154"/>
<rect x="378.1" y="585.8" width="4.7" height="4.7" fill="#440154"/>
<rect x="382.2" y="585.8" width="4.7" height="4.7" fill="#2e6d8d"/>
<rect x="386.3" y="585.8" width="4.7" height="4.7" fill="#2e6d8d"/>
<rect x="390.4" y="585.8" width="4.7" height="4.7" fill="#2e6d8d"/>
<rect x="394.5" y="585.8" width="4.7" height="4.7" fill="#2e6d8d"/>
<rect x="398.6" y="585.8" width="4.7" height="4.7" fill="#2e6d8d"/>
<rect x="402.7" y="585.8" width="4.7" height="4.7" fill="#2e6d8d"/>
<rect x="250.9" y="589.9" width="4.7" height="4.7" fill="#3f4887"/>
<rect x="255.0" y="589.9" width="4.7" height="4.7" fill="#3f4887"/>
<rect x="259.1" y="589.9" width="4.7" height="4.7" fill="#3f4887"/>
<rect x="263.2" y="589.9" width="4.7" height="4.7" fill="#3f4887"/>
<rect x="267.3" y="589.9" width="4.7" height="4.7" fill="#3f4887"/>
<rect x="271.4" y="589.9" width="4.7" height="4.7" fill="#3f4887"/>
<rect x="275.5" y="589.9" width="4.7" height="4.7" fill="#440154"/>
<rect x="279.6" y="589.9" width="4.7" height="4.7" fill="#440154"/>
<rect x="283.7" y="589.9" width="4.7" height="4.7" fill="#440154"/>
<rect x="287.8" y="589.9" width="4.7" height="4.7" fill="#440154"/>
<rect x="291.9" y="589.9" width="4.7" height="4.7" fill="#440154"/>
<rect x="296.0" y="589.9" width="4.7" height="4.7" fill="#440154"/>
<rect x="300.1" y="589.9" width="4.7" height="4.7" fill="#440154"/>
<rect x="304.2" y="589.9" width="4.7" height="4.7" fill="#440154"/>
<rect x="308.3" y="589.9" width="4.7" height="4.7" fill="#440154"/>
<rect x="312.4" y="589.9" width="4.7" height="4.7" fill="#440154"/>
<rect x="316.5" y="589.9" width="4.7" height="4.7" fill="#2d6f8d"/>
<rect x="320.6" y="589.9" width="4.7" height="4.7" fill="#2d6f8d"/>
<rect x="324.7" y="589.9" width="4.7" height="4.7" fill="#25838d"/>
<rect x="328.8" y="589.9" width="4.7" height="4.7" fill="#25838d"/>
<rect x="333.0" y="589.9" width="4.7" height="4.7" fill="#25838d"/>
<rect x="337.1" y="589.9" width="4.7" height="4.7" fill="#25838d"/>
<rect x="341.2" y="589.9" width="4.7" height="4.7" fill="#25838d"/>
<rect x="345.3" y="589.9" width="4.7" height="4.7" fill="#25838d"/>
<rect x="349.4" y="589.9" width="4.7" height="4.7" fill="#2d6f8d"/>
<rect x="353.5" y="589.9" width="4.7" height="4.7" fill="#2d6f8d"/>
<rect x="357.6" y="589.9" width="4.7" height="4.7" fill="#2d6f8d"/>
<rect x="361.7" y="589.9" width="4.7" height="4.7" fill="#440154"/>
<rect x="365.8" y="589.9" width="4.7" height="4.7" fill="#440154"/>
<rect x="369.9" y="589.9" width="4.7" height="4.7" fill="#440154"/>
<rect x="374.0" y="589.9" width="4.7" height="4.7" fill="#440154"/>
<rect x="378.1" y="589.9" width="4.7" height="4.7" fill="#440154"/>
<rect x="382.2" y="589.9" width="4.7" height="4.7" fill="#2e6d8d"/>
<rect x="386.3" y="589.9" width="4.7" height="4.7" fill="#2e6d8d"/>
<rect x="390.4" y="589.9" width="4.7" height="4.7" fill="#2e6d8d"/>
<rect x="394.5" y="589.9" width="4.7" height="4.7" fill="#2e6d8d"/>
<rect x="398.6" y="589.9" width="4.7" height="4.7" fill="#2e6d8d"/>
<rect x="402.7" y="589.9" width="4.7" height="4.7" fill="#2e6d8d"/>
<rect x="250.9" y="594.0" width="4.7" height="4.7" fill="#3f4887"/>
<rect x="255.0" y="594.0" width="4.7" height="4.7" fill="#3f4887"/>
<rect x="259.1" y="594.0" width="4.7" height="4.7" fill="#3f4887"/>
<rect x="263.2" y="594.0" width="4.7" height="4.7" fill="#3f4887"/>
<rect x="267.3" y="594.0" width="4.7" height="4.7" fill="#3f4887"/>
<rect x="271.4" y="594.0" width="4.7" height="4.7" fill="#3f4887"/>
<rect x="275.5" y="594.0" width="4.7" height="4.7" fill="#3f4887"/>
<rect x="279.6" y="594.0" width="4.7" height="4.7" fill="#440154"/>
<rect x="283.7" y="594.0" width="4.7" height="4.7" fill="#440154"/>
<rect x="287.8" y="594.0" width="4.7" height="4.7" fill="#440154"/>
<rect x="291.9" y="594.0" width="4.7" height="4.7" fill="#440154"/>
<rect x="296.0" y="594.0" width="4.7" height="4.7" fill="#440154"/>
<rect x="300.1" y="594.0" width="4.7" height="4.7" fill="#440154"/>
<rect x="304.2" y="594.0" width="4.7" height="4.7" fill="#440154"/>
<rect x="308.3" y="594.0" width="4.7" height="4.7" fill="#440154"/>
<rect x="312.4" y="594.0" width="4.7" height="4.7" fill="#2d6f8d"/>
<rect x="316.5" y="594.0" width="4.7" height="4.7" fill="#2d6f8d"/>
<rect x="320.6" y="594.0" width="4.7" height="4.7" fill="#25838d"/>
<rect x="324.7" y="594.0" width="4.7" height="4.7" fill="#25838d"/>
<rect x="328.8" y="594.0" width="4.7" height="4.7" fill="#25838d"/>
<rect x="333.0" y="594.0" width="4.7" height="4.7" fill="#25838d"/>
<rect x="337.1" y="594.0" width="4.7" height="4.7" fill="#25838d"/>
<rect x="341.2" y="594.0" width="4.7" height="4.7" fill="#25838d"/>
<rect x="345.3" y="594.0" width="4.7" height="4.7" fill="#25838d"/>
<rect x="349.4" y="594.0" width="4.7" height="4.7" fill="#25838d"/>
<rect x="353.5" y="594.0" width="4.7" height="4.7" fill="#2d6f8d"/>
<rect x="357.6" y="594.0" width="4.7" height="4.7" fill="#2d6f8d"/>
<rect x="361.7" y="594.0" width="4.7" height="4.7" fill="#440154"/>
<rect x="365.8" y="594.0" width="4.7" height="4.7" fill="#440154"/>
<rect x="369.9" y="594.0" width="4.7" height="4.7" fill="#440154"/>
<rect x="374.0" y="594.0" width="4.7" height="4.7" fill="#440154"/>
<rect x="378.1" y="594.0" width="4.7" height="4.7" fill="#440154"/>
<rect x="382.2" y="594.0" width="4.7" height="4.7" fill="#2e6d8d"/>
<rect x="386.3" y="594.0" width="4.7" height="4.7" fill="#2e6d8d"/>
<rect x="390.4" y="594.0" width="4.7" height="4.7" fill="#2e6d8d"/>
<rect x="394.5" y="594.0" width="4.7" height="4.7" fill="#218f8c"/>
<rect x="398.6" y="594.0" width="4.7" height="4.7" fill="#218f8c"/>
<rect x="402.7" y="594.0" width="4.7" height="4.7" fill="#218f8c"/>
<rect x="250.9" y="598.1" width="4.7" height="4.7" fill="#3f4887"/>
<rect x="255.0" y="598.1" width="4.7" height="4.7" fill="#3f4887"/>
<rect x="259.1" y="598.1" width="4.7" height="4.7" fill="#3f4887"/>
<rect x="263.2" y="598.1" width="4.7" height="4.7" fill="#3f4887"/>
<rect x="267.3" y="598.1" width="4.7" height="4.7" fill="#3f4887"/>
<rect x="271.4" y="598.1" width="4.7" height="4.7" fill="#3f4887"/>
<rect x="275.5" y="598.1" width="4.7" height="4.7" fill="#3f4887"/>
<rect x="279.6" y="598.1" width="4.7" height="4.7" fill="#440154"/>
<rect x="283.7" y="598.1" width="4.7" height="4.7" fill="#440154"/>
<rect x="287.8" y="598.1" width="4.7" height="4.7" fill="#440154"/>
<rect x="291.9" y="598.1" width="4.7" height="4.7" fill="#440154"/>
<rect x="296.0" y="598.1" width="4.7" height="4.7" fill="#440154"/>
<rect x="300.1" y="598.1" width="4.7" height="4.7" fill="#440154"/>
<rect x="304.2" y="598.1" width="4.7" height="4.7" fill="#440154"/>
<rect x="308.3" y="598.1" width="4.7" height="4.7" fill="#2d6f8d"/>
<rect x="312.4" y="598.1" width="4.7" height="4.7" fill="#2d6f8d"/>
<rect x="316.5" y="598.1" width="4.7" height="4.7" fill="#2d6f8d"/>
<rect x="320.6" y="598.1" width="4.7" height="4.7" fill="#2d6f8d"/>
<rect x="324.7" y="598.1" width="4.7" height="4.7" fill="#25838d"/>
<rect x="328.8" y="598.1" width="4.7" height="4.7" fill="#25838d"/>
<rect x="333.0" y="598.1" width="4.7" height="4.7" fill="#25838d"/>
<rect x="337.1" y="598.1" width="4.7" height="4.7" fill="#25838d"/>
<rect x="341.2" y="598.1" width="4.7" height="4.7" fill="#25838d"/>
<rect x="345.3" y="598.1" width="4.7" height="4.7" fill="#25838d"/>
<rect x="349.4" y="598.1" width="4.7" height="4.7" fill="#25838d"/>
<rect x="353.5" y="598.1" width="4.7" height="4.7" fill="#2d6f8d"/>
<rect x="357.6" y="598.1" width="4.7" height="4.7" fill="#2d6f8d"/>
<rect x="361.7" y="598.1" width="4.7" height="4.7" fill="#2d6f8d"/>
<rect x="365.8" y="598.1" width="4.7" height="4.7" fill="#440154"/>
<rect x="369.9" y="598.1" width="4.7" height="4.7" fill="#440154"/>
<rect x="374.0" y="598.1" width="4.7" height="4.7" fill="#440154"/>
<rect x="378.1" y="598.1" width="4.7" height="4.7" fill="#440154"/>
<rect x="382.2" y="598.1" width="4.7" height="4.7" fill="#2e6d8d"/>
<rect x="386.3" y="598.1" width="4.7" height="4.7" fill="#2e6d8d"/>
<rect x="390.4" y="598.1" width="4.7" height="4.7" fill="#2e6d8d"/>
<rect x="394.5" y="598.1" width="4.7" height="4.7" fill="#218f8c"/>
<rect x="398.6" y="598.1" width="4.7" height="4.7" fill="#218f8c"/>
<rect x="402.7" y="598.1" width="4.7" height="4.7" fill="#218f8c"/>
<rect x="250.9" y="602.2" width="4.7" height="4.7" fill="#3f4887"/>
<rect x="255.0" y="602.2" width="4.7" height="4.7" fill="#3f4887"/>
<rect x="259.1" y="602.2" width="4.7" height="4.7" fill="#3f4887"/>
<rect x="263.2" y="602.2" width="4.7" height="4.7" fill="#3f4887"/>
<rect x="267.3" y="602.2" width="4.7" height="4.7" fill="#3f4887"/>
<rect x="271.4" y="602.2" width="4.7" height="4.7" fill="#3f4887"/>
<rect x="275.5" y="602.2" width="4.7" height="4.7" fill="#3f4887"/>
<rect x="279.6" y="602.2" width="4.7" height="4.7" fill="#440154"/>
<rect x="283.7" y="602.2" width="4.7" height="4.7" fill="#440154"/>
<rect x="287.8" y="602.2" width="4.7" height="4.7" fill="#440154"/>
<rect x="291.9" y="602.2" width="4.7" height="4.7" fill="#440154"/>
<rect x="296.0" y="602.2" width="4.7" height="4.7" fill="#440154"/>
<rect x="300.1" y="602.2" width="4.7" height="4.7" fill="#440154"/>
<rect x="304.2" y="602.2" width="4.7" height="4.7" fill="#2d6f8d"/>
<rect x="308.3" y="602.2" width="4.7" height="4.7" fill="#2d6f8d"/>
<rect x="312.4" y="602.2" width="4.7" height="4.7" fill="#2d6f8d"/>
<rect x="316.5" y="602.2" width="4.7" height="4.7" fill="#2d6f8d"/>
<rect x="320.6" y="602.2" width="4.7" height="4.7" fill="#2d6f8d"/>
<rect x="324.7" y="602.2" width="4.7" height="4.7" fill="#25838d"/>
<rect x="328.8" y="602.2" width="4.7" height="4.7" fill="#25838d"/>
<rect x="333.0" y="602.2" width="4.7" height="4.7" fill="#25838d"/>
<rect x="337.1" y="602.2" width="4.7" height="4.7" fill="#25838d"/>
<rect x="341.2" y="602.2" width="4.7" height="4.7" fill="#25838d"/>
<rect x="345.3" y="602.2" width="4.7" height="4.7" fill="#25838d"/>
<rect x="349.4" y="602.2" width="4.7" height="4.7" fill="#2d6f8d"/>
<rect x="353.5" y="602.2" width="4.7" height="4.7" fill="#2d6f8d"/>
<rect x="357.6" y="602.2" width="4.7" height="4.7" fill="#2d6f8d"/>
<rect x="361.7" y="602.2" width="4.7" height="4.7" fill="#2d6f8d"/>
<rect x="365.8" y="602.2" width="4.7" height="4.7" fill="#2d6f8d"/>
<rect x="369.9" y="602.2" width="4.7" height="4.7" fill="#440154"/>
<rect x="374.0" y="602.2" width="4.7" height="4.7" fill="#440154"/>
<rect x="378.1" y="602.2" width="4.7" height="4.7" fill="#440154"/>
<rect x="382.2" y="602.2" width="4.7" height="4.7" fill="#440154"/>
<rect x="386.3" y="602.2" width="4.7" height="4.7" fill="#2e6d8d"/>
<rect x="390.4" y="602.2" width="4.7" height="4.7" fill="#2e6d8d"/>
<rect x="394.5" y="602.2" width="4.7" height="4.7" fill="#218f8c"/>
<rect x="398.6" y="602.2" width="4.7" height="4.7" fill="#218f8c"/>
<rect x="402.7" y="602.2" width="4.7" height="4.7" fill="#218f8c"/>
<rect x="250.9" y="606.2" width="4.7" height="4.7" fill="#3f4887"/>
<rect x="255.0" y="606.2" width="4.7" height="4.7" fill="#3f4887"/>
<rect x="259.1" y="606.2" width="4.7" height="4.7" fill="#3f4887"/>
<rect x="263.2" y="606.2" width="4.7" height="4.7" fill="#3f4887"/>
<rect x="267.3" y="606.2" width="4.7" height="4.7" fill="#3f4887"/>
<rect x="271.4" y="606.2" width="4.7" height="4.7" fill="#3f4887"/>
<rect x="275.5" y="606.2" width="4.7" height="4.7" fill="#3f4887"/>
<rect x="279.6" y="606.2" width="4.7" height="4.7" fill="#3f4887"/>
<rect x="283.7" y="606.2" width="4.7" height="4.7" fill="#440154"/>
<rect x="287.8" y="606.2" width="4.7" height="4.7" fill="#440154"/>
<rect x="291.9" y="606.2" width="4.7" height="4.7" fill="#440154"/>
<rect x="296.0" y="606.2" width="4.7" height="4.7" fill="#440154"/>
<rect x="300.1" y="606.2" width="4.7" height="4.7" fill="#2d6f8d"/>
<rect x="304.2" y="606.2" width="4.7" height="4.7" fill="#2d6f8d"/>
<rect x="308.3" y="606.2" width="4.7" height="4.7" fill="#2d6f8d"/>
<rect x="312.4" y="606.2" width="4.7" height="4.7" fill="#2d6f8d"/>
<rect x="316.5" y="606.2" width="4.7" height="4.7" fill="#2d6f8d"/>
<rect x="320.6" y="606.2" width="4.7" height="4.7" fill="#2d6f8d"/>
<rect x="324.7" y="606.2" width="4.7" height="4.7" fill="#2d6f8d"/>
<rect x="328.8" y="606.2" width="4.7" height="4.7" fill="#2d6f8d"/>
<rect x="333.0" y="606.2" width="4.7" height="4.7" fill="#25838d"/>
<rect x="337.1" y="606.2" width="4.7" height="4.7" fill="#25838d"/>
<rect x="341.2" y="606.2" width="4.7" height="4.7" fill="#25838d"/>
<rect x="345.3" y="606.2" width="4.7" height="4.7" fill="#2d6f8d"/>
<rect x="349.4" y="606.2" width="4.7" height="4.7" fill="#2d6f8d"/>
<rect x="353.5" y="606.2" width="4.7" height="4.7" fill="#2d6f8d"/>
<rect x="357.6" y="606.2" width="4.7" height="4.7" fill="#2d6f8d"/>
<rect x="361.7" y="606.2" width="4.7" height="4.7" fill="#2d6f8d"/>
<rect x="365.8" y="606.2" width="4.7" height="4.7" fill="#2d6f8d"/>
<rect x="369.9" y="606.2" width="4.7" height="4.7" fill="#2d6f8d"/>
<rect x="374.0" y="606.2" width="4.7" height="4.7" fill="#440154"/>
<rect x="378.1" y="606.2" width="4.7" height="4.7" fill="#440154"/>
<rect x="382.2" y="606.2" width="4.7" height="4.7" fill="#440154"/>
<rect x="386.3" y="606.2" width="4.7" height="4.7" fill="#2e6d8d"/>
<rect x="390.4" y="606.2" width="4.7" height="4.7" fill="#2e6d8d"/>
<rect x="394.5" y="606.2" width="4.7" height="4.7" fill="#218f8c"/>
<rect x="398.6" y="606.2" width="4.7" height="4.7" fill="#218f8c"/>
<rect x="402.7" y="606.2" width="4.7" height="4.7" fill="#218f8c"/>
<rect x="250.9" y="610.3" width="4.7" height="4.7" fill="#3f4887"/>
<rect x="255.0" y="610.3" width="4.7" height="4.7" fill="#3f4887"/>
<rect x="259.1" y="610.3" width="4.7" height="4.7" fill="#3f4887"/>
<rect x="263.2" y="610.3" width="4.7" height="4.7" fill="#3f4887"/>
<rect x="267.3" y="610.3" width="4.7" height="4.7" fill="#3f4887"/>
<rect x="271.4" y="610.3" width="4.7" height="4.7" fill="#3f4887"/>
<rect x="275.5" y="610.3" width="4.7" height="4.7" fill="#3f4887"/>
<rect x="279.6" y="610.3" width="4.7" height="4.7" fill="#3f4887"/>
<rect x="283.7" y="610.3" width="4.7" height="4.7" fill="#440154"/>
<rect x="287.8" y="610.3" width="4.7" height="4.7" fill="#440154"/>
<rect x="291.9" y="610.3" width="4.7" height="4.7" fill="#440154"/>
<rect x="296.0" y="610.3" width="4.7" height="4.7" fill="#2d6f8d"/>
<rect x="300.1" y="610.3" width="4.7" height="4.7" fill="#2d6f8d"/>
<rect x="304.2" y="610.3" width="4.7" height="4.7" fill="#2d6f8d"/>
<rect x="308.3" y="610.3" width="4.7" height="4.7" fill="#2d6f8d"/>
<rect x="312.4" y="610.3" width="4.7" height="4.7" fill="#2d6f8d"/>
<rect x="316.5" y="610.3" width="4.7" height="4.7" fill="#2d6f8d"/>
<rect x="320.6" y="610.3" width="4.7" height="4.7" fill="#2d6f8d"/>
<rect x="324.7" y="610.3" width="4.7" height="4.7" fill="#2d6f8d"/>
<rect x="328.8" y="610.3" width="4.7" height="4.7" fill="#2d6f8d"/>
<rect x="333.0" y="610.3" width="4.7" height="4.7" fill="#2d6f8d"/>
<rect x="337.1" y="610.3" width="4.7" height="4.7" fill="#2d6f8d"/>
<rect x="341.2" y="610.3" width="4.7" height="4.7" fill="#2d6f8d"/>
<rect x="345.3" y="610.3" width="4.7" height="4.7" fill="#2d6f8d"/>
<rect x="349.4" y="610.3" width="4.7" height="4.7" fill="#2d6f8d"/>
<rect x="353.5" y="610.3" width="4.7" height="4.7" fill="#2d6f8d"/>
<rect x="357.6" y="610.3" width="4.7" height="4.7" fill="#2d6f8d"/>
<rect x="361.7" y="610.3" width="4.7" height="4.7" fill="#2d6f8d"/>
<rect x="365.8" y="610.3" width="4.7" height="4.7" fill="#2d6f8d"/>
<rect x="369.9" y="610.3" width="4.7" height="4.7" fill="#2d6f8d"/>
<rect x="374.0" y="610.3" width="4.7" height="4.7" fill="#440154"/>
<rect x="378.1" y="610.3" width="4.7" height="4.7" fill="#440154"/>
<rect x="382.2" y="610.3" width="4.7" height="4.7" fill="#440154"/>
<rect x="386.3" y="610.3" width="4.7" height="4.7" fill="#2e6d8d"/>
<rect x="390.4" y="610.3" width="4.7" height="4.7" fill="#2e6d8d"/>
<rect x="394.5" y="610.3" width="4.7" height="4.7" fill="#218f8c"/>
<rect x="398.6" y="610.3" width="4.7" height="4.7" fill="#218f8c"/>
<rect x="402.7" y="610.3" width="4.7" height="4.7" fill="#218f8c"/>
<rect x="250.9" y="614.4" width="4.7" height="4.7" fill="#3f4887"/>
<rect x="255.0" y="614.4" width="4.7" height="4.7" fill="#3f4887"/>
<rect x="259.1" y="614.4" width="4.7" height="4.7" fill="#3f4887"/>
<rect x="263.2" y="614.4" width="4.7" height="4.7" fill="#3f4887"/>
<rect x="267.3" y="614.4" width="4.7" height="4.7" fill="#3f4887"/>
<rect x="271.4" y="614.4" width="4.7" height="4.7" fill="#3f4887"/>
<rect x="275.5" y="614.4" width="4.7" height="4.7" fill="#3f4887"/>
<rect x="279.6" y="614.4" width="4.7" height="4.7" fill="#3f4887"/>
<rect x="283.7" y="614.4" width="4.7" height="4.7" fill="#440154"/>
<rect x="287.8" y="614.4" width="4.7" height="4.7" fill="#440154"/>
<rect x="291.9" y="614.4" width="4.7" height="4.7" fill="#2d6f8d"/>
<rect x="296.0" y="614.4" width="4.7" height="4.7" fill="#2d6f8d"/>
<rect x="300.1" y="614.4" width="4.7" height="4.7" fill="#2d6f8d"/>
<rect x="304.2" y="614.4" width="4.7" height="4.7" fill="#2d6f8d"/>
<rect x="308.3" y="614.4" width="4.7" height="4.7" fill="#2d6f8d"/>
<rect x="312.4" y="614.4" width="4.7" height="4.7" fill="#2d6f8d"/>
<rect x="316.5" y="614.4" width="4.7" height="4.7" fill="#2d6f8d"/>
<rect x="320.6" y="614.4" width="4.7" height="4.7" fill="#2d6f8d"/>
<rect x="324.7" y="614.4" width="4.7" height="4.7" fill="#2d6f8d"/>
<rect x="328.8" y="614.4" width="4.7" height="4.7" fill="#2d6f8d"/>
<rect x="333.0" y="614.4" width="4.7" height="4.7" fill="#2d6f8d"/>
<rect x="337.1" y="614.4" width="4.7" height="4.7" fill="#2d6f8d"/>
<rect x="341.2" y="614.4" width="4.7" height="4.7" fill="#2d6f8d"/>
<rect x="345.3" y="614.4" width="4.7" height="4.7" fill="#2d6f8d"/>
<rect x="349.4" y="614.4" width="4.7" height="4.7" fill="#2d6f8d"/>
<rect x="353.5" y="614.4" width="4.7" height="4.7" fill="#2d6f8d"/>
<rect x="357.6" y="614.4" width="4.7" height="4.7" fill="#21928b"/>
<rect x="361.7" y="614.4" width="4.7" height="4.7" fill="#21928b"/>
<rect x="365.8" y="614.4" width="4.7" height="4.7" fill="#21928b"/>
<rect x="369.9" y="614.4" width="4.7" height="4.7" fill="#21928b"/>
<rect x="374.0" y="614.4" width="4.7" height="4.7" fill="#2d6f8d"/>
<rect x="378.1" y="614.4" width="4.7" height="4.7" fill="#440154"/>
<rect x="382.2" y="614.4" width="4.7" height="4.7" fill="#440154"/>
<rect x="386.3" y="614.4" width="4.7" height="4.7" fill="#440154"/>
<rect x="390.4" y="614.4" width="4.7" height="4.7" fill="#2e6d8d"/>
<rect x="394.5" y="614.4" width="4.7" height="4.7" fill="#218f8c"/>
<rect x="398.6" y="614.4" width="4.7" height="4.7" fill="#218f8c"/>
<rect x="402.7" y="614.4" width="4.7" height="4.7" fill="#218f8c"/>
<rect x="250.9" y="618.5" width="4.7" height="4.7" fill="#3f4887"/>
<rect x="255.0" y="618.5" width="4.7" height="4.7" fill="#3f4887"/>
<rect x="259.1" y="618.5" width="4.7" height="4.7" fill="#3f4887"/>
<rect x="263.2" y="618.5" width="4.7" height="4.7" fill="#3f4887"/>
<rect x="267.3" y="618.5" width="4.7" height="4.7" fill="#3f4887"/>
<rect x="271.4" y="618.5" width="4.7" height="4.7" fill="#3f4887"/>
<rect x="275.5" y="618.5" width="4.7" height="4.7" fill="#3f4887"/>
<rect x="279.6" y="618.5" width="4.7" height="4.7" fill="#3f4887"/>
<rect x="283.7" y="618.5" width="4.7" height="4.7" fill="#440154"/>
<rect x="287.8" y="618.5" width="4.7" height="4.7" fill="#2d6f8d"/>
<rect x="291.9" y="618.5" width="4.7" height="4.7" fill="#2d6f8d"/>
<rect x="296.0" y="618.5" width="4.7" height="4.7" fill="#2d6f8d"/>
<rect x="300.1" y="618.5" width="4.7" height="4.7" fill="#2d6f8d"/>
<rect x="304.2" y="618.5" width="4.7" height="4.7" fill="#2d6f8d"/>
<rect x="308.3" y="618.5" width="4.7" height="4.7" fill="#2d6f8d"/>
<rect x="312.4" y="618.5" width="4.7" height="4.7" fill="#2d6f8d"/>
<rect x="316.5" y="618.5" width="4.7" height="4.7" fill="#2d6f8d"/>
<rect x="320.6" y="618.5" width="4.7" height="4.7" fill="#2d6f8d"/>
<rect x="324.7" y="618.5" width="4.7" height="4.7" fill="#2d6f8d"/>
<rect x="328.8" y="618.5" width="4.7" height="4.7" fill="#2d6f8d"/>
<rect x="333.0" y="618.5" width="4.7" height="4.7" fill="#2d6f8d"/>
<rect x="337.1" y="618.5" width="4.7" height="4.7" fill="#2d6f8d"/>
<rect x="341.2" y="618.5" width="4.7" height="4.7" fill="#2d6f8d"/>
<rect x="345.3" y="618.5" width="4.7" height="4.7" fill="#2d6f8d"/>
<rect x="349.4" y="618.5" width="4.7" height="4.7" fill="#2d6f8d"/>
<rect x="353.5" y="618.5" width="4.7" height="4.7" fill="#2d6f8d"/>
<rect x="357.6" y="618.5" width="4.7" height="4.7" fill="#21928b"/>
<rect x="361.7" y="618.5" width="4.7" height="4.7" fill="#21928b"/>
<rect x="365.8" y="618.5" width="4.7" height="4.7" fill="#21928b"/>
<rect x="369.9" y="618.5" width="4.7" height="4.7" fill="#21928b"/>
<rect x="374.0" y="618.5" width="4.7" height="4.7" fill="#2d6f8d"/>
<rect x="378.1" y="618.5" width="4.7" height="4.7" fill="#2d6f8d"/>
<rect x="382.2" y="618.5" width="4.7" height="4.7" fill="#440154"/>
<rect x="386.3" y="618.5" width="4.7" height="4.7" fill="#440154"/>
<rect x="390.4" y="618.5" width="4.7" height="4.7" fill="#440154"/>
<rect x="394.5" y="618.5" width="4.7" height="4.7" fill="#2e6d8d"/>
<rect x="398.6" y="618.5" width="4.7" height="4.7" fill="#2e6d8d"/>
<rect x="402.7" y="618.5" width="4.7" height="4.7" fill="#2e6d8d"/>
<rect x="250.9" y="622.6" width="4.7" height="4.7" fill="#3f4887"/>
<rect x="255.0" y="622.6" width="4.7" height="4.7" fill="#3f4887"/>
<rect x="259.1" y="622.6" width="4.7" height="4.7" fill="#3f4887"/>
<rect x="263.2" y="622.6" width="4.7" height="4.7" fill="#3f4887"/>
<rect x="267.3" y="622.6" width="4.7" height="4.7" fill="#3f4887"/>
<rect x="271.4" y="622.6" width="4.7" height="4.7" fill="#3f4887"/>
<rect x="275.5" y="622.6" width="4.7" height="4.7" fill="#3f4887"/>
<rect x="279.6" y="622.6" width="4.7" height="4.7" fill="#3f4887"/>
<rect x="283.7" y="622.6" width="4.7" height="4.7" fill="#2d6f8d"/>
<rect x="287.8" y="622.6" width="4.7" height="4.7" fill="#2d6f8d"/>
<rect x="291.9" y="622.6" width="4.7" height="4.7" fill="#2d6f8d"/>
<rect x="296.0" y="622.6" width="4.7" height="4.7" fill="#2d6f8d"/>
<rect x="300.1" y="622.6" width="4.7" height="4.7" fill="#2d6f8d"/>
<rect x="304.2" y="622.6" width="4.7" height="4.7" fill="#2d6f8d"/>
<rect x="308.3" y="622.6" width="4.7" height="4.7" fill="#2d6f8d"/>
<rect x="312.4" y="622.6" width="4.7" height="4.7" fill="#2d6f8d"/>
<rect x="316.5" y="622.6" width="4.7" height="4.7" fill="#2d6f8d"/>
<rect x="320.6" y="622.6" width="4.7" height="4.7" fill="#2d6f8d"/>
<rect x="324.7" y="622.6" width="4.7" height="4.7" fill="#2d6f8d"/>
<rect x="328.8" y="622.6" width="4.7" height="4.7" fill="#2d6f8d"/>
<rect x="333.0" y="622.6" width="4.7" height="4.7" fill="#2d6f8d"/>
<rect x="337.1" y="622.6" width="4.7" height="4.7" fill="#2d6f8d"/>
<rect x="341.2" y="622.6" width="4.7" height="4.7" fill="#2d6f8d"/>
<rect x="345.3" y="622.6" width="4.7" height="4.7" fill="#2d6f8d"/>
<rect x="349.4" y="622.6" width="4.7" height="4.7" fill="#2d6f8d"/>
<rect x="353.5" y="622.6" width="4.7" height="4.7" fill="#2d6f8d"/>
<rect x="357.6" y="622.6" width="4.7" height="4.7" fill="#2d6f8d"/>
<rect x="361.7" y="622.6" width="4.7" height="4.7" fill="#21928b"/>
<rect x="365.8" y="622.6" width="4.7" height="4.7" fill="#21928b"/>
<rect x="369.9" y="622.6" width="4.7" height="4.7" fill="#21928b"/>
<rect x="374.0" y="622.6" width="4.7" height="4.7" fill="#21928b"/>
<rect x="378.1" y="622.6" width="4.7" height="4.7" fill="#2d6f8d"/>
<rect x="382.2" y="622.6" width="4.7" height="4.7" fill="#440154"/>
<rect x="386.3" y="622.6" width="4.7" height="4.7" fill="#440154"/>
<rect x="390.4" y="622.6" width="4.7" height="4.7" fill="#440154"/>
<rect x="394.5" y="622.6" width="4.7" height="4.7" fill="#440154"/>
<rect x="398.6" y="622.6" width="4.7" height="4.7" fill="#440154"/>
<rect x="402.7" y="622.6" width="4.7" height="4.7" fill="#440154"/>
<rect x="250.9" y="626.7" width="4.7" height="4.7" fill="#440154"/>
<rect x="255.0" y="626.7" width="4.7" height="4.7" fill="#440154"/>
<rect x="259.1" y="626.7" width="4.7" height="4.7" fill="#440154"/>
<rect x="263.2" y="626.7" width="4.7" height="4.7" fill="#440154"/>
<rect x="267.3" y="626.7" width="4.7" height="4.7" fill="#440154"/>
<rect x="271.4" y="626.7" width="4.7" height="4.7" fill="#440154"/>
<rect x="275.5" y="626.7" width="4.7" height="4.7" fill="#440154"/>
<rect x="279.6" y="626.7" width="4.7" height="4.7" fill="#2d6f8d"/>
<rect x="283.7" y="626.7" width="4.7" height="4.7" fill="#2d6f8d"/>
<rect x="287.8" y="626.7" width="4.7" height="4.7" fill="#2d6f8d"/>
<rect x="291.9" y="626.7" width="4.7" height="4.7" fill="#2d6f8d"/>
<rect x="296.0" y="626.7" width="4.7" height="4.7" fill="#2d6f8d"/>
<rect x="300.1" y="626.7" width="4.7" height="4.7" fill="#2d6f8d"/>
<rect x="304.2" y="626.7" width="4.7" height="4.7" fill="#2d6f8d"/>
<rect x="308.3" y="626.7" width="4.7" height="4.7" fill="#2d6f8d"/>
<rect x="312.4" y="626.7" width="4.7" height="4.7" fill="#2d6f8d"/>
<rect x="316.5" y="626.7" width="4.7" height="4.7" fill="#2d6f8d"/>
<rect x="320.6" y="626.7" width="4.7" height="4.7" fill="#2d6f8d"/>
<rect x="324.7" y="626.7" width="4.7" height="4.7" fill="#2d6f8d"/>
<rect x="328.8" y="626.7" width="4.7" height="4.7" fill="#2d6f8d"/>
<rect x="333.0" y="626.7" width="4.7" height="4.7" fill="#2d6f8d"/>
<rect x="337.1" y="626.7" width="4.7" height="4.7" fill="#2d6f8d"/>
<rect x="341.2" y="626.7" width="4.7" height="4.7" fill="#440154"/>
<rect x="345.3" y="626.7" width="4.7" height="4.7" fill="#440154"/>
<rect x="349.4" y="626.7" width="4.7" height="4.7" fill="#440154"/>
<rect x="353.5" y="626.7" width="4.7" height="4.7" fill="#2d6f8d"/>
<rect x="357.6" y="626.7" width="4.7" height="4.7" fill="#2d6f8d"/>
<rect x="361.7" y="626.7" width="4.7" height="4.7" fill="#2d6f8d"/>
<rect x="365.8" y="626.7" width="4.7" height="4.7" fill="#21928b"/>
<rect x="369.9" y="626.7" width="4.7" height="4.7" fill="#21928b"/>
<rect x="374.0" y="626.7" width="4.7" height="4.7" fill="#21928b"/>
<rect x="378.1" y="626.7" width="4.7" height="4.7" fill="#21928b"/>
<rect x="382.2" y="626.7" width="4.7" height="4.7" fill="#2d6f8d"/>
<rect x="386.3" y="626.7" width="4.7" height="4.7" fill="#440154"/>
<rect x="390.4" y="626.7" width="4.7" height="4.7" fill="#440154"/>
<rect x="394.5" y="626.7" width="4.7" height="4.7" fill="#440154"/>
<rect x="398.6" y="626.7" width="4.7" height="4.7" fill="#440154"/>
<rect x="402.7" y="626.7" width="4.7" height="4.7" fill="#440154"/>
<rect x="250.9" y="630.8" width="4.7" height="4.7" fill="#440154"/>
<rect x="255.0" y="630.8" width="4.7" height="4.7" fill="#440154"/>
<rect x="259.1" y="630.8" width="4.7" height="4.7" fill="#440154"/>
<rect x="263.2" y="630.8" width="4.7" height="4.7" fill="#440154"/>
<rect x="267.3" y="630.8" width="4.7" height="4.7" fill="#440154"/>
<rect x="271.4" y="630.8" width="4.7" height="4.7" fill="#440154"/>
<rect x="275.5" y="630.8" width="4.7" height="4.7" fill="#440154"/>
<rect x="279.6" y="630.8" width="4.7" height="4.7" fill="#440154"/>
<rect x="283.7" y="630.8" width="4.7" height="4.7" fill="#2d6f8d"/>
<rect x="287.8" y="630.8" width="4.7" height="4.7" fill="#2d6f8d"/>
<rect x="291.9" y="630.8" width="4.7" height="4.7" fill="#2d6f8d"/>
<rect x="296.0" y="630.8" width="4.7" height="4.7" fill="#2d6f8d"/>
<rect x="300.1" y="630.8" width="4.7" height="4.7" fill="#2d6f8d"/>
<rect x="304.2" y="630.8" width="4.7" height="4.7" fill="#2d6f8d"/>
<rect x="308.3" y="630.8" width="4.7" height="4.7" fill="#2d6f8d"/>
<rect x="312.4" y="630.8" width="4.7" height="4.7" fill="#2d6f8d"/>
<rect x="316.5" y="630.8" width="4.7" height="4.7" fill="#2d6f8d"/>
<rect x="320.6" y="630.8" width="4.7" height="4.7" fill="#2d6f8d"/>
<rect x="324.7" y="630.8" width="4.7" height="4.7" fill="#2d6f8d"/>
<rect x="328.8" y="630.8" width="4.7" height="4.7" fill="#2d6f8d"/>
<rect x="333.0" y="630.8" width="4.7" height="4.7" fill="#2d6f8d"/>
<rect x="337.1" y="630.8" width="4.7" height="4.7" fill="#440154"/>
<rect x="341.2" y="630.8" width="4.7" height="4.7" fill="#440154"/>
<rect x="345.3" y="630.8" width="4.7" height="4.7" fill="#440154"/>
<rect x="349.4" y="630.8" width="4.7" height="4.7" fill="#440154"/>
<rect x="353.5" y="630.8" width="4.7" height="4.7" fill="#440154"/>
<rect x="357.6" y="630.8" width="4.7" height="4.7" fill="#2d6f8d"/>
<rect x="361.7" y="630.8" width="4.7" height="4.7" fill="#2d6f8d"/>
<rect x="365.8" y="630.8" width="4.7" height="4.7" fill="#2d6f8d"/>
<rect x="369.9" y="630.8" width="4.7" height="4.7" fill="#21928b"/>
<rect x="374.0" y="630.8" width="4.7" height="4.7" fill="#21928b"/>
<rect x="378.1" y="630.8" width="4.7" height="4.7" fill="#21928b"/>
<rect x="382.2" y="630.8" width="4.7" height="4.7" fill="#2d6f8d"/>
<rect x="386.3" y="630.8" width="4.7" height="4.7" fill="#440154"/>
<rect x="390.4" y="630.8" width="4.7" height="4.7" fill="#440154"/>
<rect x="394.5" y="630.8" width="4.7" height="4.7" fill="#440154"/>
<rect x="398.6" y="630.8" width="4.7" height="4.7" fill="#440154"/>
<rect x="402.7" y="630.8" width="4.7" height="4.7" fill="#440154"/>
<rect x="250.9" y="634.9" width="4.7" height="4.7" fill="#440154"/>
<rect x="255.0" y="634.9" width="4.7" height="4.7" fill="#440154"/>
<rect x="259.1" y="634.9" width="4.7" height="4.7" fill="#440154"/>
<rect x="263.2" y="634.9" width="4.7" height="4.7" fill="#31678d"/>
<rect x="267.3" y="634.9" width="4.7" height="4.7" fill="#31678d"/>
<rect x="271.4" y="634.9" width="4.7" height="4.7" fill="#31678d"/>
<rect x="275.5" y="634.9" width="4.7" height="4.7" fill="#31678d"/>
<rect x="279.6" y="634.9" width="4.7" height="4.7" fill="#31678d"/>
<rect x="283.7" y="634.9" width="4.7" height="4.7" fill="#2d6f8d"/>
<rect x="287.8" y="634.9" width="4.7" height="4.7" fill="#2d6f8d"/>
<rect x="291.9" y="634.9" width="4.7" height="4.7" fill="#2d6f8d"/>
<rect x="296.0" y="634.9" width="4.7" height="4.7" fill="#2d6f8d"/>
<rect x="300.1" y="634.9" width="4.7" height="4.7" fill="#2d6f8d"/>
<rect x="304.2" y="634.9" width="4.7" height="4.7" fill="#2d6f8d"/>
<rect x="308.3" y="634.9" width="4.7" height="4.7" fill="#2d6f8d"/>
<rect x="312.4" y="634.9" width="4.7" height="4.7" fill="#2d6f8d"/>
<rect x="316.5" y="634.9" width="4.7" height="4.7" fill="#2d6f8d"/>
<rect x="320.6" y="634.9" width="4.7" height="4.7" fill="#2d6f8d"/>
<rect x="324.7" y="634.9" width="4.7" height="4.7" fill="#2d6f8d"/>
<rect x="328.8" y="634.9" width="4.7" height="4.7" fill="#2d6f8d"/>
<rect x="333.0" y="634.9" width="4.7" height="4.7" fill="#440154"/>
<rect x="337.1" y="634.9" width="4.7" height="4.7" fill="#440154"/>
<rect x="341.2" y="634.9" width="4.7" height="4.7" fill="#440154"/>
<rect x="345.3" y="634.9" width="4.7" height="4.7" fill="#440154"/>
<rect x="349.4" y="634.9" width="4.7" height="4.7" fill="#440154"/>
<rect x="353.5" y="634.9" width="4.7" height="4.7" fill="#440154"/>
<rect x="357.6" y="634.9" width="4.7" height="4.7" fill="#2d6f8d"/>
<rect x="361.7" y="634.9" width="4.7" height="4.7" fill="#2d6f8d"/>
<rect x="365.8" y="634.9" width="4.7" height="4.7" fill="#2d6f8d"/>
<rect x="369.9" y="634.9" width="4.7" height="4.7" fill="#21928b"/>
<rect x="374.0" y="634.9" width="4.7" height="4.7" fill="#21928b"/>
<rect x="378.1" y="634.9" width="4.7" height="4.7" fill="#21928b"/>
<rect x="382.2" y="634.9" width="4.7" height="4.7" fill="#21928b"/>
<rect x="386.3" y="634.9" width="4.7" height="4.7" fill="#2d6f8d"/>
<rect x="390.4" y="634.9" width="4.7" height="4.7" fill="#440154"/>
<rect x="394.5" y="634.9" width="4.7" height="4.7" fill="#440154"/>
<rect x="398.6" y="634.9" width="4.7" height="4.7" fill="#440154"/>
<rect x="402.7" y="634.9" width="4.7" height="4.7" fill="#440154"/>
<rect x="250.9" y="638.9" width="4.7" height="4.7" fill="#31678d"/>
<rect x="255.0" y="638.9" width="4.7" height="4.7" fill="#31678d"/>
<rect x="259.1" y="638.9" width="4.7" height="4.7" fill="#31678d"/>
<rect x="263.2" y="638.9" width="4.7" height="4.7" fill="#31678d"/>
<rect x="267.3" y="638.9" width="4.7" height="4.7" fill="#31678d"/>
<rect x="271.4" y="638.9" width="4.7" height="4.7" fill="#31678d"/>
<rect x="275.5" y="638.9" width="4.7" height="4.7" fill="#31678d"/>
<rect x="279.6" y="638.9" width="4.7" height="4.7" fill="#31678d"/>
<rect x="283.7" y="638.9" width="4.7" height="4.7" fill="#31678d"/>
<rect x="287.8" y="638.9" width="4.7" height="4.7" fill="#2d6f8d"/>
<rect x="291.9" y="638.9" width="4.7" height="4.7" fill="#2d6f8d"/>
<rect x="296.0" y="638.9" width="4.7" height="4.7" fill="#2d6f8d"/>
<rect x="300.1" y="638.9" width="4.7" height="4.7" fill="#2d6f8d"/>
<rect x="304.2" y="638.9" width="4.7" height="4.7" fill="#2d6f8d"/>
<rect x="308.3" y="638.9" width="4.7" height="4.7" fill="#2d6f8d"/>
<rect x="312.4" y="638.9" width="4.7" height="4.7" fill="#2d6f8d"/>
<rect x="316.5" y="638.9" width="4.7" height="4.7" fill="#2d6f8d"/>
<rect x="320.6" y="638.9" width="4.7" height="4.7" fill="#2d6f8d"/>
<rect x="324.7" y="638.9" width="4.7" height="4.7" fill="#2d6f8d"/>
<rect x="328.8" y="638.9" width="4.7" height="4.7" fill="#2d6f8d"/>
<rect x="333.0" y="638.9" width="4.7" height="4.7" fill="#440154"/>
<rect x="337.1" y="638.9" width="4.7" height="4.7" fill="#440154"/>
<rect x="341.2" y="638.9" width="4.7" height="4.7" fill="#440154"/>
<rect x="345.3" y="638.9" width="4.7" height="4.7" fill="#440154"/>
<rect x="349.4" y="638.9" width="4.7" height="4.7" fill="#440154"/>
<rect x="353.5" y="638.9" width="4.7" height="4.7" fill="#440154"/>
<rect x="357.6" y="638.9" width="4.7" height="4.7" fill="#440154"/>
<rect x="361.7" y="638.9" width="4.7" height="4.7" fill="#2d6f8d"/>
<rect x="365.8" y="638.9" width="4.7" height="4.7" fill="#2d6f8d"/>
<rect x="369.9" y="638.9" width="4.7" height="4.7" fill="#2d6f8d"/>
<rect x="374.0" y="638.9" width="4.7" height="4.7" fill="#21928b"/>
<rect x="378.1" y="638.9" width="4.7" height="4.7" fill="#21928b"/>
<rect x="382.2" y="638.9" width="4.7" height="4.7" fill="#21928b"/>
<rect x="386.3" y="638.9" width="4.7" height="4.7" fill="#2d6f8d"/>
<rect x="390.4" y="638.9" width="4.7" height="4.7" fill="#440154"/>
<rect x="394.5" y="638.9" width="4.7" height="4.7" fill="#440154"/>
<rect x="398.6" y="638.9" width="4.7" height="4.7" fill="#440154"/>
<rect x="402.7" y="638.9" width="4.7" height="4.7" fill="#440154"/>
<rect x="250.9" y="643.0" width="4.7" height="4.7" fill="#31678d"/>
<rect x="255.0" y="643.0" width="4.7" height="4.7" fill="#31678d"/>
<rect x="259.1" y="643.0" width="4.7" height="4.7" fill="#31678d"/>
<rect x="263.2" y="643.0" width="4.7" height="4.7" fill="#31678d"/>
<rect x="267.3" y="643.0" width="4.7" height="4.7" fill="#31678d"/>
<rect x="271.4" y="643.0" width="4.7" height="4.7" fill="#31678d"/>
<rect x="275.5" y="643.0" width="4.7" height="4.7" fill="#31678d"/>
<rect x="279.6" y="643.0" width="4.7" height="4.7" fill="#31678d"/>
<rect x="283.7" y="643.0" width="4.7" height="4.7" fill="#31678d"/>
<rect x="287.8" y="643.0" width="4.7" height="4.7" fill="#31678d"/>
<rect x="291.9" y="643.0" width="4.7" height="4.7" fill="#2d6f8d"/>
<rect x="296.0" y="643.0" width="4.7" height="4.7" fill="#2d6f8d"/>
<rect x="300.1" y="643.0" width="4.7" height="4.7" fill="#2d6f8d"/>
<rect x="304.2" y="643.0" width="4.7" height="4.7" fill="#2d6f8d"/>
<rect x="308.3" y="643.0" width="4.7" height="4.7" fill="#2d6f8d"/>
<rect x="312.4" y="643.0" width="4.7" height="4.7" fill="#2d6f8d"/>
<rect x="316.5" y="643.0" width="4.7" height="4.7" fill="#2d6f8d"/>
<rect x="320.6" y="643.0" width="4.7" height="4.7" fill="#2d6f8d"/>
<rect x="324.7" y="643.0" width="4.7" height="4.7" fill="#2d6f8d"/>
<rect x="328.8" y="643.0" width="4.7" height="4.7" fill="#440154"/>
<rect x="333.0" y="643.0" width="4.7" height="4.7" fill="#440154"/>
<rect x="337.1" y="643.0" width="4.7" height="4.7" fill="#440154"/>
<rect x="341.2" y="643.0" width="4.7" height="4.7" fill="#440154"/>
<rect x="345.3" y="643.0" width="4.7" height="4.7" fill="#440154"/>
<rect x="349.4" y="643.0" width="4.7" height="4.7" fill="#440154"/>
<rect x="353.5" y="643.0" width="4.7" height="4.7" fill="#440154"/>
<rect x="357.6" y="643.0" width="4.7" height="4.7" fill="#440154"/>
<rect x="361.7" y="643.0" width="4.7" height="4.7" fill="#2d6f8d"/>
<rect x="365.8" y="643.0" width="4.7" height="4.7" fill="#2d6f8d"/>
<rect x="369.9" y="643.0" width="4.7" height="4.7" fill="#2d6f8d"/>
<rect x="374.0" y="643.0" width="4.7" height="4.7" fill="#2d6f8d"/>
<rect x="378.1" y="643.0" width="4.7" height="4.7" fill="#2d6f8d"/>
<rect x="382.2" y="643.0" width="4.7" height="4.7" fill="#2d6f8d"/>
<rect x="386.3" y="643.0" width="4.7" height="4.7" fill="#2d6f8d"/>
<rect x="390.4" y="643.0" width="4.7" height="4.7" fill="#440154"/>
<rect x="394.5" y="643.0" width="4.7" height="4.7" fill="#440154"/>
<rect x="398.6" y="643.0" width="4.7" height="4.7" fill="#3e4a88"/>
<rect x="402.7" y="643.0" width="4.7" height="4.7" fill="#3e4a88"/>
<rect x="250.9" y="647.1" width="4.7" height="4.7" fill="#31678d"/>
<rect x="255.0" y="647.1" width="4.7" height="4.7" fill="#31678d"/>
<rect x="259.1" y="647.1" width="4.7" height="4.7" fill="#31678d"/>
<rect x="263.2" y="647.1" width="4.7" height="4.7" fill="#31678d"/>
<rect x="267.3" y="647.1" width="4.7" height="4.7" fill="#31678d"/>
<rect x="271.4" y="647.1" width="4.7" height="4.7" fill="#31678d"/>
<rect x="275.5" y="647.1" width="4.7" height="4.7" fill="#31678d"/>
<rect x="279.6" y="647.1" width="4.7" height="4.7" fill="#31678d"/>
<rect x="283.7" y="647.1" width="4.7" height="4.7" fill="#31678d"/>
<rect x="287.8" y="647.1" width="4.7" height="4.7" fill="#31678d"/>
<rect x="291.9" y="647.1" width="4.7" height="4.7" fill="#31678d"/>
<rect x="296.0" y="647.1" width="4.7" height="4.7" fill="#31678d"/>
<rect x="300.1" y="647.1" width="4.7" height="4.7" fill="#2d6f8d"/>
<rect x="304.2" y="647.1" width="4.7" height="4.7" fill="#2d6f8d"/>
<rect x="308.3" y="647.1" width="4.7" height="4.7" fill="#2d6f8d"/>
<rect x="312.4" y="647.1" width="4.7" height="4.7" fill="#2d6f8d"/>
<rect x="316.5" y="647.1" width="4.7" height="4.7" fill="#2d6f8d"/>
<rect x="320.6" y="647.1" width="4.7" height="4.7" fill="#2d6f8d"/>
<rect x="324.7" y="647.1" width="4.7" height="4.7" fill="#2d6f8d"/>
<rect x="328.8" y="647.1" width="4.7" height="4.7" fill="#440154"/>
<rect x="333.0" y="647.1" width="4.7" height="4.7" fill="#440154"/>
<rect x="337.1" y="647.1" width="4.7" height="4.7" fill="#440154"/>
<rect x="341.2" y="647.1" width="4.7" height="4.7" fill="#440154"/>
<rect x="345.3" y="647.1" width="4.7" height="4.7" fill="#440154"/>
<rect x="349.4" y="647.1" width="4.7" height="4.7" fill="#440154"/>
<rect x="353.5" y="647.1" width="4.7" height="4.7" fill="#440154"/>
<rect x="357.6" y="647.1" width="4.7" height="4.7" fill="#440154"/>
<rect x="361.7" y="647.1" width="4.7" height="4.7" fill="#440154"/>
<rect x="365.8" y="647.1" width="4.7" height="4.7" fill="#2d6f8d"/>
<rect x="369.9" y="647.1" width="4.7" height="4.7" fill="#2d6f8d"/>
<rect x="374.0" y="647.1" width="4.7" height="4.7" fill="#2d6f8d"/>
<rect x="378.1" y="647.1" width="4.7" height="4.7" fill="#2d6f8d"/>
<rect x="382.2" y="647.1" width="4.7" height="4.7" fill="#2d6f8d"/>
<rect x="386.3" y="647.1" width="4.7" height="4.7" fill="#2d6f8d"/>
<rect x="390.4" y="647.1" width="4.7" height="4.7" fill="#3e4a88"/>
<rect x="394.5" y="647.1" width="4.7" height="4.7" fill="#3e4a88"/>
<rect x="398.6" y="647.1" width="4.7" height="4.7" fill="#3e4a88"/>
<rect x="402.7" y="647.1" width="4.7" height="4.7" fill="#3e4a88"/>
<rect x="250.9" y="651.2" width="4.7" height="4.7" fill="#25838d"/>
<rect x="255.0" y="651.2" width="4.7" height="4.7" fill="#25838d"/>
<rect x="259.1" y="651.2" width="4.7" height="4.7" fill="#25838d"/>
<rect x="263.2" y="651.2" width="4.7" height="4.7" fill="#25838d"/>
<rect x="267.3" y="651.2" width="4.7" height="4.7" fill="#25838d"/>
<rect x="271.4" y="651.2" width="4.7" height="4.7" fill="#25838d"/>
<rect x="275.5" y="651.2" width="4.7" height="4.7" fill="#31678d"/>
<rect x="279.6" y="651.2" width="4.7" height="4.7" fill="#31678d"/>
<rect x="283.7" y="651.2" width="4.7" height="4.7" fill="#31678d"/>
<rect x="287.8" y="651.2" width="4.7" height="4.7" fill="#31678d"/>
<rect x="291.9" y="651.2" width="4.7" height="4.7" fill="#31678d"/>
<rect x="296.0" y="651.2" width="4.7" height="4.7" fill="#31678d"/>
<rect x="300.1" y="651.2" width="4.7" height="4.7" fill="#31678d"/>
<rect x="304.2" y="651.2" width="4.7" height="4.7" fill="#2d6f8d"/>
<rect x="308.3" y="651.2" width="4.7" height="4.7" fill="#2d6f8d"/>
<rect x="312.4" y="651.2" width="4.7" height="4.7" fill="#2d6f8d"/>
<rect x="316.5" y="651.2" width="4.7" height="4.7" fill="#2d6f8d"/>
<rect x="320.6" y="651.2" width="4.7" height="4.7" fill="#2d6f8d"/>
<rect x="324.7" y="651.2" width="4.7" height="4.7" fill="#2d6f8d"/>
<rect x="328.8" y="651.2" width="4.7" height="4.7" fill="#440154"/>
<rect x="333.0" y="651.2" width="4.7" height="4.7" fill="#440154"/>
<rect x="337.1" y="651.2" width="4.7" height="4.7" fill="#440154"/>
<rect x="341.2" y="651.2" width="4.7" height="4.7" fill="#440154"/>
<rect x="345.3" y="651.2" width="4.7" height="4.7" fill="#440154"/>
<rect x="349.4" y="651.2" width="4.7" height="4.7" fill="#440154"/>
<rect x="353.5" y="651.2" width="4.7" height="4.7" fill="#440154"/>
<rect x="357.6" y="651.2" width="4.7" height="4.7" fill="#440154"/>
<rect x="361.7" y="651.2" width="4.7" height="4.7" fill="#440154"/>
<rect x="365.8" y="651.2" width="4.7" height="4.7" fill="#3e4a88"/>
<rect x="369.9" y="651.2" width="4.7" height="4.7" fill="#3e4a88"/>
<rect x="374.0" y="651.2" width="4.7" height="4.7" fill="#3e4a88"/>
<rect x="378.1" y="651.2" width="4.7" height="4.7" fill="#3e4a88"/>
<rect x="382.2" y="651.2" width="4.7" height="4.7" fill="#3e4a88"/>
<rect x="386.3" y="651.2" width="4.7" height="4.7" fill="#3e4a88"/>
<rect x="390.4" y="651.2" width="4.7" height="4.7" fill="#3e4a88"/>
<rect x="394.5" y="651.2" width="4.7" height="4.7" fill="#3e4a88"/>
<rect x="398.6" y="651.2" width="4.7" height="4.7" fill="#3e4a88"/>
<rect x="402.7" y="651.2" width="4.7" height="4.7" fill="#3e4a88"/>
<rect x="250.9" y="655.3" width="4.7" height="4.7" fill="#25838d"/>
<rect x="255.0" y="655.3" width="4.7" height="4.7" fill="#25838d"/>
<rect x="259.1" y="655.3" width="4.7" height="4.7" fill="#25838d"/>
<rect x="263.2" y="655.3" width="4.7" height="4.7" fill="#25838d"/>
<rect x="267.3" y="655.3" width="4.7" height="4.7" fill="#25838d"/>
<rect x="271.4" y="655.3" width="4.7" height="4.7" fill="#25838d"/>
<rect x="275.5" y="655.3" width="4.7" height="4.7" fill="#31678d"/>
<rect x="279.6" y="655.3" width="4.7" height="4.7" fill="#31678d"/>
<rect x="283.7" y="655.3" width="4.7" height="4.7" fill="#31678d"/>
<rect x="287.8" y="655.3" width="4.7" height="4.7" fill="#31678d"/>
<rect x="291.9" y="655.3" width="4.7" height="4.7" fill="#31678d"/>
<rect x="296.0" y="655.3" width="4.7" height="4.7" fill="#31678d"/>
<rect x="300.1" y="655.3" width="4.7" height="4.7" fill="#31678d"/>
<rect x="304.2" y="655.3" width="4.7" height="4.7" fill="#31678d"/>
<rect x="308.3" y="655.3" width="4.7" height="4.7" fill="#2d6f8d"/>
<rect x="312.4" y="655.3" width="4.7" height="4.7" fill="#2d6f8d"/>
<rect x="316.5" y="655.3" width="4.7" height="4.7" fill="#2d6f8d"/>
<rect x="320.6" y="655.3" width="4.7" height="4.7" fill="#2d6f8d"/>
<rect x="324.7" y="655.3" width="4.7" height="4.7" fill="#440154"/>
<rect x="328.8" y="655.3" width="4.7" height="4.7" fill="#440154"/>
<rect x="333.0" y="655.3" width="4.7" height="4.7" fill="#440154"/>
<rect x="337.1" y="655.3" width="4.7" height="4.7" fill="#440154"/>
<rect x="341.2" y="655.3" width="4.7" height="4.7" fill="#440154"/>
<rect x="345.3" y="655.3" width="4.7" height="4.7" fill="#440154"/>
<rect x="349.4" y="655.3" width="4.7" height="4.7" fill="#440154"/>
<rect x="353.5" y="655.3" width="4.7" height="4.7" fill="#440154"/>
<rect x="357.6" y="655.3" width="4.7" height="4.7" fill="#440154"/>
<rect x="361.7" y="655.3" width="4.7" height="4.7" fill="#440154"/>
<rect x="365.8" y="655.3" width="4.7" height="4.7" fill="#440154"/>
<rect x="369.9" y="655.3" width="4.7" height="4.7" fill="#3e4a88"/>
<rect x="374.0" y="655.3" width="4.7" height="4.7" fill="#3e4a88"/>
<rect x="378.1" y="655.3" width="4.7" height="4.7" fill="#3e4a88"/>
<rect x="382.2" y="655.3" width="4.7" height="4.7" fill="#3e4a88"/>
<rect x="386.3" y="655.3" width="4.7" height="4.7" fill="#3e4a88"/>
<rect x="390.4" y="655.3" width="4.7" height="4.7" fill="#3e4a88"/>
<rect x="394.5" y="655.3" width="4.7" height="4.7" fill="#3e4a88"/>
<rect x="398.6" y="655.3" width="4.7" height="4.7" fill="#3e4a88"/>
<rect x="402.7" y="655.3" width="4.7" height="4.7" fill="#3e4a88"/>
<rect x="250.9" y="659.4" width="4.7" height="4.7" fill="#25838d"/>
<rect x="255.0" y="659.4" width="4.7" height="4.7" fill="#25838d"/>
<rect x="259.1" y="659.4" width="4.7" height="4.7" fill="#25838d"/>
<rect x="263.2" y="659.4" width="4.7" height="4.7" fill="#25838d"/>
<rect x="267.3" y="659.4" width="4.7" height="4.7" fill="#25838d"/>
<rect x="271.4" y="659.4" width="4.7" height="4.7" fill="#25838d"/>
<rect x="275.5" y="659.4" width="4.7" height="4.7" fill="#31678d"/>
<rect x="279.6" y="659.4" width="4.7" height="4.7" fill="#31678d"/>
<rect x="283.7" y="659.4" width="4.7" height="4.7" fill="#31678d"/>
<rect x="287.8" y="659.4" width="4.7" height="4.7" fill="#31678d"/>
<rect x="291.9" y="659.4" width="4.7" height="4.7" fill="#31678d"/>
<rect x="296.0" y="659.4" width="4.7" height="4.7" fill="#31678d"/>
<rect x="300.1" y="659.4" width="4.7" height="4.7" fill="#31678d"/>
<rect x="304.2" y="659.4" width="4.7" height="4.7" fill="#31678d"/>
<rect x="308.3" y="659.4" width="4.7" height="4.7" fill="#2d6f8d"/>
<rect x="312.4" y="659.4" width="4.7" height="4.7" fill="#2d6f8d"/>
<rect x="316.5" y="659.4" width="4.7" height="4.7" fill="#2d6f8d"/>
<rect x="320.6" y="659.4" width="4.7" height="4.7" fill="#2d6f8d"/>
<rect x="324.7" y="659.4" width="4.7" height="4.7" fill="#440154"/>
<rect x="328.8" y="659.4" width="4.7" height="4.7" fill="#440154"/>
<rect x="333.0" y="659.4" width="4.7" height="4.7" fill="#440154"/>
<rect x="337.1" y="659.4" width="4.7" height="4.7" fill="#440154"/>
<rect x="341.2" y="659.4" width="4.7" height="4.7" fill="#440154"/>
<rect x="345.3" y="659.4" width="4.7" height="4.7" fill="#440154"/>
<rect x="349.4" y="659.4" width="4.7" height="4.7" fill="#440154"/>
<rect x="353.5" y="659.4" width="4.7" height="4.7" fill="#440154"/>
<rect x="357.6" y="659.4" width="4.7" height="4.7" fill="#440154"/>
<rect x="361.7" y="659.4" width="4.7" height="4.7" fill="#440154"/>
<rect x="365.8" y="659.4" width="4.7" height="4.7" fill="#440154"/>
<rect x="369.9" y="659.4" width="4.7" height="4.7" fill="#3e4a88"/>
<rect x="374.0" y="659.4" width="4.7" height="4.7" fill="#3e4a88"/>
<rect x="378.1" y="659.4" width="4.7" height="4.7" fill="#3e4a88"/>
<rect x="382.2" y="659.4" width="4.7" height="4.7" fill="#3e4a88"/>
<rect x="386.3" y="659.4" width="4.7" height="4.7" fill="#3e4a88"/>
<rect x="390.4" y="659.4" width="4.7" height="4.7" fill="#3e4a88"/>
<rect x="394.5" y="659.4" width="4.7" height="4.7" fill="#3e4a88"/>
<rect x="398.6" y="659.4" width="4.7" height="4.7" fill="#3e4a88"/>
<rect x="402.7" y="659.4" width="4.7" height="4.7" fill="#3e4a88"/>
<rect x="250.9" y="663.5" width="4.7" height="4.7" fill="#25838d"/>
<rect x="255.0" y="663.5" width="4.7" height="4.7" fill="#25838d"/>
<rect x="259.1" y="663.5" width="4.7" height="4.7" fill="#25838d"/>
<rect x="263.2" y="663.5" width="4.7" height="4.7" fill="#25838d"/>
<rect x="267.3" y="663.5" width="4.7" height="4.7" fill="#25838d"/>
<rect x="271.4" y="663.5" width="4.7" height="4.7" fill="#25838d"/>
<rect x="275.5" y="663.5" width="4.7" height="4.7" fill="#25838d"/>
<rect x="279.6" y="663.5" width="4.7" height="4.7" fill="#31678d"/>
<rect x="283.7" y="663.5" width="4.7" height="4.7" fill="#31678d"/>
<rect x="287.8" y="663.5" width="4.7" height="4.7" fill="#31678d"/>
<rect x="291.9" y="663.5" width="4.7" height="4.7" fill="#31678d"/>
<rect x="296.0" y="663.5" width="4.7" height="4.7" fill="#31678d"/>
<rect x="300.1" y="663.5" width="4.7" height="4.7" fill="#31678d"/>
<rect x="304.2" y="663.5" width="4.7" height="4.7" fill="#31678d"/>
<rect x="308.3" y="663.5" width="4.7" height="4.7" fill="#31678d"/>
<rect x="312.4" y="663.5" width="4.7" height="4.7" fill="#2d6f8d"/>
<rect x="316.5" y="663.5" width="4.7" height="4.7" fill="#2d6f8d"/>
<rect x="320.6" y="663.5" width="4.7" height="4.7" fill="#2d6f8d"/>
<rect x="324.7" y="663.5" width="4.7" height="4.7" fill="#440154"/>
<rect x="328.8" y="663.5" width="4.7" height="4.7" fill="#440154"/>
<rect x="333.0" y="663.5" width="4.7" height="4.7" fill="#440154"/>
<rect x="337.1" y="663.5" width="4.7" height="4.7" fill="#440154"/>
<rect x="341.2" y="663.5" width="4.7" height="4.7" fill="#440154"/>
<rect x="345.3" y="663.5" width="4.7" height="4.7" fill="#440154"/>
<rect x="349.4" y="663.5" width="4.7" height="4.7" fill="#440154"/>
<rect x="353.5" y="663.5" width="4.7" height="4.7" fill="#440154"/>
<rect x="357.6" y="663.5" width="4.7" height="4.7" fill="#440154"/>
<rect x="361.7" y="663.5" width="4.7" height="4.7" fill="#440154"/>
<rect x="365.8" y="663.5" width="4.7" height="4.7" fill="#440154"/>
<rect x="369.9" y="663.5" width="4.7" height="4.7" fill="#3e4a88"/>
<rect x="374.0" y="663.5" width="4.7" height="4.7" fill="#3e4a88"/>
<rect x="378.1" y="663.5" width="4.7" height="4.7" fill="#3e4a88"/>
<rect x="382.2" y="663.5" width="4.7" height="4.7" fill="#3e4a88"/>
<rect x="386.3" y="663.5" width="4.7" height="4.7" fill="#3e4a88"/>
<rect x="390.4" y="663.5" width="4.7" height="4.7" fill="#3e4a88"/>
<rect x="394.5" y="663.5" width="4.7" height="4.7" fill="#3e4a88"/>
<rect x="398.6" y="663.5" width="4.7" height="4.7" fill="#3e4a88"/>
<rect x="402.7" y="663.5" width="4.7" height="4.7" fill="#3e4a88"/>
<rect x="250.9" y="667.5" width="4.7" height="4.7" fill="#25838d"/>
<rect x="255.0" y="667.5" width="4.7" height="4.7" fill="#25838d"/>
<rect x="259.1" y="667.5" width="4.7" height="4.7" fill="#25838d"/>
<rect x="263.2" y="667.5" width="4.7" height="4.7" fill="#25838d"/>
<rect x="267.3" y="667.5" width="4.7" height="4.7" fill="#25838d"/>
<rect x="271.4" y="667.5" width="4.7" height="4.7" fill="#25838d"/>
<rect x="275.5" y="667.5" width="4.7" height="4.7" fill="#25838d"/>
<rect x="279.6" y="667.5" width="4.7" height="4.7" fill="#31678d"/>
<rect x="283.7" y="667.5" width="4.7" height="4.7" fill="#31678d"/>
<rect x="287.8" y="667.5" width="4.7" height="4.7" fill="#31678d"/>
<rect x="291.9" y="667.5" width="4.7" height="4.7" fill="#31678d"/>
<rect x="296.0" y="667.5" width="4.7" height="4.7" fill="#31678d"/>
<rect x="300.1" y="667.5" width="4.7" height="4.7" fill="#31678d"/>
<rect x="304.2" y="667.5" width="4.7" height="4.7" fill="#31678d"/>
<rect x="308.3" y="667.5" width="4.7" height="4.7" fill="#31678d"/>
<rect x="312.4" y="667.5" width="4.7" height="4.7" fill="#2d6f8d"/>
<rect x="316.5" y="667.5" width="4.7" height="4.7" fill="#2d6f8d"/>
<rect x="320.6" y="667.5" width="4.7" height="4.7" fill="#2d6f8d"/>
<rect x="324.7" y="667.5" width="4.7" height="4.7" fill="#440154"/>
<rect x="328.8" y="667.5" width="4.7" height="4.7" fill="#440154"/>
<rect x="333.0" y="667.5" width="4.7" height="4.7" fill="#440154"/>
<rect x="337.1" y="667.5" width="4.7" height="4.7" fill="#440154"/>
<rect x="341.2" y="667.5" width="4.7" height="4.7" fill="#440154"/>
<rect x="345.3" y="667.5" width="4.7" height="4.7" fill="#440154"/>
<rect x="349.4" y="667.5" width="4.7" height="4.7" fill="#440154"/>
<rect x="353.5" y="667.5" width="4.7" height="4.7" fill="#440154"/>
<rect x="357.6" y="667.5" width="4.7" height="4.7" fill="#440154"/>
<rect x="361.7" y="667.5" width="4.7" height="4.7" fill="#440154"/>
<rect x="365.8" y="667.5" width="4.7" height="4.7" fill="#440154"/>
<rect x="369.9" y="667.5" width="4.7" height="4.7" fill="#3e4a88"/>
<rect x="374.0" y="667.5" width="4.7" height="4.7" fill="#3e4a88"/>
<rect x="378.1" y="667.5" width="4.7" height="4.7" fill="#3e4a88"/>
<rect x="382.2" y="667.5" width="4.7" height="4.7" fill="#3e4a88"/>
<rect x="386.3" y="667.5" width="4.7" height="4.7" fill="#3e4a88"/>
<rect x="390.4" y="667.5" width="4.7" height="4.7" fill="#3e4a88"/>
<rect x="394.5" y="667.5" width="4.7" height="4.7" fill="#3e4a88"/>
<rect x="398.6" y="667.5" width="4.7" height="4.7" fill="#3e4a88"/>
<rect x="402.7" y="667.5" width="4.7" height="4.7" fill="#3e4a88"/>
<rect x="250.9" y="671.6" width="4.7" height="4.7" fill="#25838d"/>
<rect x="255.0" y="671.6" width="4.7" height="4.7" fill="#25838d"/>
<rect x="259.1" y="671.6" width="4.7" height="4.7" fill="#25838d"/>
<rect x="263.2" y="671.6" width="4.7" height="4.7" fill="#25838d"/>
<rect x="267.3" y="671.6" width="4.7" height="4.7" fill="#25838d"/>
<rect x="271.4" y="671.6" width="4.7" height="4.7" fill="#25838d"/>
<rect x="275.5" y="671.6" width="4.7" height="4.7" fill="#25838d"/>
<rect x="279.6" y="671.6" width="4.7" height="4.7" fill="#31678d"/>
<rect x="283.7" y="671.6" width="4.7" height="4.7" fill="#31678d"/>
<rect x="287.8" y="671.6" width="4.7" height="4.7" fill="#31678d"/>
<rect x="291.9" y="671.6" width="4.7" height="4.7" fill="#31678d"/>
<rect x="296.0" y="671.6" width="4.7" height="4.7" fill="#31678d"/>
<rect x="300.1" y="671.6" width="4.7" height="4.7" fill="#31678d"/>
<rect x="304.2" y="671.6" width="4.7" height="4.7" fill="#31678d"/>
<rect x="308.3" y="671.6" width="4.7" height="4.7" fill="#31678d"/>
<rect x="312.4" y="671.6" width="4.7" height="4.7" fill="#31678d"/>
<rect x="316.5" y="671.6" width="4.7" height="4.7" fill="#2d6f8d"/>
<rect x="320.6" y="671.6" width="4.7" height="4.7" fill="#2d6f8d"/>
<rect x="324.7" y="671.6" width="4.7" height="4.7" fill="#440154"/>
<rect x="328.8" y="671.6" width="4.7" height="4.7" fill="#440154"/>
<rect x="333.0" y="671.6" width="4.7" height="4.7" fill="#440154"/>
<rect x="337.1" y="671.6" width="4.7" height="4.7" fill="#440154"/>
<rect x="341.2" y="671.6" width="4.7" height="4.7" fill="#440154"/>
<rect x="345.3" y="671.6" width="4.7" height="4.7" fill="#440154"/>
<rect x="349.4" y="671.6" width="4.7" height="4.7" fill="#440154"/>
<rect x="353.5" y="671.6" width="4.7" height="4.7" fill="#440154"/>
<rect x="357.6" y="671.6" width="4.7" height="4.7" fill="#440154"/>
<rect x="361.7" y="671.6" width="4.7" height="4.7" fill="#440154"/>
<rect x="365.8" y="671.6" width="4.7" height="4.7" fill="#440154"/>
<rect x="369.9" y="671.6" width="4.7" height="4.7" fill="#3e4a88"/>
<rect x="374.0" y="671.6" width="4.7" height="4.7" fill="#3e4a88"/>
<rect x="378.1" y="671.6" width="4.7" height="4.7" fill="#3e4a88"/>
<rect x="382.2" y="671.6" width="4.7" height="4.7" fill="#3e4a88"/>
<rect x="386.3" y="671.6" width="4.7" height="4.7" fill="#3e4a88"/>
<rect x="390.4" y="671.6" width="4.7" height="4.7" fill="#3e4a88"/>
<rect x="394.5" y="671.6" width="4.7" height="4.7" fill="#3e4a88"/>
<rect x="398.6" y="671.6" width="4.7" height="4.7" fill="#3e4a88"/>
<rect x="402.7" y="671.6" width="4.7" height="4.7" fill="#3e4a88"/>
<rect x="250.9" y="675.7" width="4.7" height="4.7" fill="#25838d"/>
<rect x="255.0" y="675.7" width="4.7" height="4.7" fill="#25838d"/>
<rect x="259.1" y="675.7" width="4.7" height="4.7" fill="#25838d"/>
<rect x="263.2" y="675.7" width="4.7" height="4.7" fill="#25838d"/>
<rect x="267.3" y="675.7" width="4.7" height="4.7" fill="#25838d"/>
<rect x="271.4" y="675.7" width="4.7" height="4.7" fill="#25838d"/>
<rect x="275.5" y="675.7" width="4.7" height="4.7" fill="#25838d"/>
<rect x="279.6" y="675.7" width="4.7" height="4.7" fill="#25838d"/>
<rect x="283.7" y="675.7" width="4.7" height="4.7" fill="#31678d"/>
<rect x="287.8" y="675.7" width="4.7" height="4.7" fill="#31678d"/>
<rect x="291.9" y="675.7" width="4.7" height="4.7" fill="#31678d"/>
<rect x="296.0" y="675.7" width="4.7" height="4.7" fill="#31678d"/>
<rect x="300.1" y="675.7" width="4.7" height="4.7" fill="#31678d"/>
<rect x="304.2" y="675.7" width="4.7" height="4.7" fill="#31678d"/>
<rect x="308.3" y="675.7" width="4.7" height="4.7" fill="#31678d"/>
<rect x="312.4" y="675.7" width="4.7" height="4.7" fill="#31678d"/>
<rect x="316.5" y="675.7" width="4.7" height="4.7" fill="#31678d"/>
<rect x="320.6" y="675.7" width="4.7" height="4.7" fill="#440154"/>
<rect x="324.7" y="675.7" width="4.7" height="4.7" fill="#440154"/>
<rect x="328.8" y="675.7" width="4.7" height="4.7" fill="#440154"/>
<rect x="333.0" y="675.7" width="4.7" height="4.7" fill="#440154"/>
<rect x="337.1" y="675.7" width="4.7" height="4.7" fill="#440154"/>
<rect x="341.2" y="675.7" width="4.7" height="4.7" fill="#440154"/>
<rect x="345.3" y="675.7" width="4.7" height="4.7" fill="#440154"/>
<rect x="349.4" y="675.7" width="4.7" height="4.7" fill="#440154"/>
<rect x="353.5" y="675.7" width="4.7" height="4.7" fill="#440154"/>
<rect x="357.6" y="675.7" width="4.7" height="4.7" fill="#440154"/>
<rect x="361.7" y="675.7" width="4.7" height="4.7" fill="#440154"/>
<rect x="365.8" y="675.7" width="4.7" height="4.7" fill="#440154"/>
<rect x="369.9" y="675.7" width="4.7" height="4.7" fill="#440154"/>
<rect x="374.0" y="675.7" width="4.7" height="4.7" fill="#3e4a88"/>
<rect x="378.1" y="675.7" width="4.7" height="4.7" fill="#3e4a88"/>
<rect x="382.2" y="675.7" width="4.7" height="4.7" fill="#3e4a88"/>
<rect x="386.3" y="675.7" width="4.7" height="4.7" fill="#3e4a88"/>
<rect x="390.4" y="675.7" width="4.7" height="4.7" fill="#3e4a88"/>
<rect x="394.5" y="675.7" width="4.7" height="4.7" fill="#3e4a88"/>
<rect x="398.6" y="675.7" width="4.7" height="4.7" fill="#3e4a88"/>
<rect x="402.7" y="675.7" width="4.7" height="4.7" fill="#3e4a88"/>
<rect x="250.9" y="679.8" width="4.7" height="4.7" fill="#25838d"/>
<rect x="255.0" y="679.8" width="4.7" height="4.7" fill="#25838d"/>
<rect x="259.1" y="679.8" width="4.7" height="4.7" fill="#25838d"/>
<rect x="263.2" y="679.8" width="4.7" height="4.7" fill="#25838d"/>
<rect x="267.3" y="679.8" width="4.7" height="4.7" fill="#25838d"/>
<rect x="271.4" y="679.8" width="4.7" height="4.7" fill="#25838d"/>
<rect x="275.5" y="679.8" width="4.7" height="4.7" fill="#25838d"/>
<rect x="279.6" y="679.8" width="4.7" height="4.7" fill="#25838d"/>
<rect x="283.7" y="679.8" width="4.7" height="4.7" fill="#31678d"/>
<rect x="287.8" y="679.8" width="4.7" height="4.7" fill="#31678d"/>
<rect x="291.9" y="679.8" width="4.7" height="4.7" fill="#31678d"/>
<rect x="296.0" y="679.8" width="4.7" height="4.7" fill="#31678d"/>
<rect x="300.1" y="679.8" width="4.7" height="4.7" fill="#31678d"/>
<rect x="304.2" y="679.8" width="4.7" height="4.7" fill="#31678d"/>
<rect x="308.3" y="679.8" width="4.7" height="4.7" fill="#31678d"/>
<rect x="312.4" y="679.8" width="4.7" height="4.7" fill="#31678d"/>
<rect x="316.5" y="679.8" width="4.7" height="4.7" fill="#31678d"/>
<rect x="320.6" y="679.8" width="4.7" height="4.7" fill="#440154"/>
<rect x="324.7" y="679.8" width="4.7" height="4.7" fill="#440154"/>
<rect x="328.8" y="679.8" width="4.7" height="4.7" fill="#440154"/>
<rect x="333.0" y="679.8" width="4.7" height="4.7" fill="#440154"/>
<rect x="337.1" y="679.8" width="4.7" height="4.7" fill="#440154"/>
<rect x="341.2" y="679.8" width="4.7" height="4.7" fill="#440154"/>
<rect x="345.3" y="679.8" width="4.7" height="4.7" fill="#440154"/>
<rect x="349.4" y="679.8" width="4.7" height="4.7" fill="#440154"/>
<rect x="353.5" y="679.8" width="4.7" height="4.7" fill="#440154"/>
<rect x="357.6" y="679.8" width="4.7" height="4.7" fill="#440154"/>
<rect x="361.7" y="679.8" width="4.7" height="4.7" fill="#440154"/>
<rect x="365.8" y="679.8" width="4.7" height="4.7" fill="#440154"/>
<rect x="369.9" y="679.8" width="4.7" height="4.7" fill="#440154"/>
<rect x="374.0" y="679.8" width="4.7" height="4.7" fill="#3e4a88"/>
<rect x="378.1" y="679.8" width="4.7" height="4.7" fill="#3e4a88"/>
<rect x="382.2" y="679.8" width="4.7" height="4.7" fill="#3e4a88"/>
<rect x="386.3" y="679.8" width="4.7" height="4.7" fill="#3e4a88"/>
<rect x="390.4" y="679.8" width="4.7" height="4.7" fill="#3e4a88"/>
<rect x="394.5" y="679.8" width="4.7" height="4.7" fill="#3e4a88"/>
<rect x="398.6" y="679.8" width="4.7" height="4.7" fill="#3e4a88"/>
<rect x="402.7" y="679.8" width="4.7" height="4.7" fill="#3e4a88"/>
</g>
<circle cx="313.6" cy="552.5" r="3.5" fill="#acdb30" filter="url(#blob2)"/>
<rect x="280.0" y="557.5" width="98.4" height="98.4" fill="none" stroke="#ff0000" stroke-width="1.2"/>
<text x="329.20" y="546.00" font-family="'Liberation Sans', sans-serif" font-size="10.5" fill="#ff0000" text-anchor="middle" >N</text>
<text x="265.50" y="610.50" font-family="'Liberation Sans', sans-serif" font-size="10.5" fill="#ff0000" text-anchor="middle" >E</text>
<path d="M292.0 606.5H321.0M336.5 606.5H366.0M329.0 569.5V599.0M329.0 614.0V643.8" stroke="#ff0000" stroke-width="1.2" fill="none"/>
</g>
<rect x="255.3" y="533.0" width="147.7" height="147.1" fill="none" stroke="#222" stroke-width="1.1"/>
<line x1="263.10" y1="680.1" x2="263.10" y2="683.6" stroke="#222" stroke-width="0.9"/>
<line x1="251.8" y1="672.30" x2="255.3" y2="672.30" stroke="#222" stroke-width="0.9"/>
<text x="260.60" y="696.00" font-family="'Liberation Sans', sans-serif" font-size="10" fill="#000" text-anchor="middle" textLength="12.50" lengthAdjust="spacingAndGlyphs" >−4</text>
<text x="248.80" y="675.90" font-family="'Liberation Sans', sans-serif" font-size="10" fill="#000" text-anchor="end" textLength="12.50" lengthAdjust="spacingAndGlyphs" >−4</text>
<line x1="295.90" y1="680.1" x2="295.90" y2="683.6" stroke="#222" stroke-width="0.9"/>
<line x1="251.8" y1="639.50" x2="255.3" y2="639.50" stroke="#222" stroke-width="0.9"/>
<text x="293.40" y="696.00" font-family="'Liberation Sans', sans-serif" font-size="10" fill="#000" text-anchor="middle" textLength="12.50" lengthAdjust="spacingAndGlyphs" >−2</text>
<text x="248.80" y="643.10" font-family="'Liberation Sans', sans-serif" font-size="10" fill="#000" text-anchor="end" textLength="12.50" lengthAdjust="spacingAndGlyphs" >−2</text>
<line x1="328.70" y1="680.1" x2="328.70" y2="683.6" stroke="#222" stroke-width="0.9"/>
<line x1="251.8" y1="606.70" x2="255.3" y2="606.70" stroke="#222" stroke-width="0.9"/>
<text x="328.70" y="696.00" font-family="'Liberation Sans', sans-serif" font-size="10" fill="#000" text-anchor="middle" textLength="6.20" lengthAdjust="spacingAndGlyphs" >0</text>
<text x="248.80" y="610.30" font-family="'Liberation Sans', sans-serif" font-size="10" fill="#000" text-anchor="end" textLength="6.20" lengthAdjust="spacingAndGlyphs" >0</text>
<line x1="361.50" y1="680.1" x2="361.50" y2="683.6" stroke="#222" stroke-width="0.9"/>
<line x1="251.8" y1="573.90" x2="255.3" y2="573.90" stroke="#222" stroke-width="0.9"/>
<text x="361.50" y="696.00" font-family="'Liberation Sans', sans-serif" font-size="10" fill="#000" text-anchor="middle" textLength="6.20" lengthAdjust="spacingAndGlyphs" >2</text>
<text x="248.80" y="577.50" font-family="'Liberation Sans', sans-serif" font-size="10" fill="#000" text-anchor="end" textLength="6.20" lengthAdjust="spacingAndGlyphs" >2</text>
<line x1="394.30" y1="680.1" x2="394.30" y2="683.6" stroke="#222" stroke-width="0.9"/>
<line x1="251.8" y1="541.10" x2="255.3" y2="541.10" stroke="#222" stroke-width="0.9"/>
<text x="394.30" y="696.00" font-family="'Liberation Sans', sans-serif" font-size="10" fill="#000" text-anchor="middle" textLength="6.20" lengthAdjust="spacingAndGlyphs" >4</text>
<text x="248.80" y="544.70" font-family="'Liberation Sans', sans-serif" font-size="10" fill="#000" text-anchor="end" textLength="6.20" lengthAdjust="spacingAndGlyphs" >4</text>
<text x="328.70" y="706.60" font-family="'Liberation Sans', sans-serif" font-size="10" fill="#000" text-anchor="middle" textLength="100.50" lengthAdjust="spacingAndGlyphs" >s/b: 0.97 +/- 0.074</text>
<clipPath id="c3"><rect x="440.8" y="532.5" width="147.8" height="147.8"/></clipPath>
<g clip-path="url(#c3)">
<rect x="440.8" y="532.5" width="147.8" height="147.8" fill="#d8d8d8" filter="url(#grimg2)"/>
<circle cx="496" cy="573" r="34" fill="#000" fill-opacity="0.6" filter="url(#blob)"/>
<circle cx="494.3" cy="571.7" r="26.5" fill="#000"/>
<circle cx="494.3" cy="571.7" r="26.5" fill="none" stroke="#e6b800" stroke-width="1.5"/>
<rect x="488.5" y="565.5" width="12.9" height="12.9" fill="none" stroke="#0000ff" stroke-width="1.5"/>
<rect x="465.6" y="557.6" width="98.4" height="98.4" fill="none" stroke="#ff0000" stroke-width="1.2"/>
<text x="514.00" y="546.00" font-family="'Liberation Sans', sans-serif" font-size="10.5" fill="#ff0000" text-anchor="middle" >N</text>
<text x="451.00" y="610.50" font-family="'Liberation Sans', sans-serif" font-size="10.5" fill="#ff0000" text-anchor="middle" >E</text>
<path d="M477.8 606.3H506.9M522.6 606.3H551.8M514.8 569.8V598.9M514.8 613.9V643.8" stroke="#ff0000" stroke-width="1.2" fill="none"/>
</g>
<rect x="440.8" y="532.5" width="147.8" height="147.8" fill="none" stroke="#222" stroke-width="1.1"/>
<line x1="449.20" y1="680.3" x2="449.20" y2="683.8" stroke="#222" stroke-width="0.9"/>
<line x1="437.3" y1="672.40" x2="440.8" y2="672.40" stroke="#222" stroke-width="0.9"/>
<text x="446.70" y="696.00" font-family="'Liberation Sans', sans-serif" font-size="10" fill="#000" text-anchor="middle" textLength="12.50" lengthAdjust="spacingAndGlyphs" >−4</text>
<text x="434.30" y="676.00" font-family="'Liberation Sans', sans-serif" font-size="10" fill="#000" text-anchor="end" textLength="12.50" lengthAdjust="spacingAndGlyphs" >−4</text>
<line x1="482.00" y1="680.3" x2="482.00" y2="683.8" stroke="#222" stroke-width="0.9"/>
<line x1="437.3" y1="639.60" x2="440.8" y2="639.60" stroke="#222" stroke-width="0.9"/>
<text x="479.50" y="696.00" font-family="'Liberation Sans', sans-serif" font-size="10" fill="#000" text-anchor="middle" textLength="12.50" lengthAdjust="spacingAndGlyphs" >−2</text>
<text x="434.30" y="643.20" font-family="'Liberation Sans', sans-serif" font-size="10" fill="#000" text-anchor="end" textLength="12.50" lengthAdjust="spacingAndGlyphs" >−2</text>
<line x1="514.80" y1="680.3" x2="514.80" y2="683.8" stroke="#222" stroke-width="0.9"/>
<line x1="437.3" y1="606.80" x2="440.8" y2="606.80" stroke="#222" stroke-width="0.9"/>
<text x="514.80" y="696.00" font-family="'Liberation Sans', sans-serif" font-size="10" fill="#000" text-anchor="middle" textLength="6.20" lengthAdjust="spacingAndGlyphs" >0</text>
<text x="434.30" y="610.40" font-family="'Liberation Sans', sans-serif" font-size="10" fill="#000" text-anchor="end" textLength="6.20" lengthAdjust="spacingAndGlyphs" >0</text>
<line x1="547.60" y1="680.3" x2="547.60" y2="683.8" stroke="#222" stroke-width="0.9"/>
<line x1="437.3" y1="574.00" x2="440.8" y2="574.00" stroke="#222" stroke-width="0.9"/>
<text x="547.60" y="696.00" font-family="'Liberation Sans', sans-serif" font-size="10" fill="#000" text-anchor="middle" textLength="6.20" lengthAdjust="spacingAndGlyphs" >2</text>
<text x="434.30" y="577.60" font-family="'Liberation Sans', sans-serif" font-size="10" fill="#000" text-anchor="end" textLength="6.20" lengthAdjust="spacingAndGlyphs" >2</text>
<line x1="580.40" y1="680.3" x2="580.40" y2="683.8" stroke="#222" stroke-width="0.9"/>
<line x1="437.3" y1="541.20" x2="440.8" y2="541.20" stroke="#222" stroke-width="0.9"/>
<text x="580.40" y="696.00" font-family="'Liberation Sans', sans-serif" font-size="10" fill="#000" text-anchor="middle" textLength="6.20" lengthAdjust="spacingAndGlyphs" >4</text>
<text x="434.30" y="544.80" font-family="'Liberation Sans', sans-serif" font-size="10" fill="#000" text-anchor="end" textLength="6.20" lengthAdjust="spacingAndGlyphs" >4</text>
<text x="514.80" y="706.60" font-family="'Liberation Sans', sans-serif" font-size="10" fill="#000" text-anchor="middle" textLength="120.50" lengthAdjust="spacingAndGlyphs" >m:17.5  re:1.6"  s:2.5"</text>
<text x="514.80" y="718.50" font-family="'Liberation Sans', sans-serif" font-size="10" fill="#000" text-anchor="middle" textLength="106.50" lengthAdjust="spacingAndGlyphs" >EWr: 0, PLAE: 0.173</text>
<text x="70.20" y="787.10" font-family="'Liberation Mono', monospace" font-size="13.8" fill="#000" stroke="#000" stroke-width="0.15" textLength="78.00" lengthAdjust="spacingAndGlyphs" >Separation</text>
<text x="70.20" y="801.30" font-family="'Liberation Mono', monospace" font-size="13.8" fill="#000" stroke="#000" stroke-width="0.15" textLength="85.80" lengthAdjust="spacingAndGlyphs" >Match score</text>
<text x="70.20" y="816.40" font-family="'Liberation Mono', monospace" font-size="13.8" fill="#000" stroke="#000" stroke-width="0.15" textLength="54.60" lengthAdjust="spacingAndGlyphs" >RA, Dec</text>
<text x="70.20" y="830.70" font-family="'Liberation Mono', monospace" font-size="13.8" fill="#000" stroke="#000" stroke-width="0.15" textLength="46.80" lengthAdjust="spacingAndGlyphs" >Spec z</text>
<text x="70.20" y="845.40" font-family="'Liberation Mono', monospace" font-size="13.8" fill="#000" stroke="#000" stroke-width="0.15" textLength="54.60" lengthAdjust="spacingAndGlyphs" >Photo z</text>
<text x="70.20" y="859.80" font-family="'Liberation Mono', monospace" font-size="13.8" fill="#000" stroke="#000" stroke-width="0.15" textLength="117.00" lengthAdjust="spacingAndGlyphs" >Est LyA rest-EW</text>
<text x="70.20" y="874.10" font-family="'Liberation Mono', monospace" font-size="13.8" fill="#000" stroke="#000" stroke-width="0.15" textLength="23.40" lengthAdjust="spacingAndGlyphs" >mag</text>
<text x="70.20" y="889.50" font-family="'Liberation Mono', monospace" font-size="13.8" fill="#000" stroke="#000" stroke-width="0.15" textLength="101.40" lengthAdjust="spacingAndGlyphs" >P(LAE)/P(OII)</text>
<text x="287.00" y="780.00" font-family="'Liberation Mono', monospace" font-size="13.8" fill="#0000ff" stroke="#0000ff" stroke-width="0.15" textLength="62.40" lengthAdjust="spacingAndGlyphs" >2.46774"</text>
<text x="287.00" y="794.40" font-family="'Liberation Mono', monospace" font-size="13.8" fill="#0000ff" stroke="#0000ff" stroke-width="0.15" textLength="39.00" lengthAdjust="spacingAndGlyphs" >1.000</text>
<text x="287.00" y="809.10" font-family="'Liberation Mono', monospace" font-size="13.8" fill="#0000ff" stroke="#0000ff" stroke-width="0.15" textLength="163.80" lengthAdjust="spacingAndGlyphs" >204.422762, 54.996265</text>
<text x="287.00" y="823.40" font-family="'Liberation Mono', monospace" font-size="13.8" fill="#0000ff" stroke="#0000ff" stroke-width="0.15" textLength="23.40" lengthAdjust="spacingAndGlyphs" >N/A</text>
<text x="287.00" y="838.10" font-family="'Liberation Mono', monospace" font-size="13.8" fill="#0000ff" stroke="#0000ff" stroke-width="0.15" textLength="23.40" lengthAdjust="spacingAndGlyphs" >N/A</text>
<text x="287.00" y="854.90" font-family="'Liberation Mono', monospace" font-size="13.8" fill="#0000ff" stroke="#0000ff" stroke-width="0.15" textLength="85.80" lengthAdjust="spacingAndGlyphs" >0.09(±0.03)</text>
<text x="373.50" y="854.00" font-family="'Liberation Sans', sans-serif" font-size="13" fill="#0000ff" text-anchor="start" font-style="italic">Å</text>
<text x="287.00" y="870.40" font-family="'Liberation Mono', monospace" font-size="13.8" fill="#0000ff" stroke="#0000ff" stroke-width="0.15" textLength="148.20" lengthAdjust="spacingAndGlyphs" >17.52(17.52,17.52)R</text>
<text x="286.80" y="886.10" font-family="'Liberation Sans', sans-serif" font-size="12.3" fill="#0000ff" text-anchor="start" textLength="34.50" lengthAdjust="spacingAndGlyphs" >0.168</text>
<text x="328.50" y="881.30" font-family="'Liberation Sans', sans-serif" font-size="8.6" fill="#0000ff" text-anchor="start" textLength="24.50" lengthAdjust="spacingAndGlyphs" >0.252</text>
<text x="328.50" y="889.50" font-family="'Liberation Sans', sans-serif" font-size="8.6" fill="#0000ff" text-anchor="start" textLength="24.50" lengthAdjust="spacingAndGlyphs" >0.107</text>
<text x="938.70" y="821.80" font-family="'Liberation Mono', monospace" font-size="13.8" fill="#000" stroke="#000" stroke-width="0.15" textLength="202.80" lengthAdjust="spacingAndGlyphs" >Phot z plot not available.</text>
</svg></body></html>
